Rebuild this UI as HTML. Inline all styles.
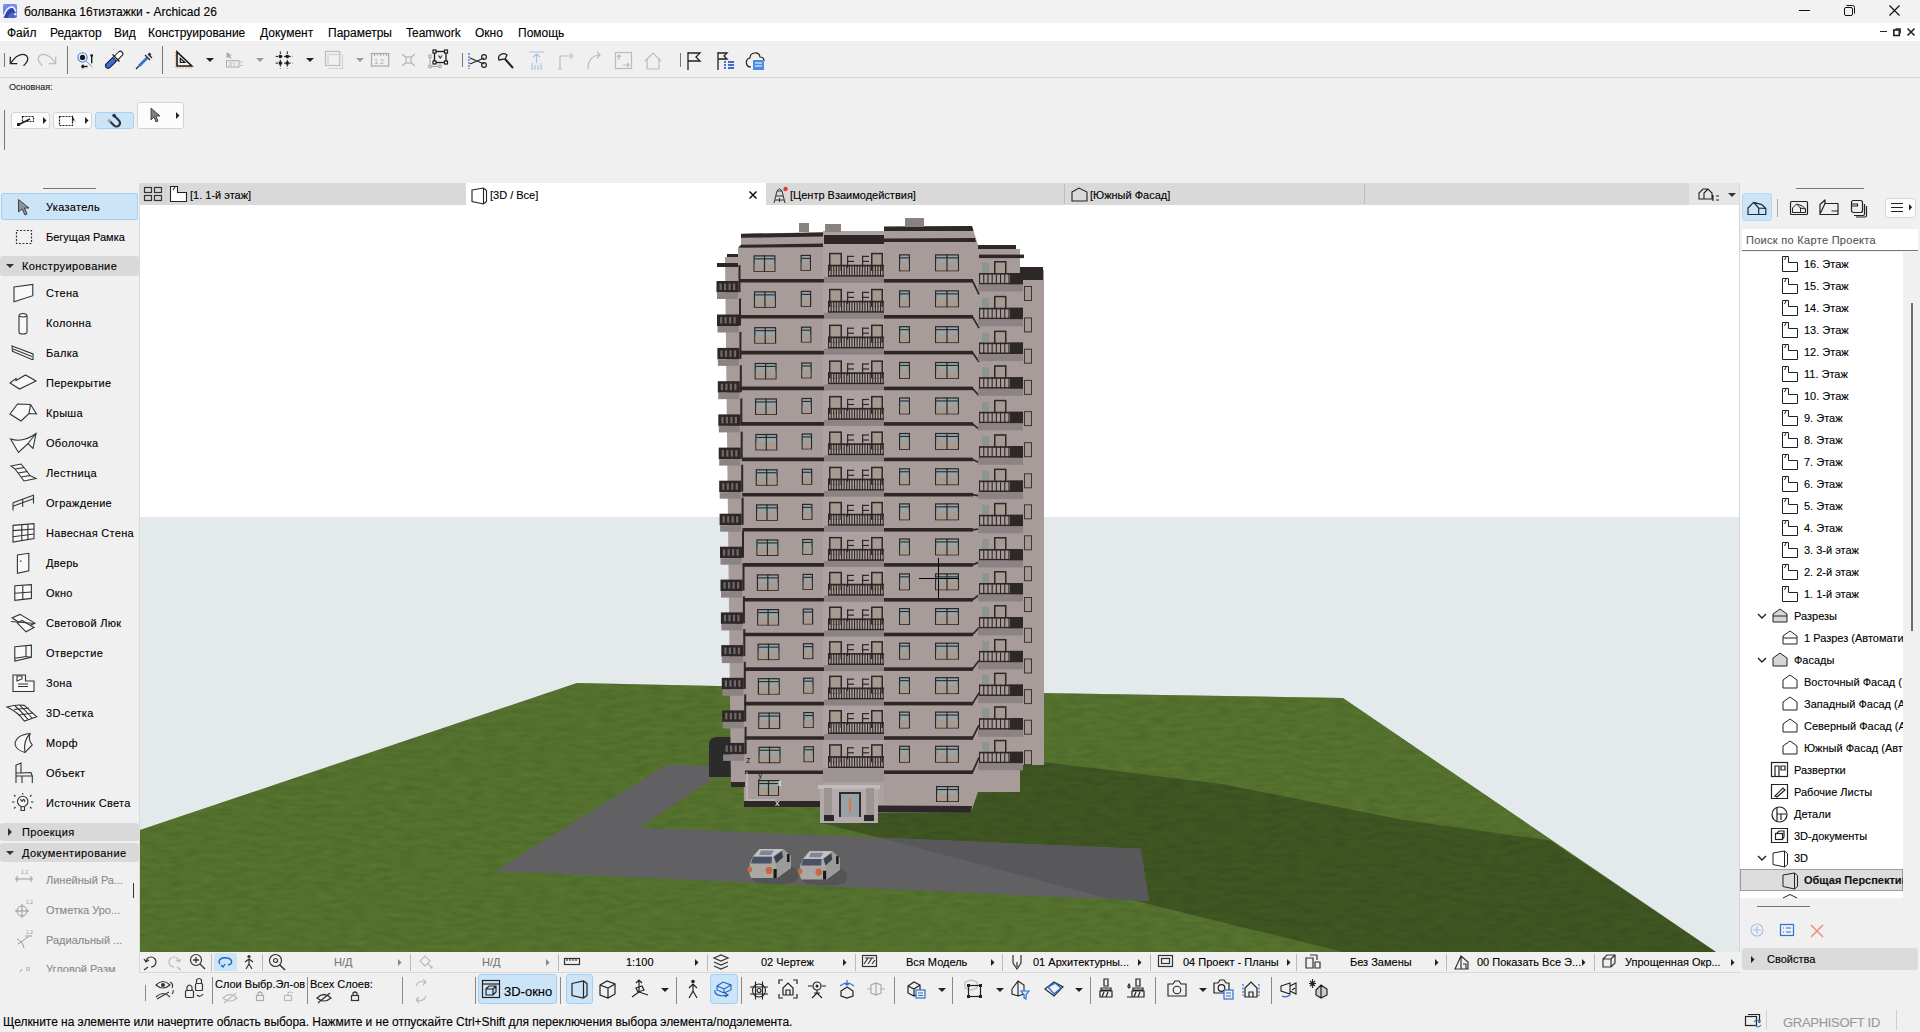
<!DOCTYPE html><html><head><meta charset="utf-8"><style>
*{box-sizing:border-box;margin:0;padding:0}
html,body{width:1920px;height:1032px;overflow:hidden;background:#f0f0f0;font-family:"Liberation Sans",sans-serif;font-size:12px;color:#1a1a1a}
.a{position:absolute}
.t{position:absolute;white-space:nowrap;-webkit-text-stroke:0.12px currentColor}
svg{position:absolute;overflow:visible}
</style></head><body><div class="a" style="left:0px;top:0px;width:1920px;height:23px;background:#f2f2f2"></div><svg style="left:2px;top:3px" width="17" height="17" viewBox="0 0 17 17" fill="none" stroke="#2b2b2b" stroke-width="1.2"><defs><linearGradient id="lg1" x1="0" y1="0" x2="0" y2="1"><stop offset="0" stop-color="#7a8cf2"/><stop offset="1" stop-color="#5f7ae6"/></linearGradient></defs><rect x="1" y="1" width="14" height="14" rx="1.8" fill="url(#lg1)" stroke="none"/><path d="M2,15 Q5,5.5 9.5,5 Q12,5 13,8.5 L13,15 Z" fill="#34449c" stroke="none"/><path d="M5.5,15 Q8,9 11,9.5 L13,10 V15 Z" fill="#4a66d0" stroke="none"/><path d="M1.2,13.8 Q4.5,4.3 9.5,4 Q12.8,4 13.6,8.5" stroke="#f4f8ff" stroke-width="1.5" fill="none"/><rect x="12.2" y="10.3" width="2.2" height="1.8" fill="#fff" stroke="none"/></svg><div class="t" style="left:24px;top:5.3px;font-size:12px;color:#000;line-height:14.4px;">болванка 16тиэтажки - Archicad 26</div><div class="a" style="left:1799px;top:10px;width:11px;height:1px;background:#111"></div><svg style="left:1843px;top:4px" width="12" height="12" viewBox="0 0 12 12" fill="none" stroke="#2b2b2b" stroke-width="1.2"><rect x="1.5" y="3.5" width="8" height="8" rx="1.5" stroke="#111" stroke-width="1"/><path d="M3.5,1.5 h6 a2,2 0 0 1 2,2 v6" stroke="#111" stroke-width="1"/></svg><svg style="left:1889px;top:5px" width="11" height="11" viewBox="0 0 11 11" fill="none" stroke="#2b2b2b" stroke-width="1.2"><path d="M0.5,0.5 L10.5,10.5 M10.5,0.5 L0.5,10.5" stroke="#111" stroke-width="1.2"/></svg><div class="a" style="left:0px;top:23px;width:1920px;height:18px;background:#ffffff"></div><div class="t" style="left:7px;top:26.3px;font-size:12px;color:#000;line-height:14.4px;">Файл</div><div class="t" style="left:50px;top:26.3px;font-size:12px;color:#000;line-height:14.4px;">Редактор</div><div class="t" style="left:114px;top:26.3px;font-size:12px;color:#000;line-height:14.4px;">Вид</div><div class="t" style="left:148px;top:26.3px;font-size:12px;color:#000;line-height:14.4px;">Конструирование</div><div class="t" style="left:260px;top:26.3px;font-size:12px;color:#000;line-height:14.4px;">Документ</div><div class="t" style="left:328px;top:26.3px;font-size:12px;color:#000;line-height:14.4px;">Параметры</div><div class="t" style="left:406px;top:26.3px;font-size:12px;color:#000;line-height:14.4px;">Teamwork</div><div class="t" style="left:475px;top:26.3px;font-size:12px;color:#000;line-height:14.4px;">Окно</div><div class="t" style="left:518px;top:26.3px;font-size:12px;color:#000;line-height:14.4px;">Помощь</div><div class="a" style="left:1880px;top:31px;width:7px;height:1.4px;background:#222"></div><svg style="left:1893px;top:28px" width="8" height="8" viewBox="0 0 8 8" fill="none" stroke="#2b2b2b" stroke-width="1.2"><rect x="0.8" y="2" width="5.5" height="5.5" stroke="#222" stroke-width="1.6"/><path d="M2.5,0.8 h4.7 v4.7" stroke="#222" stroke-width="1.2"/></svg><svg style="left:1907px;top:28px" width="8" height="8" viewBox="0 0 8 8" fill="none" stroke="#2b2b2b" stroke-width="1.2"><path d="M0.5,0.5 L7.5,7.5 M7.5,0.5 L0.5,7.5" stroke="#222" stroke-width="1.6"/></svg><div class="a" style="left:0px;top:41px;width:1920px;height:36px;background:#f0f0f0"></div><div class="a" style="left:0px;top:77px;width:1920px;height:1px;background:#d7d7d7"></div><div class="a" style="left:4px;top:53px;width:1px;height:14px;background:#777"></div><div class="a" style="left:67px;top:46px;width:1px;height:28px;background:#777"></div><div class="a" style="left:162px;top:46px;width:1px;height:28px;background:#777"></div><div class="a" style="left:462px;top:53px;width:1px;height:14px;background:#777"></div><div class="a" style="left:680px;top:53px;width:1px;height:14px;background:#777"></div><svg style="left:8px;top:50px" width="24" height="20" viewBox="0 0 24 20" fill="none" stroke="#2b2b2b" stroke-width="1.2"><path d="M2.5,13.5 C6,8 10,4.5 14.5,4.3 C18.5,4.2 20.5,7.5 19.5,10.5 C18.8,12.8 17,14.5 15.5,15.8" stroke="#222" stroke-width="1.3"/><path d="M2.3,6.8 V13.7 H9.3" stroke="#222" stroke-width="1.3"/></svg><svg style="left:37px;top:50px" width="24" height="20" viewBox="0 0 24 20" fill="none" stroke="#2b2b2b" stroke-width="1.2"><path d="M18.5,13.5 C15,8 11,4.5 6.5,4.3 C2.5,4.2 0.5,7.5 1.5,10.5 C2.2,12.8 4,14.5 5.5,15.8" stroke="#bdbdbd" stroke-width="1.3"/><path d="M18.7,6.8 V13.7 H11.7" stroke="#bdbdbd" stroke-width="1.3"/></svg><svg style="left:75px;top:50px" width="20" height="20" viewBox="0 0 20 20" fill="none" stroke="#2b2b2b" stroke-width="1.2"><circle cx="7.5" cy="7.4" r="4.6" stroke="#4a7ee0" stroke-width="1.1" fill="#e8f0fc"/><circle cx="7.5" cy="7.4" r="2.6" fill="#1a1a1a" stroke="none"/><path d="M10.8,11 L17.5,17" stroke="#6f9ae6" stroke-width="1"/><path d="M16.7,5.5 V13.3" stroke="#1a1a1a" stroke-width="1.4"/><circle cx="16.7" cy="5.6" r="1.4" fill="#1a1a1a" stroke="none"/><path d="M6.5,16.5 H12.5 M6.5,16.5 L8.5,14.8 M6.5,16.5 L8.5,18.2" stroke="#1a1a1a" stroke-width="1.4"/></svg><svg style="left:103px;top:50px" width="22" height="20" viewBox="0 0 22 20" fill="none" stroke="#2b2b2b" stroke-width="1.2"><g transform="translate(11.2,9.7) rotate(-44)"><rect x="-11" y="-2.5" width="22" height="5" rx="2.5" fill="#fff" stroke="#1a1a1a" stroke-width="1"/><rect x="-11" y="-2.5" width="12" height="5" rx="2.5" fill="#3d6bd8" stroke="#1a2a50" stroke-width="1"/><path d="M2.5,-5 V5" stroke="#1a1a1a" stroke-width="1.3"/></g></svg><svg style="left:134px;top:51px" width="20" height="20" viewBox="0 0 20 20" fill="none" stroke="#2b2b2b" stroke-width="1.2"><path d="M2,18 L5,15" stroke="#222" stroke-width="1.2"/><path d="M5,15 L13,7" stroke="#3d6bd8" stroke-width="2.8"/><path d="M11,4 L16,9 M15,2 L17,4 M14,3 L18,7" stroke="#222" stroke-width="1.2"/></svg><svg style="left:175px;top:51px" width="20" height="20" viewBox="0 0 20 20" fill="none" stroke="#2b2b2b" stroke-width="1.2"><path d="M2,0.8 L2,15 L16.8,15 Z" stroke="#1a1a1a" stroke-width="1.6" stroke-linejoin="miter"/><path d="M5.3,7.4 V11.3 H9.8 Z" stroke="#1a1a1a" stroke-width="1.2"/><path d="M0.4,1 V16.8 H18" stroke="#f0a060" stroke-width="0.9" stroke-dasharray="1.6 1.2"/></svg><svg style="left:206px;top:58px" width="8" height="4"><path d="M0,0 L8,0 L4,4 Z" fill="#222"/></svg><svg style="left:256px;top:58px" width="8" height="4"><path d="M0,0 L8,0 L4,4 Z" fill="#999"/></svg><svg style="left:306px;top:58px" width="8" height="4"><path d="M0,0 L8,0 L4,4 Z" fill="#222"/></svg><svg style="left:356px;top:58px" width="8" height="4"><path d="M0,0 L8,0 L4,4 Z" fill="#999"/></svg><svg style="left:225px;top:51px" width="20" height="18" viewBox="0 0 20 18" fill="none" stroke="#2b2b2b" stroke-width="1.2"><path d="M1.5,1 L1.5,7.5 L3.3,5.8 L5.3,7.8 L6.5,6.8 L4.5,4.8 L7,4.3 Z" fill="#aaa" stroke="none"/><rect x="1.5" y="9.7" width="12.5" height="6.3" stroke="#aaa" stroke-width="1"/><text x="3.6" y="15.2" font-size="5.5" font-family="Liberation Sans" fill="#aaa" stroke="none">XY</text><path d="M15.5,11 h2 M15.5,14.5 h2" stroke="#aaa"/></svg><svg style="left:275px;top:51px" width="18" height="18" viewBox="0 0 18 18" fill="none" stroke="#2b2b2b" stroke-width="1.2"><path d="M5.3,0.4 V17.6 M12.3,0.4 V17.6 M0.6,5.4 H17.8 M0.6,12.1 H17.8" stroke="#1a1a1a" stroke-width="1" stroke-dasharray="2.6 1.6"/><rect x="3.8" y="3.9" width="3" height="3" fill="#1a1a1a" stroke="none"/><rect x="10.8" y="3.9" width="3" height="3" fill="#1a1a1a" stroke="none"/><rect x="3.8" y="10.6" width="3" height="3" fill="#1a1a1a" stroke="none"/><rect x="10.8" y="10.6" width="3" height="3" fill="#1a1a1a" stroke="none"/></svg><svg style="left:325px;top:51px" width="20" height="20" viewBox="0 0 20 20" fill="none" stroke="#2b2b2b" stroke-width="1.2"><rect x="0.5" y="0.5" width="14.2" height="14" stroke="#bdbdbd"/><path d="M3,15 V3.5 H14.5 M17.5,3.5 V17.5 H3" stroke="#c8d4e6"/></svg><svg style="left:371px;top:53px" width="20" height="16" viewBox="0 0 20 16" fill="none" stroke="#2b2b2b" stroke-width="1.2"><rect x="0.5" y="0.5" width="17.2" height="12.5" stroke="#aaa"/><path d="M3.5,0.5 v2.5 M6.5,0.5 v2 M9.5,0.5 v2.5 M12.5,0.5 v2 M15.5,0.5 v2.5" stroke="#aaa"/><text x="3.2" y="11" font-size="7" font-family="Liberation Sans" fill="#aaa" stroke="none">1 2</text></svg><svg style="left:401px;top:53px" width="15" height="14" viewBox="0 0 15 14" fill="none" stroke="#2b2b2b" stroke-width="1.2"><path d="M1,1 L5,4.5 M14,1 L10,4.5 M1,13 L5,9.5 M14,13 L10,9.5" stroke="#b5b5b5" stroke-width="1.1"/><rect x="5" y="4" width="5" height="6" stroke="#b5b5b5"/></svg><svg style="left:428px;top:50px" width="20" height="20" viewBox="0 0 20 20" fill="none" stroke="#2b2b2b" stroke-width="1.2"><path d="M2,6 V16.5 H12 V13" stroke="#999" stroke-width="0.9"/><rect x="0.8" y="5" width="2.4" height="2.4" fill="#f0f0f0" stroke="#999" stroke-width="0.8"/><rect x="0.8" y="15.3" width="2.4" height="2.4" fill="#f0f0f0" stroke="#999" stroke-width="0.8"/><rect x="10.8" y="15.3" width="2.4" height="2.4" fill="#f0f0f0" stroke="#999" stroke-width="0.8"/><rect x="6.5" y="1.5" width="11.5" height="11" stroke="#1a1a1a" stroke-width="1.3"/><rect x="5" y="0" width="3" height="3" fill="#fff" stroke="#1a1a1a"/><rect x="16.5" y="0" width="3" height="3" fill="#fff" stroke="#1a1a1a"/><rect x="5" y="11" width="3" height="3" fill="#fff" stroke="#1a1a1a"/><rect x="16.5" y="11" width="3" height="3" fill="#fff" stroke="#1a1a1a"/><path d="M10.5,5.5 L12.3,8 L14,5.5" stroke="#333"/></svg><svg style="left:468px;top:51px" width="20" height="20" viewBox="0 0 20 20" fill="none" stroke="#2b2b2b" stroke-width="1.2"><path d="M1,2 V18" stroke="#3d6bd8" stroke-dasharray="2 1"/><path d="M2,7 L16,13 M2,13 L16,7" stroke="#222"/><circle cx="16" cy="6" r="2.4" stroke="#222"/><circle cx="16" cy="14" r="2.4" stroke="#222"/></svg><svg style="left:496px;top:51px" width="20" height="20" viewBox="0 0 20 20" fill="none" stroke="#2b2b2b" stroke-width="1.2"><path d="M3,9 C1,4 7,1 11,4 L9,8 Z" stroke="#222" stroke-width="1.3"/><path d="M9,8 L17,17" stroke="#222" stroke-width="2"/></svg><svg style="left:527px;top:51px" width="20" height="20" viewBox="0 0 20 20" fill="none" stroke="#2b2b2b" stroke-width="1.2"><path d="M2,1 H17 M9.5,3 V12 M6,6 L9.5,3 L13,6 M5,12 V19 M8,14 V19 M11,14 V19 M14,12 V19" stroke="#a9c3e8"/></svg><svg style="left:556px;top:51px" width="20" height="20" viewBox="0 0 20 20" fill="none" stroke="#2b2b2b" stroke-width="1.2"><path d="M4,18 V5 H15 M15,2 V8 M13,5 H18 M2,18 H6" stroke="#bbb"/></svg><svg style="left:585px;top:51px" width="20" height="20" viewBox="0 0 20 20" fill="none" stroke="#2b2b2b" stroke-width="1.2"><path d="M3,18 C3,9 8,4 15,4 M12,1 L15,4 L12,7" stroke="#bbb"/></svg><svg style="left:614px;top:51px" width="20" height="20" viewBox="0 0 20 20" fill="none" stroke="#2b2b2b" stroke-width="1.2"><rect x="1.5" y="1.5" width="16" height="16" stroke="#bbb"/><path d="M5,9 V4 M3,6 L5,4 L7,6 M9,14 H15 M13,12 L15,14 L13,16" stroke="#bbb"/></svg><svg style="left:643px;top:51px" width="20" height="20" viewBox="0 0 20 20" fill="none" stroke="#2b2b2b" stroke-width="1.2"><path d="M2,10 L10,2 L18,10 M4,8 V18 H16 V8" stroke="#bbb"/></svg><svg style="left:686px;top:51px" width="18" height="20" viewBox="0 0 18 20" fill="none" stroke="#2b2b2b" stroke-width="1.2"><path d="M2,1 V19 M2,2 H14 L10,6 L14,10 H2" stroke="#222" stroke-width="1.3"/></svg><svg style="left:716px;top:51px" width="20" height="20" viewBox="0 0 20 20" fill="none" stroke="#2b2b2b" stroke-width="1.2"><path d="M2,1 V19 M2,2 H11 L8,5 L11,8 H2" stroke="#222" stroke-width="1.3"/><path d="M8,11 h2 M8,14 h2 M8,17 h2 M12,11 h6 M12,14 h6 M12,17 h6" stroke="#3d6bd8" stroke-width="2"/></svg><svg style="left:744px;top:50px" width="22" height="22" viewBox="0 0 22 22" fill="none" stroke="#2b2b2b" stroke-width="1.2"><path d="M7,17 C1,17 1,9 6,8 C6,2 15,1 16,7 C19,7 20,9 20,11" stroke="#222" stroke-width="1.2"/><rect x="9" y="10" width="11" height="10" fill="#4a8de6" stroke="none"/><path d="M11,13 h7 M11,16 h7" stroke="#fff" stroke-width="1"/></svg><div class="t" style="left:9px;top:81.6px;font-size:9px;color:#222;line-height:10.8px;">Основная:</div><div class="a" style="left:4px;top:110px;width:1px;height:40px;background:#777"></div><div class="a" style="left:10.5px;top:112px;width:39px;height:17px;background:#fcfcfc;border:1px solid #d4d4d4;border-radius:3px"></div><div class="a" style="left:52.5px;top:112px;width:39px;height:17px;background:#fcfcfc;border:1px solid #d4d4d4;border-radius:3px"></div><div class="a" style="left:94.5px;top:112px;width:39px;height:17px;background:#cce4f7;border:1px solid #a8d0f0;border-radius:3px"></div><div class="a" style="left:136.5px;top:102px;width:47px;height:27px;background:#fcfcfc;border:1px solid #d4d4d4;border-radius:3px"></div><svg style="left:16px;top:114px" width="22" height="14" viewBox="0 0 22 14" fill="none" stroke="#2b2b2b" stroke-width="1.2"><rect x="6.5" y="2.5" width="11" height="5" stroke="#222" stroke-dasharray="2 1"/><path d="M2,11 L14,5" stroke="#222" stroke-width="1.6"/><rect x="1" y="9" width="3" height="3" fill="#222" stroke="none"/></svg><svg style="left:43px;top:116.5px" width="3.5" height="7"><path d="M0,0 L3.5,3.5 L0,7 Z" fill="#222"/></svg><svg style="left:58px;top:114px" width="22" height="14" viewBox="0 0 22 14" fill="none" stroke="#2b2b2b" stroke-width="1.2"><rect x="1.5" y="2.5" width="13" height="9" stroke="#222" stroke-dasharray="2 1"/><path d="M14,1 L14,8 L16,6 L18,9" fill="#222" stroke="none"/></svg><svg style="left:85px;top:116.5px" width="3.5" height="7"><path d="M0,0 L3.5,3.5 L0,7 Z" fill="#222"/></svg><svg style="left:104px;top:111px" width="22" height="22" viewBox="0 0 22 22" fill="none" stroke="#2b2b2b" stroke-width="1.2"><g transform="translate(12.5,12) rotate(-45)"><path d="M-3.5,-7 V0 A3.5,3.5 0 0 0 3.5,0 V-7" stroke="#2a3340" stroke-width="2.2" fill="none"/><path d="M-3.5,-8 V-5" stroke="#a0a0a0" stroke-width="2.8"/><circle cx="3.5" cy="-7" r="1.8" fill="#2a3340" stroke="none"/></g></svg><svg style="left:150px;top:107px" width="12" height="16" viewBox="0 0 12 16" fill="none" stroke="#2b2b2b" stroke-width="1.2"><path d="M1,1 L1,13 L4,10 L6,15 L8,14 L6,9 L10,9 Z" fill="#7b7f86" stroke="#333" stroke-width="0.8"/></svg><svg style="left:176px;top:111.5px" width="3.5" height="7"><path d="M0,0 L3.5,3.5 L0,7 Z" fill="#222"/></svg><div class="a" style="left:0px;top:183px;width:139px;height:790px;background:#f0f0f0"></div><div class="a" style="left:139px;top:183px;width:1px;height:790px;background:#d9d9d9"></div><div class="a" style="left:43px;top:188px;width:53px;height:1px;background:#777"></div><div class="a" style="left:1px;top:193px;width:137px;height:27px;background:#cce4f7;border:1px solid #a5cff0;border-radius:2px"></div><svg style="left:17px;top:198px" width="14" height="18" viewBox="0 0 14 18" fill="none" stroke="#2b2b2b" stroke-width="1.2"><path d="M1.5,1.5 L1.5,14 L5,11 L8,17 L10,16 L7.5,10 L12,10 Z" fill="#8e9299" stroke="#333" stroke-width="0.9"/></svg><div class="t" style="left:46px;top:201.4px;font-size:11px;color:#000;line-height:13.2px;letter-spacing:0.3px">Указатель</div><svg style="left:15px;top:229px" width="18" height="16" viewBox="0 0 18 16" fill="none" stroke="#2b2b2b" stroke-width="1.2"><rect x="1.5" y="1.5" width="15" height="13" stroke="#333" stroke-dasharray="2 1.5"/></svg><div class="t" style="left:46px;top:231.4px;font-size:11px;color:#000;line-height:13.2px;">Бегущая Рамка</div><div class="a" style="left:0px;top:256px;width:139px;height:20px;background:#d9d9d9;border-radius:3px"></div><svg style="left:6px;top:264px" width="8" height="4"><path d="M0,0 L8,0 L4,4 Z" fill="#333"/></svg><div class="t" style="left:22px;top:260.4px;font-size:11px;color:#000;line-height:13.2px;letter-spacing:0.4px">Конструирование</div><svg style="left:9px;top:283px" width="28" height="21" viewBox="0 0 28 21" fill="none" stroke="#2b2b2b" stroke-width="1.2"><g stroke="#333" stroke-width="1.1" fill="none"><path d="M5,4 L23.8,1.4 L23.8,12.7 L5,18.8 Z" fill="#f8f8f8"/></g></svg><div class="t" style="left:46px;top:287.4px;font-size:11px;color:#000;line-height:13.2px;letter-spacing:0.3px">Стена</div><svg style="left:9px;top:313px" width="28" height="21" viewBox="0 0 28 21" fill="none" stroke="#2b2b2b" stroke-width="1.2"><g stroke="#333" stroke-width="1.1" fill="none"><path d="M10,3 Q10,0.5 14,0.5 Q18,0.5 18,3 V19 Q18,21 14,21 Q10,21 10,19 Z" fill="#f8f8f8"/><path d="M10,3 Q14,5 18,3"/></g></svg><div class="t" style="left:46px;top:317.4px;font-size:11px;color:#000;line-height:13.2px;letter-spacing:0.3px">Колонна</div><svg style="left:9px;top:343px" width="28" height="21" viewBox="0 0 28 21" fill="none" stroke="#2b2b2b" stroke-width="1.2"><g stroke="#333" stroke-width="1.1" fill="none"><path d="M3,3 L24,11 L24,16.5 L23,16.5 L4,8.5 L3.5,8.5 Z" fill="#f8f8f8"/><path d="M4,6 L23,13.5"/></g></svg><div class="t" style="left:46px;top:347.4px;font-size:11px;color:#000;line-height:13.2px;letter-spacing:0.3px">Балка</div><svg style="left:9px;top:373px" width="28" height="21" viewBox="0 0 28 21" fill="none" stroke="#2b2b2b" stroke-width="1.2"><g stroke="#333" stroke-width="1.1" fill="none"><path d="M1,10 L7,5.5 L7,7.5 L16.5,2 L27,8 L10.5,16 Z" fill="#f8f8f8"/></g></svg><div class="t" style="left:46px;top:377.4px;font-size:11px;color:#000;line-height:13.2px;letter-spacing:0.3px">Перекрытие</div><svg style="left:9px;top:403px" width="28" height="21" viewBox="0 0 28 21" fill="none" stroke="#2b2b2b" stroke-width="1.2"><g stroke="#333" stroke-width="1.1" fill="none"><path d="M1,11 L8.5,1 L21.5,1.5 L27.5,11 L20,10.5 L12,18 Z" fill="#f8f8f8"/><path d="M21.5,1.5 L20,10.5"/></g></svg><div class="t" style="left:46px;top:407.4px;font-size:11px;color:#000;line-height:13.2px;letter-spacing:0.3px">Крыша</div><svg style="left:9px;top:433px" width="28" height="21" viewBox="0 0 28 21" fill="none" stroke="#2b2b2b" stroke-width="1.2"><g stroke="#333" stroke-width="1.1" fill="none"><path d="M1.5,6 Q14,10 27,0.5 L24,15.5 L19,10.5 L9.5,19.5 Z" fill="#f8f8f8"/><path d="M27,0.5 L19,10.5"/></g></svg><div class="t" style="left:46px;top:437.4px;font-size:11px;color:#000;line-height:13.2px;letter-spacing:0.3px">Оболочка</div><svg style="left:9px;top:463px" width="28" height="21" viewBox="0 0 28 21" fill="none" stroke="#2b2b2b" stroke-width="1.2"><g stroke="#333" stroke-width="1.1" fill="none"><path d="M2,3 L12,1 L15,4.5 L6,6 Z M6,6 L15,4.5 L18,8.5 L9,10 Z M9,10 L18,8.5 L21,12.5 L12,14 Z M12,14 L21,12.5 L27,15.5 L15,18 Z" fill="#f8f8f8"/></g></svg><div class="t" style="left:46px;top:467.4px;font-size:11px;color:#000;line-height:13.2px;letter-spacing:0.3px">Лестница</div><svg style="left:9px;top:493px" width="28" height="21" viewBox="0 0 28 21" fill="none" stroke="#2b2b2b" stroke-width="1.2"><g stroke="#333" stroke-width="1.1" fill="none"><path d="M4,9.7 L25,2 M4,13.2 L25,5.5 M4,9.7 V17.6 M13.7,6.2 V14 M24.5,2.2 V10.6"/></g></svg><div class="t" style="left:46px;top:497.4px;font-size:11px;color:#000;line-height:13.2px;letter-spacing:0.3px">Ограждение</div><svg style="left:9px;top:523px" width="28" height="21" viewBox="0 0 28 21" fill="none" stroke="#2b2b2b" stroke-width="1.2"><g stroke="#333" stroke-width="1.1" fill="none"><path d="M4,2.4 L25,0.7 L25,15.5 L4,19 Z" fill="#f8f8f8"/><path d="M4,7.6 L25,6 M4,13.7 L25,11 M12.8,1.8 V17.6 M18.9,1.2 V16.5"/></g></svg><div class="t" style="left:46px;top:527.4px;font-size:11px;color:#000;line-height:13.2px;letter-spacing:0.3px">Навесная Стена</div><svg style="left:9px;top:553px" width="28" height="21" viewBox="0 0 28 21" fill="none" stroke="#2b2b2b" stroke-width="1.2"><g stroke="#333" stroke-width="1.1" fill="none"><path d="M8.4,2 L19.8,0.3 L19.8,17.8 L8.4,20.4 Z" fill="#f8f8f8"/><path d="M11,8.5 L12.5,7.8"/></g></svg><div class="t" style="left:46px;top:557.4px;font-size:11px;color:#000;line-height:13.2px;letter-spacing:0.3px">Дверь</div><svg style="left:9px;top:583px" width="28" height="21" viewBox="0 0 28 21" fill="none" stroke="#2b2b2b" stroke-width="1.2"><g stroke="#333" stroke-width="1.1" fill="none"><path d="M5.8,2.7 L22.4,1.7 L22.4,15.4 L5.8,17.4 Z" fill="#f8f8f8"/><path d="M13.8,2.2 V16.4 M5.8,10.2 L22.4,9"/></g></svg><div class="t" style="left:46px;top:587.4px;font-size:11px;color:#000;line-height:13.2px;letter-spacing:0.3px">Окно</div><svg style="left:9px;top:613px" width="28" height="21" viewBox="0 0 28 21" fill="none" stroke="#2b2b2b" stroke-width="1.2"><g stroke="#333" stroke-width="1.1" fill="none"><path d="M3.2,4.8 L11,1.4 L25.9,10.1 L17.2,14.5 Z" fill="#f8f8f8"/><path d="M8.4,10.1 L13,7.5 L25,14.5 L17,18.8 Z" fill="#f8f8f8"/><path d="M2,8.5 L25.9,10.5"/></g></svg><div class="t" style="left:46px;top:617.4px;font-size:11px;color:#000;line-height:13.2px;letter-spacing:0.3px">Световой Люк</div><svg style="left:9px;top:643px" width="28" height="21" viewBox="0 0 28 21" fill="none" stroke="#2b2b2b" stroke-width="1.2"><g stroke="#333" stroke-width="1.1" fill="none"><path d="M5.8,3.7 L22.4,2.2 L22.4,14.4 L5.8,18 Z" fill="#f8f8f8"/><path d="M17,3 V13.5 L5.8,15.2 M17,13.5 L22.4,14.4"/></g></svg><div class="t" style="left:46px;top:647.4px;font-size:11px;color:#000;line-height:13.2px;letter-spacing:0.3px">Отверстие</div><svg style="left:9px;top:673px" width="28" height="21" viewBox="0 0 28 21" fill="none" stroke="#2b2b2b" stroke-width="1.2"><g stroke="#333" stroke-width="1.1" fill="none"><path d="M4,2 H16.5 V8 H25 V18.5 H4 Z" fill="#f8f8f8"/><path d="M8,8 L8,3 L13,3 L13,6 Z M9,11 H19 M9,13.5 H19"/></g></svg><div class="t" style="left:46px;top:677.4px;font-size:11px;color:#000;line-height:13.2px;letter-spacing:0.3px">Зона</div><svg style="left:9px;top:703px" width="28" height="21" viewBox="0 0 28 21" fill="none" stroke="#2b2b2b" stroke-width="1.2"><g stroke="#333" stroke-width="1.1" fill="none"><path d="M-2,4 Q8,1 15.4,2.4 Q20,7 27.6,13.7 L15.4,18.1 Q9,9 -2,4 Z" fill="#f8f8f8"/><path d="M6,3 Q12,8 19,16.5 M10.5,2.2 Q17,8 23,15 M5,6.5 L20,5 M10,12 L24,10"/></g></svg><div class="t" style="left:46px;top:707.4px;font-size:11px;color:#000;line-height:13.2px;letter-spacing:0.3px">3D-сетка</div><svg style="left:9px;top:733px" width="28" height="21" viewBox="0 0 28 21" fill="none" stroke="#2b2b2b" stroke-width="1.2"><g stroke="#333" stroke-width="1.1" fill="none"><path d="M6,11 Q7,2 21,0.5 Q19,7 23.3,12 L16,19.5 Q7,17 6,11 Z" fill="#f8f8f8"/><path d="M21,0.5 Q14,8 16,19.5"/></g></svg><div class="t" style="left:46px;top:737.4px;font-size:11px;color:#000;line-height:13.2px;letter-spacing:0.3px">Морф</div><svg style="left:9px;top:763px" width="28" height="21" viewBox="0 0 28 21" fill="none" stroke="#2b2b2b" stroke-width="1.2"><g stroke="#333" stroke-width="1.1" fill="none"><path d="M7,20 V2 L12,0 V10 M7,10 L12,10 L22,9.5 L23.3,13 M7,13 L23.3,13 V20 M13,13 V20"/></g></svg><div class="t" style="left:46px;top:767.4px;font-size:11px;color:#000;line-height:13.2px;letter-spacing:0.3px">Объект</div><svg style="left:9px;top:793px" width="28" height="21" viewBox="0 0 28 21" fill="none" stroke="#2b2b2b" stroke-width="1.2"><g stroke="#333" stroke-width="1.1" fill="none"><circle cx="13.7" cy="8.5" r="5.2" fill="#f8f8f8"/><path d="M12,14 V17.5 H15.5 V14 M11.5,6 Q13,10 14,7 Q15,5 16,9 M13.7,0 V1.5 M5,2 L6.5,3.5 M22.5,2 L21,3.5 M3,9 H5.5 M22,9 H24.5 M5,15.5 L6.5,14 M22.5,15.5 L21,14"/></g></svg><div class="t" style="left:46px;top:797.4px;font-size:11px;color:#000;line-height:13.2px;letter-spacing:0.3px">Источник Света</div><div class="a" style="left:0px;top:823px;width:139px;height:18px;background:#d9d9d9;border-radius:3px"></div><svg style="left:8px;top:828px" width="4" height="8"><path d="M0,0 L4,4 L0,8 Z" fill="#333"/></svg><div class="t" style="left:22px;top:826.4px;font-size:11px;color:#000;line-height:13.2px;letter-spacing:0.4px">Проекция</div><div class="a" style="left:0px;top:843px;width:139px;height:19px;background:#d9d9d9;border-radius:3px"></div><svg style="left:6px;top:851px" width="8" height="4"><path d="M0,0 L8,0 L4,4 Z" fill="#333"/></svg><div class="t" style="left:22px;top:847.4px;font-size:11px;color:#000;line-height:13.2px;letter-spacing:0.45px">Документирование</div><svg style="left:14px;top:870px" width="20" height="20" viewBox="0 0 20 20" fill="none" stroke="#2b2b2b" stroke-width="1.2"><g stroke="#999" stroke-width="1" fill="none"><path d="M1,9 H19 M3,6 V12 M17,6 V12"/><text x="7" y="4" font-size="5" fill="#999" stroke="none">1.2</text></g></svg><div class="t" style="left:46px;top:874.4px;font-size:11px;color:#8a8a8a;line-height:13.2px;">Линейный Ра...</div><svg style="left:14px;top:900px" width="20" height="20" viewBox="0 0 20 20" fill="none" stroke="#2b2b2b" stroke-width="1.2"><g stroke="#999" stroke-width="1" fill="none"><circle cx="8" cy="11" r="5"/><path d="M8,4 V18 M1,11 H15"/><text x="12" y="4" font-size="5" fill="#999" stroke="none">1.2</text></g></svg><div class="t" style="left:46px;top:904.4px;font-size:11px;color:#8a8a8a;line-height:13.2px;">Отметка Уро...</div><svg style="left:14px;top:930px" width="20" height="20" viewBox="0 0 20 20" fill="none" stroke="#2b2b2b" stroke-width="1.2"><g stroke="#999" stroke-width="1" fill="none"><path d="M3,9 Q9,12 10,18 M4,14 L14,7 M11,6 H18"/><text x="12" y="4" font-size="5" fill="#999" stroke="none">1.2</text></g></svg><div class="t" style="left:46px;top:934.4px;font-size:11px;color:#8a8a8a;line-height:13.2px;">Радиальный ...</div><svg style="left:14px;top:959px" width="20" height="20" viewBox="0 0 20 20" fill="none" stroke="#2b2b2b" stroke-width="1.2"><g stroke="#999" stroke-width="1" fill="none"><path d="M2,18 L8,10 M5,18 H12"/><text x="12" y="12" font-size="7" fill="#999" stroke="none">α</text></g></svg><div class="t" style="left:46px;top:963.4px;font-size:11px;color:#8a8a8a;line-height:13.2px;">Угловой Разм</div><div class="a" style="left:133px;top:883px;width:1px;height:15px;background:#333"></div><div class="a" style="left:0px;top:972px;width:139px;height:1px;background:#f0f0f0"></div><div class="a" style="left:140px;top:183px;width:1600px;height:22px;background:#d9d9d9"></div><svg style="left:144px;top:187px" width="19" height="15" viewBox="0 0 19 15" fill="none" stroke="#2b2b2b" stroke-width="1.2"><rect x="0.5" y="0.5" width="7" height="5" stroke="#333"/><rect x="10.5" y="0.5" width="7" height="5" stroke="#333"/><rect x="0.5" y="8.5" width="7" height="5" stroke="#333"/><rect x="10.5" y="8.5" width="7" height="5" stroke="#333"/></svg><div class="a" style="left:165px;top:184px;width:1px;height:20px;background:#cfcfcf"></div><svg style="left:170px;top:186px" width="18" height="16" viewBox="0 0 18 16" fill="none" stroke="#2b2b2b" stroke-width="1.2"><path d="M0.5,0.5 H7.5 V6.5 H16.5 V15.5 H0.5 Z M3,4 L5,1" stroke="#222" stroke-width="1.1" fill="#fff"/></svg><div class="t" style="left:190px;top:189.4px;font-size:11px;color:#000;line-height:13.2px;">[1. 1-й этаж]</div><div class="a" style="left:466px;top:183px;width:300px;height:22px;background:#ffffff"></div><svg style="left:471px;top:187px" width="16" height="16" viewBox="0 0 16 16" fill="none" stroke="#2b2b2b" stroke-width="1.2"><path d="M1,3 L12.5,1 L15.5,3.5 V14.5 L12.5,17 L1,14.5 Z M12.5,1 V17" stroke="#222" stroke-width="1.1"/></svg><div class="t" style="left:490px;top:189.4px;font-size:11px;color:#000;line-height:13.2px;">[3D / Все]</div><svg style="left:749px;top:191px" width="8" height="8" viewBox="0 0 8 8" fill="none" stroke="#2b2b2b" stroke-width="1.2"><path d="M0.5,0.5 L7.5,7.5 M7.5,0.5 L0.5,7.5" stroke="#111" stroke-width="1.5"/></svg><svg style="left:771px;top:186px" width="18" height="18" viewBox="0 0 18 18" fill="none" stroke="#2b2b2b" stroke-width="1.2"><path d="M3,17 L6,5 H11 L14,17 M5,10 H12 M4,14 H13 M6,5 Q8.5,1 11,5 M8.5,12 V16" stroke="#333" stroke-width="1"/><circle cx="14.5" cy="3" r="2.2" fill="#e53935" stroke="none"/></svg><div class="t" style="left:790px;top:189.4px;font-size:11px;color:#000;line-height:13.2px;">[Центр Взаимодействия]</div><div class="a" style="left:1064px;top:184px;width:1px;height:20px;background:#bdbdbd"></div><svg style="left:1071px;top:187px" width="17" height="15" viewBox="0 0 17 15" fill="none" stroke="#2b2b2b" stroke-width="1.2"><path d="M1,5 L8,1 L16,5 V14 H1 Z" stroke="#222" stroke-width="1.1"/></svg><div class="t" style="left:1090px;top:189.4px;font-size:11px;color:#000;line-height:13.2px;">[Южный Фасад]</div><div class="a" style="left:1364px;top:184px;width:1px;height:20px;background:#bdbdbd"></div><div class="a" style="left:1689px;top:183px;width:50px;height:22px;background:#e6e6e6"></div><svg style="left:1698px;top:187px" width="24" height="16" viewBox="0 0 24 16" fill="none" stroke="#2b2b2b" stroke-width="1.2"><path d="M1,12 V6 L5,2 H10 L14,6 V12 Z M10,2 L6,6 V12 M15,8 V14 M18,9 h3 M18,13 h3" stroke="#222" stroke-width="1.1"/></svg><svg style="left:1728px;top:193px" width="8" height="4"><path d="M0,0 L8,0 L4,4 Z" fill="#333"/></svg><svg style="left:140px;top:205px" width="1600" height="747" viewBox="140 205 1600 747" font-family="Liberation Sans"><rect x="140.0" y="205.0" width="1600.0" height="313.0" fill="#ffffff" /><rect x="140.0" y="517.0" width="1600.0" height="435.0" fill="#e4e9ec" /><defs><filter id="gn" x="140" y="680" width="1600" height="272" filterUnits="userSpaceOnUse" color-interpolation-filters="sRGB"><feTurbulence type="fractalNoise" baseFrequency="0.06 0.22" numOctaves="2" seed="5"/><feColorMatrix values="0.16 0 0 0 0.25  0.2 0 0 0 0.34  0.08 0 0 0 0.12  0 0 0 0 0.4"/></filter><clipPath id="fc"><polygon points="140,830 577,683 1040,693 1343,698 1716,952 140,952"/></clipPath></defs><polygon points="140.0,830.0 577.0,683.0 1040.0,693.0 1343.0,698.0 1716.0,952.0 140.0,952.0" fill="#527030" /><rect x="140" y="680" width="1600" height="272" filter="url(#gn)" clip-path="url(#fc)"/><polygon points="1043.0,762.0 1222.0,784.0 1404.0,820.0 1550.0,840.5 1716.0,952.0 1343.0,952.0 821.0,823.0 821.0,790.0" fill="#000" fill-opacity="0.25"/><polygon points="495.0,871.0 667.0,764.5 712.0,766.0 712.0,779.0 639.4,827.5 1140.6,848.8 1149.0,901.0" fill="#616063" /><polygon points="879.0,837.5 1140.6,848.8 1149.0,901.0 1112.0,899.5" fill="#58585b" /><path d="M709,745 Q709,737 717,737 L731,737 L731,777 L709,777 Z" fill="#2b2b2c"/><polygon points="725.0,257.0 741.0,257.0 746.0,787.0 731.0,787.0" fill="#a89c9b" /><rect x="727.0" y="254.0" width="11.0" height="3.0" fill="#2e2727" /><rect x="717.0" y="263.0" width="21.0" height="4.0" fill="#2e2727" /><polygon points="741.0,234.0 824.0,232.0 824.0,807.0 744.0,807.0 738.0,248.0 741.0,248.0" fill="#a89c9b" /><polygon points="741.0,233.7 824.0,232.5 824.0,236.5 741.0,237.8" fill="#2e2727" /><polygon points="741.0,244.8 824.0,243.5 824.0,247.0 738.0,247.7" fill="#2e2727" /><rect x="799.0" y="223.0" width="10.0" height="9.0" fill="#8a8181" /><rect x="823.0" y="231.0" width="61.0" height="582.0" fill="#ada2a1" /><rect x="825.0" y="224.0" width="16.0" height="8.0" fill="#8a8181" /><rect x="824.0" y="235.0" width="60.0" height="9.0" fill="#2e2727" /><polygon points="884.0,227.0 972.0,226.0 978.0,245.0 978.0,792.0 971.0,812.0 884.0,813.0" fill="#a89c9b" /><polygon points="884.0,226.5 972.0,226.0 973.5,231.0 884.0,231.0" fill="#2e2727" /><polygon points="884.0,238.5 975.0,238.0 976.0,242.0 884.0,242.0" fill="#2e2727" /><rect x="905.0" y="218.0" width="19.0" height="9.0" fill="#8a8181" /><rect x="978.0" y="249.0" width="42.0" height="543.0" fill="#a89c9b" /><rect x="978.0" y="245.0" width="38.0" height="4.0" fill="#2e2727" /><rect x="979.0" y="254.6" width="45.0" height="3.5" fill="#2e2727" /><rect x="1019.5" y="270.0" width="24.5" height="495.0" fill="#a89c9b" /><rect x="1020.0" y="267.0" width="23.0" height="13.0" fill="#2e2727" /><polygon points="740.0,279.0 824.0,279.0 824.0,282.6 740.0,282.6" fill="#2e2727" /><rect x="884.0" y="279.0" width="89.0" height="3.6" fill="#2e2727" /><path d="M972.5,280.8 L979,294.3" stroke="#2e2727" stroke-width="1.7"/><rect x="753.5" y="255.3" width="22.0" height="16.5" fill="#27282a" /><rect x="754.7" y="256.5" width="19.6" height="14.1" fill="#9aa3a5" /><rect x="754.7" y="263.6" width="19.6" height="7.4" fill="#a89a8e" /><rect x="754.7" y="258.3" width="19.6" height="1.1" fill="#27282a" /><rect x="763.9" y="255.3" width="1.2" height="16.5" fill="#27282a" /><rect x="800.5" y="254.8" width="10.5" height="16.0" fill="#27282a" /><rect x="801.7" y="256.0" width="8.1" height="13.6" fill="#9aa3a5" /><rect x="801.7" y="262.8" width="8.1" height="7.2" fill="#a89a8e" /><rect x="801.7" y="257.8" width="8.1" height="1.1" fill="#27282a" /><rect x="899.0" y="254.3" width="11.0" height="17.0" fill="#27282a" /><rect x="900.2" y="255.5" width="8.6" height="14.6" fill="#9aa3a5" /><rect x="900.2" y="262.8" width="8.6" height="7.7" fill="#a89a8e" /><rect x="900.2" y="257.3" width="8.6" height="1.1" fill="#27282a" /><rect x="935.0" y="254.3" width="24.0" height="17.0" fill="#27282a" /><rect x="936.2" y="255.5" width="21.6" height="14.6" fill="#9aa3a5" /><rect x="936.2" y="262.8" width="21.6" height="7.7" fill="#a89a8e" /><rect x="936.2" y="257.3" width="21.6" height="1.1" fill="#27282a" /><rect x="946.4" y="254.3" width="1.2" height="17.0" fill="#27282a" /><rect x="829.0" y="252.8" width="13.0" height="18.0" fill="#2e2727" /><rect x="830.5" y="254.3" width="10.0" height="16.5" fill="#a69b92" /><rect x="871.0" y="252.8" width="12.0" height="18.0" fill="#2e2727" /><rect x="872.5" y="254.3" width="9.0" height="16.5" fill="#a69b92" /><rect x="847.0" y="255.8" width="1.2" height="12.0" fill="#2e2727" /><rect x="847.0" y="255.8" width="7.0" height="1.2" fill="#2e2727" /><rect x="847.0" y="260.8" width="7.0" height="1.2" fill="#2e2727" /><rect x="862.0" y="255.8" width="1.2" height="12.0" fill="#2e2727" /><rect x="862.0" y="255.8" width="7.0" height="1.2" fill="#2e2727" /><rect x="862.0" y="260.8" width="7.0" height="1.2" fill="#2e2727" /><rect x="828.0" y="264.8" width="56.0" height="1.6" fill="#2e2727" /><rect x="828.0" y="275.2" width="56.0" height="1.6" fill="#2e2727" /><rect x="828.0" y="264.8" width="1.1" height="12.0" fill="#2e2727" /><rect x="830.6" y="264.8" width="1.1" height="12.0" fill="#2e2727" /><rect x="833.2" y="264.8" width="1.1" height="12.0" fill="#2e2727" /><rect x="835.8" y="264.8" width="1.1" height="12.0" fill="#2e2727" /><rect x="838.4" y="264.8" width="1.1" height="12.0" fill="#2e2727" /><rect x="841.0" y="264.8" width="1.1" height="12.0" fill="#2e2727" /><rect x="843.6" y="264.8" width="1.1" height="12.0" fill="#2e2727" /><rect x="846.2" y="264.8" width="1.1" height="12.0" fill="#2e2727" /><rect x="848.8" y="264.8" width="1.1" height="12.0" fill="#2e2727" /><rect x="851.4" y="264.8" width="1.1" height="12.0" fill="#2e2727" /><rect x="854.0" y="264.8" width="1.1" height="12.0" fill="#2e2727" /><rect x="856.6" y="264.8" width="1.1" height="12.0" fill="#2e2727" /><rect x="859.2" y="264.8" width="1.1" height="12.0" fill="#2e2727" /><rect x="861.8" y="264.8" width="1.1" height="12.0" fill="#2e2727" /><rect x="864.4" y="264.8" width="1.1" height="12.0" fill="#2e2727" /><rect x="867.0" y="264.8" width="1.1" height="12.0" fill="#2e2727" /><rect x="869.6" y="264.8" width="1.1" height="12.0" fill="#2e2727" /><rect x="872.2" y="264.8" width="1.1" height="12.0" fill="#2e2727" /><rect x="874.8" y="264.8" width="1.1" height="12.0" fill="#2e2727" /><rect x="877.4" y="264.8" width="1.1" height="12.0" fill="#2e2727" /><rect x="880.0" y="264.8" width="1.1" height="12.0" fill="#2e2727" /><rect x="882.6" y="264.8" width="1.1" height="12.0" fill="#2e2727" /><rect x="824.0" y="276.8" width="60.0" height="6.0" fill="#8c8484" /><polygon points="740.4,315.0 824.0,315.0 824.0,318.6 740.4,318.6" fill="#2e2727" /><rect x="884.0" y="315.0" width="89.0" height="3.6" fill="#2e2727" /><path d="M972.5,316.8 L979,328.2" stroke="#2e2727" stroke-width="1.7"/><rect x="753.9" y="291.3" width="22.0" height="16.5" fill="#27282a" /><rect x="755.1" y="292.5" width="19.6" height="14.1" fill="#9aa3a5" /><rect x="755.1" y="299.5" width="19.6" height="7.4" fill="#a89a8e" /><rect x="755.1" y="294.3" width="19.6" height="1.1" fill="#27282a" /><rect x="764.3" y="291.3" width="1.2" height="16.5" fill="#27282a" /><rect x="800.7" y="290.8" width="10.5" height="16.0" fill="#27282a" /><rect x="801.9" y="292.0" width="8.1" height="13.6" fill="#9aa3a5" /><rect x="801.9" y="298.8" width="8.1" height="7.2" fill="#a89a8e" /><rect x="801.9" y="293.8" width="8.1" height="1.1" fill="#27282a" /><rect x="899.0" y="290.3" width="11.0" height="17.0" fill="#27282a" /><rect x="900.2" y="291.5" width="8.6" height="14.6" fill="#9aa3a5" /><rect x="900.2" y="298.8" width="8.6" height="7.7" fill="#a89a8e" /><rect x="900.2" y="293.3" width="8.6" height="1.1" fill="#27282a" /><rect x="935.0" y="290.3" width="24.0" height="17.0" fill="#27282a" /><rect x="936.2" y="291.5" width="21.6" height="14.6" fill="#9aa3a5" /><rect x="936.2" y="298.8" width="21.6" height="7.7" fill="#a89a8e" /><rect x="936.2" y="293.3" width="21.6" height="1.1" fill="#27282a" /><rect x="946.4" y="290.3" width="1.2" height="17.0" fill="#27282a" /><rect x="829.0" y="288.8" width="13.0" height="18.0" fill="#2e2727" /><rect x="830.5" y="290.3" width="10.0" height="16.5" fill="#a69b92" /><rect x="871.0" y="288.8" width="12.0" height="18.0" fill="#2e2727" /><rect x="872.5" y="290.3" width="9.0" height="16.5" fill="#a69b92" /><rect x="847.0" y="291.8" width="1.2" height="12.0" fill="#2e2727" /><rect x="847.0" y="291.8" width="7.0" height="1.2" fill="#2e2727" /><rect x="847.0" y="296.8" width="7.0" height="1.2" fill="#2e2727" /><rect x="862.0" y="291.8" width="1.2" height="12.0" fill="#2e2727" /><rect x="862.0" y="291.8" width="7.0" height="1.2" fill="#2e2727" /><rect x="862.0" y="296.8" width="7.0" height="1.2" fill="#2e2727" /><rect x="828.0" y="300.8" width="56.0" height="1.6" fill="#2e2727" /><rect x="828.0" y="311.2" width="56.0" height="1.6" fill="#2e2727" /><rect x="828.0" y="300.8" width="1.1" height="12.0" fill="#2e2727" /><rect x="830.6" y="300.8" width="1.1" height="12.0" fill="#2e2727" /><rect x="833.2" y="300.8" width="1.1" height="12.0" fill="#2e2727" /><rect x="835.8" y="300.8" width="1.1" height="12.0" fill="#2e2727" /><rect x="838.4" y="300.8" width="1.1" height="12.0" fill="#2e2727" /><rect x="841.0" y="300.8" width="1.1" height="12.0" fill="#2e2727" /><rect x="843.6" y="300.8" width="1.1" height="12.0" fill="#2e2727" /><rect x="846.2" y="300.8" width="1.1" height="12.0" fill="#2e2727" /><rect x="848.8" y="300.8" width="1.1" height="12.0" fill="#2e2727" /><rect x="851.4" y="300.8" width="1.1" height="12.0" fill="#2e2727" /><rect x="854.0" y="300.8" width="1.1" height="12.0" fill="#2e2727" /><rect x="856.6" y="300.8" width="1.1" height="12.0" fill="#2e2727" /><rect x="859.2" y="300.8" width="1.1" height="12.0" fill="#2e2727" /><rect x="861.8" y="300.8" width="1.1" height="12.0" fill="#2e2727" /><rect x="864.4" y="300.8" width="1.1" height="12.0" fill="#2e2727" /><rect x="867.0" y="300.8" width="1.1" height="12.0" fill="#2e2727" /><rect x="869.6" y="300.8" width="1.1" height="12.0" fill="#2e2727" /><rect x="872.2" y="300.8" width="1.1" height="12.0" fill="#2e2727" /><rect x="874.8" y="300.8" width="1.1" height="12.0" fill="#2e2727" /><rect x="877.4" y="300.8" width="1.1" height="12.0" fill="#2e2727" /><rect x="880.0" y="300.8" width="1.1" height="12.0" fill="#2e2727" /><rect x="882.6" y="300.8" width="1.1" height="12.0" fill="#2e2727" /><rect x="824.0" y="312.8" width="60.0" height="6.0" fill="#8c8484" /><polygon points="740.7,350.8 824.0,350.8 824.0,354.4 740.7,354.4" fill="#2e2727" /><rect x="884.0" y="350.8" width="89.0" height="3.6" fill="#2e2727" /><path d="M972.5,352.6 L979,362.0" stroke="#2e2727" stroke-width="1.7"/><rect x="754.2" y="327.1" width="22.0" height="16.5" fill="#27282a" /><rect x="755.4" y="328.3" width="19.6" height="14.1" fill="#9aa3a5" /><rect x="755.4" y="335.4" width="19.6" height="7.4" fill="#a89a8e" /><rect x="755.4" y="330.1" width="19.6" height="1.1" fill="#27282a" /><rect x="764.6" y="327.1" width="1.2" height="16.5" fill="#27282a" /><rect x="800.9" y="326.6" width="10.5" height="16.0" fill="#27282a" /><rect x="802.1" y="327.8" width="8.1" height="13.6" fill="#9aa3a5" /><rect x="802.1" y="334.6" width="8.1" height="7.2" fill="#a89a8e" /><rect x="802.1" y="329.6" width="8.1" height="1.1" fill="#27282a" /><rect x="899.0" y="326.1" width="11.0" height="17.0" fill="#27282a" /><rect x="900.2" y="327.3" width="8.6" height="14.6" fill="#9aa3a5" /><rect x="900.2" y="334.6" width="8.6" height="7.7" fill="#a89a8e" /><rect x="900.2" y="329.1" width="8.6" height="1.1" fill="#27282a" /><rect x="935.0" y="326.1" width="24.0" height="17.0" fill="#27282a" /><rect x="936.2" y="327.3" width="21.6" height="14.6" fill="#9aa3a5" /><rect x="936.2" y="334.6" width="21.6" height="7.7" fill="#a89a8e" /><rect x="936.2" y="329.1" width="21.6" height="1.1" fill="#27282a" /><rect x="946.4" y="326.1" width="1.2" height="17.0" fill="#27282a" /><rect x="829.0" y="324.6" width="13.0" height="18.0" fill="#2e2727" /><rect x="830.5" y="326.1" width="10.0" height="16.5" fill="#a69b92" /><rect x="871.0" y="324.6" width="12.0" height="18.0" fill="#2e2727" /><rect x="872.5" y="326.1" width="9.0" height="16.5" fill="#a69b92" /><rect x="847.0" y="327.6" width="1.2" height="12.0" fill="#2e2727" /><rect x="847.0" y="327.6" width="7.0" height="1.2" fill="#2e2727" /><rect x="847.0" y="332.6" width="7.0" height="1.2" fill="#2e2727" /><rect x="862.0" y="327.6" width="1.2" height="12.0" fill="#2e2727" /><rect x="862.0" y="327.6" width="7.0" height="1.2" fill="#2e2727" /><rect x="862.0" y="332.6" width="7.0" height="1.2" fill="#2e2727" /><rect x="828.0" y="336.6" width="56.0" height="1.6" fill="#2e2727" /><rect x="828.0" y="347.0" width="56.0" height="1.6" fill="#2e2727" /><rect x="828.0" y="336.6" width="1.1" height="12.0" fill="#2e2727" /><rect x="830.6" y="336.6" width="1.1" height="12.0" fill="#2e2727" /><rect x="833.2" y="336.6" width="1.1" height="12.0" fill="#2e2727" /><rect x="835.8" y="336.6" width="1.1" height="12.0" fill="#2e2727" /><rect x="838.4" y="336.6" width="1.1" height="12.0" fill="#2e2727" /><rect x="841.0" y="336.6" width="1.1" height="12.0" fill="#2e2727" /><rect x="843.6" y="336.6" width="1.1" height="12.0" fill="#2e2727" /><rect x="846.2" y="336.6" width="1.1" height="12.0" fill="#2e2727" /><rect x="848.8" y="336.6" width="1.1" height="12.0" fill="#2e2727" /><rect x="851.4" y="336.6" width="1.1" height="12.0" fill="#2e2727" /><rect x="854.0" y="336.6" width="1.1" height="12.0" fill="#2e2727" /><rect x="856.6" y="336.6" width="1.1" height="12.0" fill="#2e2727" /><rect x="859.2" y="336.6" width="1.1" height="12.0" fill="#2e2727" /><rect x="861.8" y="336.6" width="1.1" height="12.0" fill="#2e2727" /><rect x="864.4" y="336.6" width="1.1" height="12.0" fill="#2e2727" /><rect x="867.0" y="336.6" width="1.1" height="12.0" fill="#2e2727" /><rect x="869.6" y="336.6" width="1.1" height="12.0" fill="#2e2727" /><rect x="872.2" y="336.6" width="1.1" height="12.0" fill="#2e2727" /><rect x="874.8" y="336.6" width="1.1" height="12.0" fill="#2e2727" /><rect x="877.4" y="336.6" width="1.1" height="12.0" fill="#2e2727" /><rect x="880.0" y="336.6" width="1.1" height="12.0" fill="#2e2727" /><rect x="882.6" y="336.6" width="1.1" height="12.0" fill="#2e2727" /><rect x="824.0" y="348.6" width="60.0" height="6.0" fill="#8c8484" /><polygon points="741.1,386.6 824.0,386.6 824.0,390.2 741.1,390.2" fill="#2e2727" /><rect x="884.0" y="386.6" width="89.0" height="3.6" fill="#2e2727" /><path d="M972.5,388.4 L979,395.7" stroke="#2e2727" stroke-width="1.7"/><rect x="754.6" y="362.9" width="22.0" height="16.5" fill="#27282a" /><rect x="755.8" y="364.1" width="19.6" height="14.1" fill="#9aa3a5" /><rect x="755.8" y="371.1" width="19.6" height="7.4" fill="#a89a8e" /><rect x="755.8" y="365.9" width="19.6" height="1.1" fill="#27282a" /><rect x="765.0" y="362.9" width="1.2" height="16.5" fill="#27282a" /><rect x="801.2" y="362.4" width="10.5" height="16.0" fill="#27282a" /><rect x="802.4" y="363.6" width="8.1" height="13.6" fill="#9aa3a5" /><rect x="802.4" y="370.4" width="8.1" height="7.2" fill="#a89a8e" /><rect x="802.4" y="365.4" width="8.1" height="1.1" fill="#27282a" /><rect x="899.0" y="361.9" width="11.0" height="17.0" fill="#27282a" /><rect x="900.2" y="363.1" width="8.6" height="14.6" fill="#9aa3a5" /><rect x="900.2" y="370.4" width="8.6" height="7.7" fill="#a89a8e" /><rect x="900.2" y="364.9" width="8.6" height="1.1" fill="#27282a" /><rect x="935.0" y="361.9" width="24.0" height="17.0" fill="#27282a" /><rect x="936.2" y="363.1" width="21.6" height="14.6" fill="#9aa3a5" /><rect x="936.2" y="370.4" width="21.6" height="7.7" fill="#a89a8e" /><rect x="936.2" y="364.9" width="21.6" height="1.1" fill="#27282a" /><rect x="946.4" y="361.9" width="1.2" height="17.0" fill="#27282a" /><rect x="829.0" y="360.4" width="13.0" height="18.0" fill="#2e2727" /><rect x="830.5" y="361.9" width="10.0" height="16.5" fill="#a69b92" /><rect x="871.0" y="360.4" width="12.0" height="18.0" fill="#2e2727" /><rect x="872.5" y="361.9" width="9.0" height="16.5" fill="#a69b92" /><rect x="847.0" y="363.4" width="1.2" height="12.0" fill="#2e2727" /><rect x="847.0" y="363.4" width="7.0" height="1.2" fill="#2e2727" /><rect x="847.0" y="368.4" width="7.0" height="1.2" fill="#2e2727" /><rect x="862.0" y="363.4" width="1.2" height="12.0" fill="#2e2727" /><rect x="862.0" y="363.4" width="7.0" height="1.2" fill="#2e2727" /><rect x="862.0" y="368.4" width="7.0" height="1.2" fill="#2e2727" /><rect x="828.0" y="372.4" width="56.0" height="1.6" fill="#2e2727" /><rect x="828.0" y="382.8" width="56.0" height="1.6" fill="#2e2727" /><rect x="828.0" y="372.4" width="1.1" height="12.0" fill="#2e2727" /><rect x="830.6" y="372.4" width="1.1" height="12.0" fill="#2e2727" /><rect x="833.2" y="372.4" width="1.1" height="12.0" fill="#2e2727" /><rect x="835.8" y="372.4" width="1.1" height="12.0" fill="#2e2727" /><rect x="838.4" y="372.4" width="1.1" height="12.0" fill="#2e2727" /><rect x="841.0" y="372.4" width="1.1" height="12.0" fill="#2e2727" /><rect x="843.6" y="372.4" width="1.1" height="12.0" fill="#2e2727" /><rect x="846.2" y="372.4" width="1.1" height="12.0" fill="#2e2727" /><rect x="848.8" y="372.4" width="1.1" height="12.0" fill="#2e2727" /><rect x="851.4" y="372.4" width="1.1" height="12.0" fill="#2e2727" /><rect x="854.0" y="372.4" width="1.1" height="12.0" fill="#2e2727" /><rect x="856.6" y="372.4" width="1.1" height="12.0" fill="#2e2727" /><rect x="859.2" y="372.4" width="1.1" height="12.0" fill="#2e2727" /><rect x="861.8" y="372.4" width="1.1" height="12.0" fill="#2e2727" /><rect x="864.4" y="372.4" width="1.1" height="12.0" fill="#2e2727" /><rect x="867.0" y="372.4" width="1.1" height="12.0" fill="#2e2727" /><rect x="869.6" y="372.4" width="1.1" height="12.0" fill="#2e2727" /><rect x="872.2" y="372.4" width="1.1" height="12.0" fill="#2e2727" /><rect x="874.8" y="372.4" width="1.1" height="12.0" fill="#2e2727" /><rect x="877.4" y="372.4" width="1.1" height="12.0" fill="#2e2727" /><rect x="880.0" y="372.4" width="1.1" height="12.0" fill="#2e2727" /><rect x="882.6" y="372.4" width="1.1" height="12.0" fill="#2e2727" /><rect x="824.0" y="384.4" width="60.0" height="6.0" fill="#8c8484" /><polygon points="741.5,422.1 824.0,422.1 824.0,425.7 741.5,425.7" fill="#2e2727" /><rect x="884.0" y="422.1" width="89.0" height="3.6" fill="#2e2727" /><path d="M972.5,423.9 L979,429.2" stroke="#2e2727" stroke-width="1.7"/><rect x="755.0" y="398.4" width="22.0" height="16.5" fill="#27282a" /><rect x="756.2" y="399.6" width="19.6" height="14.1" fill="#9aa3a5" /><rect x="756.2" y="406.7" width="19.6" height="7.4" fill="#a89a8e" /><rect x="756.2" y="401.4" width="19.6" height="1.1" fill="#27282a" /><rect x="765.4" y="398.4" width="1.2" height="16.5" fill="#27282a" /><rect x="801.4" y="397.9" width="10.5" height="16.0" fill="#27282a" /><rect x="802.6" y="399.1" width="8.1" height="13.6" fill="#9aa3a5" /><rect x="802.6" y="405.9" width="8.1" height="7.2" fill="#a89a8e" /><rect x="802.6" y="400.9" width="8.1" height="1.1" fill="#27282a" /><rect x="899.0" y="397.4" width="11.0" height="17.0" fill="#27282a" /><rect x="900.2" y="398.6" width="8.6" height="14.6" fill="#9aa3a5" /><rect x="900.2" y="405.9" width="8.6" height="7.7" fill="#a89a8e" /><rect x="900.2" y="400.4" width="8.6" height="1.1" fill="#27282a" /><rect x="935.0" y="397.4" width="24.0" height="17.0" fill="#27282a" /><rect x="936.2" y="398.6" width="21.6" height="14.6" fill="#9aa3a5" /><rect x="936.2" y="405.9" width="21.6" height="7.7" fill="#a89a8e" /><rect x="936.2" y="400.4" width="21.6" height="1.1" fill="#27282a" /><rect x="946.4" y="397.4" width="1.2" height="17.0" fill="#27282a" /><rect x="829.0" y="395.9" width="13.0" height="18.0" fill="#2e2727" /><rect x="830.5" y="397.4" width="10.0" height="16.5" fill="#a69b92" /><rect x="871.0" y="395.9" width="12.0" height="18.0" fill="#2e2727" /><rect x="872.5" y="397.4" width="9.0" height="16.5" fill="#a69b92" /><rect x="847.0" y="398.9" width="1.2" height="12.0" fill="#2e2727" /><rect x="847.0" y="398.9" width="7.0" height="1.2" fill="#2e2727" /><rect x="847.0" y="403.9" width="7.0" height="1.2" fill="#2e2727" /><rect x="862.0" y="398.9" width="1.2" height="12.0" fill="#2e2727" /><rect x="862.0" y="398.9" width="7.0" height="1.2" fill="#2e2727" /><rect x="862.0" y="403.9" width="7.0" height="1.2" fill="#2e2727" /><rect x="828.0" y="407.9" width="56.0" height="1.6" fill="#2e2727" /><rect x="828.0" y="418.3" width="56.0" height="1.6" fill="#2e2727" /><rect x="828.0" y="407.9" width="1.1" height="12.0" fill="#2e2727" /><rect x="830.6" y="407.9" width="1.1" height="12.0" fill="#2e2727" /><rect x="833.2" y="407.9" width="1.1" height="12.0" fill="#2e2727" /><rect x="835.8" y="407.9" width="1.1" height="12.0" fill="#2e2727" /><rect x="838.4" y="407.9" width="1.1" height="12.0" fill="#2e2727" /><rect x="841.0" y="407.9" width="1.1" height="12.0" fill="#2e2727" /><rect x="843.6" y="407.9" width="1.1" height="12.0" fill="#2e2727" /><rect x="846.2" y="407.9" width="1.1" height="12.0" fill="#2e2727" /><rect x="848.8" y="407.9" width="1.1" height="12.0" fill="#2e2727" /><rect x="851.4" y="407.9" width="1.1" height="12.0" fill="#2e2727" /><rect x="854.0" y="407.9" width="1.1" height="12.0" fill="#2e2727" /><rect x="856.6" y="407.9" width="1.1" height="12.0" fill="#2e2727" /><rect x="859.2" y="407.9" width="1.1" height="12.0" fill="#2e2727" /><rect x="861.8" y="407.9" width="1.1" height="12.0" fill="#2e2727" /><rect x="864.4" y="407.9" width="1.1" height="12.0" fill="#2e2727" /><rect x="867.0" y="407.9" width="1.1" height="12.0" fill="#2e2727" /><rect x="869.6" y="407.9" width="1.1" height="12.0" fill="#2e2727" /><rect x="872.2" y="407.9" width="1.1" height="12.0" fill="#2e2727" /><rect x="874.8" y="407.9" width="1.1" height="12.0" fill="#2e2727" /><rect x="877.4" y="407.9" width="1.1" height="12.0" fill="#2e2727" /><rect x="880.0" y="407.9" width="1.1" height="12.0" fill="#2e2727" /><rect x="882.6" y="407.9" width="1.1" height="12.0" fill="#2e2727" /><rect x="824.0" y="419.9" width="60.0" height="6.0" fill="#8c8484" /><polygon points="741.8,457.6 824.0,457.6 824.0,461.2 741.8,461.2" fill="#2e2727" /><rect x="884.0" y="457.6" width="89.0" height="3.6" fill="#2e2727" /><path d="M972.5,459.4 L979,462.6" stroke="#2e2727" stroke-width="1.7"/><rect x="755.3" y="433.9" width="22.0" height="16.5" fill="#27282a" /><rect x="756.5" y="435.1" width="19.6" height="14.1" fill="#9aa3a5" /><rect x="756.5" y="442.1" width="19.6" height="7.4" fill="#a89a8e" /><rect x="756.5" y="436.9" width="19.6" height="1.1" fill="#27282a" /><rect x="765.7" y="433.9" width="1.2" height="16.5" fill="#27282a" /><rect x="801.6" y="433.4" width="10.5" height="16.0" fill="#27282a" /><rect x="802.8" y="434.6" width="8.1" height="13.6" fill="#9aa3a5" /><rect x="802.8" y="441.4" width="8.1" height="7.2" fill="#a89a8e" /><rect x="802.8" y="436.4" width="8.1" height="1.1" fill="#27282a" /><rect x="899.0" y="432.9" width="11.0" height="17.0" fill="#27282a" /><rect x="900.2" y="434.1" width="8.6" height="14.6" fill="#9aa3a5" /><rect x="900.2" y="441.4" width="8.6" height="7.7" fill="#a89a8e" /><rect x="900.2" y="435.9" width="8.6" height="1.1" fill="#27282a" /><rect x="935.0" y="432.9" width="24.0" height="17.0" fill="#27282a" /><rect x="936.2" y="434.1" width="21.6" height="14.6" fill="#9aa3a5" /><rect x="936.2" y="441.4" width="21.6" height="7.7" fill="#a89a8e" /><rect x="936.2" y="435.9" width="21.6" height="1.1" fill="#27282a" /><rect x="946.4" y="432.9" width="1.2" height="17.0" fill="#27282a" /><rect x="829.0" y="431.4" width="13.0" height="18.0" fill="#2e2727" /><rect x="830.5" y="432.9" width="10.0" height="16.5" fill="#a69b92" /><rect x="871.0" y="431.4" width="12.0" height="18.0" fill="#2e2727" /><rect x="872.5" y="432.9" width="9.0" height="16.5" fill="#a69b92" /><rect x="847.0" y="434.4" width="1.2" height="12.0" fill="#2e2727" /><rect x="847.0" y="434.4" width="7.0" height="1.2" fill="#2e2727" /><rect x="847.0" y="439.4" width="7.0" height="1.2" fill="#2e2727" /><rect x="862.0" y="434.4" width="1.2" height="12.0" fill="#2e2727" /><rect x="862.0" y="434.4" width="7.0" height="1.2" fill="#2e2727" /><rect x="862.0" y="439.4" width="7.0" height="1.2" fill="#2e2727" /><rect x="828.0" y="443.4" width="56.0" height="1.6" fill="#2e2727" /><rect x="828.0" y="453.8" width="56.0" height="1.6" fill="#2e2727" /><rect x="828.0" y="443.4" width="1.1" height="12.0" fill="#2e2727" /><rect x="830.6" y="443.4" width="1.1" height="12.0" fill="#2e2727" /><rect x="833.2" y="443.4" width="1.1" height="12.0" fill="#2e2727" /><rect x="835.8" y="443.4" width="1.1" height="12.0" fill="#2e2727" /><rect x="838.4" y="443.4" width="1.1" height="12.0" fill="#2e2727" /><rect x="841.0" y="443.4" width="1.1" height="12.0" fill="#2e2727" /><rect x="843.6" y="443.4" width="1.1" height="12.0" fill="#2e2727" /><rect x="846.2" y="443.4" width="1.1" height="12.0" fill="#2e2727" /><rect x="848.8" y="443.4" width="1.1" height="12.0" fill="#2e2727" /><rect x="851.4" y="443.4" width="1.1" height="12.0" fill="#2e2727" /><rect x="854.0" y="443.4" width="1.1" height="12.0" fill="#2e2727" /><rect x="856.6" y="443.4" width="1.1" height="12.0" fill="#2e2727" /><rect x="859.2" y="443.4" width="1.1" height="12.0" fill="#2e2727" /><rect x="861.8" y="443.4" width="1.1" height="12.0" fill="#2e2727" /><rect x="864.4" y="443.4" width="1.1" height="12.0" fill="#2e2727" /><rect x="867.0" y="443.4" width="1.1" height="12.0" fill="#2e2727" /><rect x="869.6" y="443.4" width="1.1" height="12.0" fill="#2e2727" /><rect x="872.2" y="443.4" width="1.1" height="12.0" fill="#2e2727" /><rect x="874.8" y="443.4" width="1.1" height="12.0" fill="#2e2727" /><rect x="877.4" y="443.4" width="1.1" height="12.0" fill="#2e2727" /><rect x="880.0" y="443.4" width="1.1" height="12.0" fill="#2e2727" /><rect x="882.6" y="443.4" width="1.1" height="12.0" fill="#2e2727" /><rect x="824.0" y="455.4" width="60.0" height="6.0" fill="#8c8484" /><polygon points="742.2,492.9 824.0,492.9 824.0,496.5 742.2,496.5" fill="#2e2727" /><rect x="884.0" y="492.9" width="89.0" height="3.6" fill="#2e2727" /><path d="M972.5,494.7 L979,495.9" stroke="#2e2727" stroke-width="1.7"/><rect x="755.7" y="469.2" width="22.0" height="16.5" fill="#27282a" /><rect x="756.9" y="470.4" width="19.6" height="14.1" fill="#9aa3a5" /><rect x="756.9" y="477.4" width="19.6" height="7.4" fill="#a89a8e" /><rect x="756.9" y="472.2" width="19.6" height="1.1" fill="#27282a" /><rect x="766.1" y="469.2" width="1.2" height="16.5" fill="#27282a" /><rect x="801.8" y="468.7" width="10.5" height="16.0" fill="#27282a" /><rect x="803.0" y="469.9" width="8.1" height="13.6" fill="#9aa3a5" /><rect x="803.0" y="476.7" width="8.1" height="7.2" fill="#a89a8e" /><rect x="803.0" y="471.7" width="8.1" height="1.1" fill="#27282a" /><rect x="899.0" y="468.2" width="11.0" height="17.0" fill="#27282a" /><rect x="900.2" y="469.4" width="8.6" height="14.6" fill="#9aa3a5" /><rect x="900.2" y="476.7" width="8.6" height="7.7" fill="#a89a8e" /><rect x="900.2" y="471.2" width="8.6" height="1.1" fill="#27282a" /><rect x="935.0" y="468.2" width="24.0" height="17.0" fill="#27282a" /><rect x="936.2" y="469.4" width="21.6" height="14.6" fill="#9aa3a5" /><rect x="936.2" y="476.7" width="21.6" height="7.7" fill="#a89a8e" /><rect x="936.2" y="471.2" width="21.6" height="1.1" fill="#27282a" /><rect x="946.4" y="468.2" width="1.2" height="17.0" fill="#27282a" /><rect x="829.0" y="466.7" width="13.0" height="18.0" fill="#2e2727" /><rect x="830.5" y="468.2" width="10.0" height="16.5" fill="#a69b92" /><rect x="871.0" y="466.7" width="12.0" height="18.0" fill="#2e2727" /><rect x="872.5" y="468.2" width="9.0" height="16.5" fill="#a69b92" /><rect x="847.0" y="469.7" width="1.2" height="12.0" fill="#2e2727" /><rect x="847.0" y="469.7" width="7.0" height="1.2" fill="#2e2727" /><rect x="847.0" y="474.7" width="7.0" height="1.2" fill="#2e2727" /><rect x="862.0" y="469.7" width="1.2" height="12.0" fill="#2e2727" /><rect x="862.0" y="469.7" width="7.0" height="1.2" fill="#2e2727" /><rect x="862.0" y="474.7" width="7.0" height="1.2" fill="#2e2727" /><rect x="828.0" y="478.7" width="56.0" height="1.6" fill="#2e2727" /><rect x="828.0" y="489.1" width="56.0" height="1.6" fill="#2e2727" /><rect x="828.0" y="478.7" width="1.1" height="12.0" fill="#2e2727" /><rect x="830.6" y="478.7" width="1.1" height="12.0" fill="#2e2727" /><rect x="833.2" y="478.7" width="1.1" height="12.0" fill="#2e2727" /><rect x="835.8" y="478.7" width="1.1" height="12.0" fill="#2e2727" /><rect x="838.4" y="478.7" width="1.1" height="12.0" fill="#2e2727" /><rect x="841.0" y="478.7" width="1.1" height="12.0" fill="#2e2727" /><rect x="843.6" y="478.7" width="1.1" height="12.0" fill="#2e2727" /><rect x="846.2" y="478.7" width="1.1" height="12.0" fill="#2e2727" /><rect x="848.8" y="478.7" width="1.1" height="12.0" fill="#2e2727" /><rect x="851.4" y="478.7" width="1.1" height="12.0" fill="#2e2727" /><rect x="854.0" y="478.7" width="1.1" height="12.0" fill="#2e2727" /><rect x="856.6" y="478.7" width="1.1" height="12.0" fill="#2e2727" /><rect x="859.2" y="478.7" width="1.1" height="12.0" fill="#2e2727" /><rect x="861.8" y="478.7" width="1.1" height="12.0" fill="#2e2727" /><rect x="864.4" y="478.7" width="1.1" height="12.0" fill="#2e2727" /><rect x="867.0" y="478.7" width="1.1" height="12.0" fill="#2e2727" /><rect x="869.6" y="478.7" width="1.1" height="12.0" fill="#2e2727" /><rect x="872.2" y="478.7" width="1.1" height="12.0" fill="#2e2727" /><rect x="874.8" y="478.7" width="1.1" height="12.0" fill="#2e2727" /><rect x="877.4" y="478.7" width="1.1" height="12.0" fill="#2e2727" /><rect x="880.0" y="478.7" width="1.1" height="12.0" fill="#2e2727" /><rect x="882.6" y="478.7" width="1.1" height="12.0" fill="#2e2727" /><rect x="824.0" y="490.7" width="60.0" height="6.0" fill="#8c8484" /><polygon points="742.5,528.0 824.0,528.0 824.0,531.6 742.5,531.6" fill="#2e2727" /><rect x="884.0" y="528.0" width="89.0" height="3.6" fill="#2e2727" /><path d="M972.5,529.8 L979,529.0" stroke="#2e2727" stroke-width="1.7"/><rect x="756.0" y="504.3" width="22.0" height="16.5" fill="#27282a" /><rect x="757.2" y="505.5" width="19.6" height="14.1" fill="#9aa3a5" /><rect x="757.2" y="512.6" width="19.6" height="7.4" fill="#a89a8e" /><rect x="757.2" y="507.3" width="19.6" height="1.1" fill="#27282a" /><rect x="766.4" y="504.3" width="1.2" height="16.5" fill="#27282a" /><rect x="802.0" y="503.8" width="10.5" height="16.0" fill="#27282a" /><rect x="803.2" y="505.0" width="8.1" height="13.6" fill="#9aa3a5" /><rect x="803.2" y="511.8" width="8.1" height="7.2" fill="#a89a8e" /><rect x="803.2" y="506.8" width="8.1" height="1.1" fill="#27282a" /><rect x="899.0" y="503.3" width="11.0" height="17.0" fill="#27282a" /><rect x="900.2" y="504.5" width="8.6" height="14.6" fill="#9aa3a5" /><rect x="900.2" y="511.8" width="8.6" height="7.7" fill="#a89a8e" /><rect x="900.2" y="506.3" width="8.6" height="1.1" fill="#27282a" /><rect x="935.0" y="503.3" width="24.0" height="17.0" fill="#27282a" /><rect x="936.2" y="504.5" width="21.6" height="14.6" fill="#9aa3a5" /><rect x="936.2" y="511.8" width="21.6" height="7.7" fill="#a89a8e" /><rect x="936.2" y="506.3" width="21.6" height="1.1" fill="#27282a" /><rect x="946.4" y="503.3" width="1.2" height="17.0" fill="#27282a" /><rect x="829.0" y="501.8" width="13.0" height="18.0" fill="#2e2727" /><rect x="830.5" y="503.3" width="10.0" height="16.5" fill="#a69b92" /><rect x="871.0" y="501.8" width="12.0" height="18.0" fill="#2e2727" /><rect x="872.5" y="503.3" width="9.0" height="16.5" fill="#a69b92" /><rect x="847.0" y="504.8" width="1.2" height="12.0" fill="#2e2727" /><rect x="847.0" y="504.8" width="7.0" height="1.2" fill="#2e2727" /><rect x="847.0" y="509.8" width="7.0" height="1.2" fill="#2e2727" /><rect x="862.0" y="504.8" width="1.2" height="12.0" fill="#2e2727" /><rect x="862.0" y="504.8" width="7.0" height="1.2" fill="#2e2727" /><rect x="862.0" y="509.8" width="7.0" height="1.2" fill="#2e2727" /><rect x="828.0" y="513.8" width="56.0" height="1.6" fill="#2e2727" /><rect x="828.0" y="524.2" width="56.0" height="1.6" fill="#2e2727" /><rect x="828.0" y="513.8" width="1.1" height="12.0" fill="#2e2727" /><rect x="830.6" y="513.8" width="1.1" height="12.0" fill="#2e2727" /><rect x="833.2" y="513.8" width="1.1" height="12.0" fill="#2e2727" /><rect x="835.8" y="513.8" width="1.1" height="12.0" fill="#2e2727" /><rect x="838.4" y="513.8" width="1.1" height="12.0" fill="#2e2727" /><rect x="841.0" y="513.8" width="1.1" height="12.0" fill="#2e2727" /><rect x="843.6" y="513.8" width="1.1" height="12.0" fill="#2e2727" /><rect x="846.2" y="513.8" width="1.1" height="12.0" fill="#2e2727" /><rect x="848.8" y="513.8" width="1.1" height="12.0" fill="#2e2727" /><rect x="851.4" y="513.8" width="1.1" height="12.0" fill="#2e2727" /><rect x="854.0" y="513.8" width="1.1" height="12.0" fill="#2e2727" /><rect x="856.6" y="513.8" width="1.1" height="12.0" fill="#2e2727" /><rect x="859.2" y="513.8" width="1.1" height="12.0" fill="#2e2727" /><rect x="861.8" y="513.8" width="1.1" height="12.0" fill="#2e2727" /><rect x="864.4" y="513.8" width="1.1" height="12.0" fill="#2e2727" /><rect x="867.0" y="513.8" width="1.1" height="12.0" fill="#2e2727" /><rect x="869.6" y="513.8" width="1.1" height="12.0" fill="#2e2727" /><rect x="872.2" y="513.8" width="1.1" height="12.0" fill="#2e2727" /><rect x="874.8" y="513.8" width="1.1" height="12.0" fill="#2e2727" /><rect x="877.4" y="513.8" width="1.1" height="12.0" fill="#2e2727" /><rect x="880.0" y="513.8" width="1.1" height="12.0" fill="#2e2727" /><rect x="882.6" y="513.8" width="1.1" height="12.0" fill="#2e2727" /><rect x="824.0" y="525.8" width="60.0" height="6.0" fill="#8c8484" /><polygon points="742.9,563.1 824.0,563.1 824.0,566.7 742.9,566.7" fill="#2e2727" /><rect x="884.0" y="563.1" width="89.0" height="3.6" fill="#2e2727" /><path d="M972.5,564.9 L979,562.1" stroke="#2e2727" stroke-width="1.7"/><rect x="756.4" y="539.4" width="22.0" height="16.5" fill="#27282a" /><rect x="757.6" y="540.6" width="19.6" height="14.1" fill="#9aa3a5" /><rect x="757.6" y="547.6" width="19.6" height="7.4" fill="#a89a8e" /><rect x="757.6" y="542.4" width="19.6" height="1.1" fill="#27282a" /><rect x="766.8" y="539.4" width="1.2" height="16.5" fill="#27282a" /><rect x="802.2" y="538.9" width="10.5" height="16.0" fill="#27282a" /><rect x="803.4" y="540.1" width="8.1" height="13.6" fill="#9aa3a5" /><rect x="803.4" y="546.9" width="8.1" height="7.2" fill="#a89a8e" /><rect x="803.4" y="541.9" width="8.1" height="1.1" fill="#27282a" /><rect x="899.0" y="538.4" width="11.0" height="17.0" fill="#27282a" /><rect x="900.2" y="539.6" width="8.6" height="14.6" fill="#9aa3a5" /><rect x="900.2" y="546.9" width="8.6" height="7.7" fill="#a89a8e" /><rect x="900.2" y="541.4" width="8.6" height="1.1" fill="#27282a" /><rect x="935.0" y="538.4" width="24.0" height="17.0" fill="#27282a" /><rect x="936.2" y="539.6" width="21.6" height="14.6" fill="#9aa3a5" /><rect x="936.2" y="546.9" width="21.6" height="7.7" fill="#a89a8e" /><rect x="936.2" y="541.4" width="21.6" height="1.1" fill="#27282a" /><rect x="946.4" y="538.4" width="1.2" height="17.0" fill="#27282a" /><rect x="829.0" y="536.9" width="13.0" height="18.0" fill="#2e2727" /><rect x="830.5" y="538.4" width="10.0" height="16.5" fill="#a69b92" /><rect x="871.0" y="536.9" width="12.0" height="18.0" fill="#2e2727" /><rect x="872.5" y="538.4" width="9.0" height="16.5" fill="#a69b92" /><rect x="847.0" y="539.9" width="1.2" height="12.0" fill="#2e2727" /><rect x="847.0" y="539.9" width="7.0" height="1.2" fill="#2e2727" /><rect x="847.0" y="544.9" width="7.0" height="1.2" fill="#2e2727" /><rect x="862.0" y="539.9" width="1.2" height="12.0" fill="#2e2727" /><rect x="862.0" y="539.9" width="7.0" height="1.2" fill="#2e2727" /><rect x="862.0" y="544.9" width="7.0" height="1.2" fill="#2e2727" /><rect x="828.0" y="548.9" width="56.0" height="1.6" fill="#2e2727" /><rect x="828.0" y="559.3" width="56.0" height="1.6" fill="#2e2727" /><rect x="828.0" y="548.9" width="1.1" height="12.0" fill="#2e2727" /><rect x="830.6" y="548.9" width="1.1" height="12.0" fill="#2e2727" /><rect x="833.2" y="548.9" width="1.1" height="12.0" fill="#2e2727" /><rect x="835.8" y="548.9" width="1.1" height="12.0" fill="#2e2727" /><rect x="838.4" y="548.9" width="1.1" height="12.0" fill="#2e2727" /><rect x="841.0" y="548.9" width="1.1" height="12.0" fill="#2e2727" /><rect x="843.6" y="548.9" width="1.1" height="12.0" fill="#2e2727" /><rect x="846.2" y="548.9" width="1.1" height="12.0" fill="#2e2727" /><rect x="848.8" y="548.9" width="1.1" height="12.0" fill="#2e2727" /><rect x="851.4" y="548.9" width="1.1" height="12.0" fill="#2e2727" /><rect x="854.0" y="548.9" width="1.1" height="12.0" fill="#2e2727" /><rect x="856.6" y="548.9" width="1.1" height="12.0" fill="#2e2727" /><rect x="859.2" y="548.9" width="1.1" height="12.0" fill="#2e2727" /><rect x="861.8" y="548.9" width="1.1" height="12.0" fill="#2e2727" /><rect x="864.4" y="548.9" width="1.1" height="12.0" fill="#2e2727" /><rect x="867.0" y="548.9" width="1.1" height="12.0" fill="#2e2727" /><rect x="869.6" y="548.9" width="1.1" height="12.0" fill="#2e2727" /><rect x="872.2" y="548.9" width="1.1" height="12.0" fill="#2e2727" /><rect x="874.8" y="548.9" width="1.1" height="12.0" fill="#2e2727" /><rect x="877.4" y="548.9" width="1.1" height="12.0" fill="#2e2727" /><rect x="880.0" y="548.9" width="1.1" height="12.0" fill="#2e2727" /><rect x="882.6" y="548.9" width="1.1" height="12.0" fill="#2e2727" /><rect x="824.0" y="560.9" width="60.0" height="6.0" fill="#8c8484" /><polygon points="743.3,598.0 824.0,598.0 824.0,601.6 743.3,601.6" fill="#2e2727" /><rect x="884.0" y="598.0" width="89.0" height="3.6" fill="#2e2727" /><path d="M972.5,599.8 L979,595.0" stroke="#2e2727" stroke-width="1.7"/><rect x="756.8" y="574.3" width="22.0" height="16.5" fill="#27282a" /><rect x="758.0" y="575.5" width="19.6" height="14.1" fill="#9aa3a5" /><rect x="758.0" y="582.5" width="19.6" height="7.4" fill="#a89a8e" /><rect x="758.0" y="577.3" width="19.6" height="1.1" fill="#27282a" /><rect x="767.2" y="574.3" width="1.2" height="16.5" fill="#27282a" /><rect x="802.5" y="573.8" width="10.5" height="16.0" fill="#27282a" /><rect x="803.7" y="575.0" width="8.1" height="13.6" fill="#9aa3a5" /><rect x="803.7" y="581.8" width="8.1" height="7.2" fill="#a89a8e" /><rect x="803.7" y="576.8" width="8.1" height="1.1" fill="#27282a" /><rect x="899.0" y="573.3" width="11.0" height="17.0" fill="#27282a" /><rect x="900.2" y="574.5" width="8.6" height="14.6" fill="#9aa3a5" /><rect x="900.2" y="581.8" width="8.6" height="7.7" fill="#a89a8e" /><rect x="900.2" y="576.3" width="8.6" height="1.1" fill="#27282a" /><rect x="935.0" y="573.3" width="24.0" height="17.0" fill="#27282a" /><rect x="936.2" y="574.5" width="21.6" height="14.6" fill="#9aa3a5" /><rect x="936.2" y="581.8" width="21.6" height="7.7" fill="#a89a8e" /><rect x="936.2" y="576.3" width="21.6" height="1.1" fill="#27282a" /><rect x="946.4" y="573.3" width="1.2" height="17.0" fill="#27282a" /><rect x="829.0" y="571.8" width="13.0" height="18.0" fill="#2e2727" /><rect x="830.5" y="573.3" width="10.0" height="16.5" fill="#a69b92" /><rect x="871.0" y="571.8" width="12.0" height="18.0" fill="#2e2727" /><rect x="872.5" y="573.3" width="9.0" height="16.5" fill="#a69b92" /><rect x="847.0" y="574.8" width="1.2" height="12.0" fill="#2e2727" /><rect x="847.0" y="574.8" width="7.0" height="1.2" fill="#2e2727" /><rect x="847.0" y="579.8" width="7.0" height="1.2" fill="#2e2727" /><rect x="862.0" y="574.8" width="1.2" height="12.0" fill="#2e2727" /><rect x="862.0" y="574.8" width="7.0" height="1.2" fill="#2e2727" /><rect x="862.0" y="579.8" width="7.0" height="1.2" fill="#2e2727" /><rect x="828.0" y="583.8" width="56.0" height="1.6" fill="#2e2727" /><rect x="828.0" y="594.2" width="56.0" height="1.6" fill="#2e2727" /><rect x="828.0" y="583.8" width="1.1" height="12.0" fill="#2e2727" /><rect x="830.6" y="583.8" width="1.1" height="12.0" fill="#2e2727" /><rect x="833.2" y="583.8" width="1.1" height="12.0" fill="#2e2727" /><rect x="835.8" y="583.8" width="1.1" height="12.0" fill="#2e2727" /><rect x="838.4" y="583.8" width="1.1" height="12.0" fill="#2e2727" /><rect x="841.0" y="583.8" width="1.1" height="12.0" fill="#2e2727" /><rect x="843.6" y="583.8" width="1.1" height="12.0" fill="#2e2727" /><rect x="846.2" y="583.8" width="1.1" height="12.0" fill="#2e2727" /><rect x="848.8" y="583.8" width="1.1" height="12.0" fill="#2e2727" /><rect x="851.4" y="583.8" width="1.1" height="12.0" fill="#2e2727" /><rect x="854.0" y="583.8" width="1.1" height="12.0" fill="#2e2727" /><rect x="856.6" y="583.8" width="1.1" height="12.0" fill="#2e2727" /><rect x="859.2" y="583.8" width="1.1" height="12.0" fill="#2e2727" /><rect x="861.8" y="583.8" width="1.1" height="12.0" fill="#2e2727" /><rect x="864.4" y="583.8" width="1.1" height="12.0" fill="#2e2727" /><rect x="867.0" y="583.8" width="1.1" height="12.0" fill="#2e2727" /><rect x="869.6" y="583.8" width="1.1" height="12.0" fill="#2e2727" /><rect x="872.2" y="583.8" width="1.1" height="12.0" fill="#2e2727" /><rect x="874.8" y="583.8" width="1.1" height="12.0" fill="#2e2727" /><rect x="877.4" y="583.8" width="1.1" height="12.0" fill="#2e2727" /><rect x="880.0" y="583.8" width="1.1" height="12.0" fill="#2e2727" /><rect x="882.6" y="583.8" width="1.1" height="12.0" fill="#2e2727" /><rect x="824.0" y="595.8" width="60.0" height="6.0" fill="#8c8484" /><polygon points="743.6,632.7 824.0,632.7 824.0,636.3 743.6,636.3" fill="#2e2727" /><rect x="884.0" y="632.7" width="89.0" height="3.6" fill="#2e2727" /><path d="M972.5,634.5 L979,627.7" stroke="#2e2727" stroke-width="1.7"/><rect x="757.1" y="609.0" width="22.0" height="16.5" fill="#27282a" /><rect x="758.3" y="610.2" width="19.6" height="14.1" fill="#9aa3a5" /><rect x="758.3" y="617.3" width="19.6" height="7.4" fill="#a89a8e" /><rect x="758.3" y="612.0" width="19.6" height="1.1" fill="#27282a" /><rect x="767.5" y="609.0" width="1.2" height="16.5" fill="#27282a" /><rect x="802.7" y="608.5" width="10.5" height="16.0" fill="#27282a" /><rect x="803.9" y="609.7" width="8.1" height="13.6" fill="#9aa3a5" /><rect x="803.9" y="616.5" width="8.1" height="7.2" fill="#a89a8e" /><rect x="803.9" y="611.5" width="8.1" height="1.1" fill="#27282a" /><rect x="899.0" y="608.0" width="11.0" height="17.0" fill="#27282a" /><rect x="900.2" y="609.2" width="8.6" height="14.6" fill="#9aa3a5" /><rect x="900.2" y="616.5" width="8.6" height="7.7" fill="#a89a8e" /><rect x="900.2" y="611.0" width="8.6" height="1.1" fill="#27282a" /><rect x="935.0" y="608.0" width="24.0" height="17.0" fill="#27282a" /><rect x="936.2" y="609.2" width="21.6" height="14.6" fill="#9aa3a5" /><rect x="936.2" y="616.5" width="21.6" height="7.7" fill="#a89a8e" /><rect x="936.2" y="611.0" width="21.6" height="1.1" fill="#27282a" /><rect x="946.4" y="608.0" width="1.2" height="17.0" fill="#27282a" /><rect x="829.0" y="606.5" width="13.0" height="18.0" fill="#2e2727" /><rect x="830.5" y="608.0" width="10.0" height="16.5" fill="#a69b92" /><rect x="871.0" y="606.5" width="12.0" height="18.0" fill="#2e2727" /><rect x="872.5" y="608.0" width="9.0" height="16.5" fill="#a69b92" /><rect x="847.0" y="609.5" width="1.2" height="12.0" fill="#2e2727" /><rect x="847.0" y="609.5" width="7.0" height="1.2" fill="#2e2727" /><rect x="847.0" y="614.5" width="7.0" height="1.2" fill="#2e2727" /><rect x="862.0" y="609.5" width="1.2" height="12.0" fill="#2e2727" /><rect x="862.0" y="609.5" width="7.0" height="1.2" fill="#2e2727" /><rect x="862.0" y="614.5" width="7.0" height="1.2" fill="#2e2727" /><rect x="828.0" y="618.5" width="56.0" height="1.6" fill="#2e2727" /><rect x="828.0" y="628.9" width="56.0" height="1.6" fill="#2e2727" /><rect x="828.0" y="618.5" width="1.1" height="12.0" fill="#2e2727" /><rect x="830.6" y="618.5" width="1.1" height="12.0" fill="#2e2727" /><rect x="833.2" y="618.5" width="1.1" height="12.0" fill="#2e2727" /><rect x="835.8" y="618.5" width="1.1" height="12.0" fill="#2e2727" /><rect x="838.4" y="618.5" width="1.1" height="12.0" fill="#2e2727" /><rect x="841.0" y="618.5" width="1.1" height="12.0" fill="#2e2727" /><rect x="843.6" y="618.5" width="1.1" height="12.0" fill="#2e2727" /><rect x="846.2" y="618.5" width="1.1" height="12.0" fill="#2e2727" /><rect x="848.8" y="618.5" width="1.1" height="12.0" fill="#2e2727" /><rect x="851.4" y="618.5" width="1.1" height="12.0" fill="#2e2727" /><rect x="854.0" y="618.5" width="1.1" height="12.0" fill="#2e2727" /><rect x="856.6" y="618.5" width="1.1" height="12.0" fill="#2e2727" /><rect x="859.2" y="618.5" width="1.1" height="12.0" fill="#2e2727" /><rect x="861.8" y="618.5" width="1.1" height="12.0" fill="#2e2727" /><rect x="864.4" y="618.5" width="1.1" height="12.0" fill="#2e2727" /><rect x="867.0" y="618.5" width="1.1" height="12.0" fill="#2e2727" /><rect x="869.6" y="618.5" width="1.1" height="12.0" fill="#2e2727" /><rect x="872.2" y="618.5" width="1.1" height="12.0" fill="#2e2727" /><rect x="874.8" y="618.5" width="1.1" height="12.0" fill="#2e2727" /><rect x="877.4" y="618.5" width="1.1" height="12.0" fill="#2e2727" /><rect x="880.0" y="618.5" width="1.1" height="12.0" fill="#2e2727" /><rect x="882.6" y="618.5" width="1.1" height="12.0" fill="#2e2727" /><rect x="824.0" y="630.5" width="60.0" height="6.0" fill="#8c8484" /><polygon points="744.0,667.3 824.0,667.3 824.0,670.9 744.0,670.9" fill="#2e2727" /><rect x="884.0" y="667.3" width="89.0" height="3.6" fill="#2e2727" /><path d="M972.5,669.1 L979,660.4" stroke="#2e2727" stroke-width="1.7"/><rect x="757.5" y="643.6" width="22.0" height="16.5" fill="#27282a" /><rect x="758.7" y="644.8" width="19.6" height="14.1" fill="#9aa3a5" /><rect x="758.7" y="651.9" width="19.6" height="7.4" fill="#a89a8e" /><rect x="758.7" y="646.6" width="19.6" height="1.1" fill="#27282a" /><rect x="767.9" y="643.6" width="1.2" height="16.5" fill="#27282a" /><rect x="802.9" y="643.1" width="10.5" height="16.0" fill="#27282a" /><rect x="804.1" y="644.3" width="8.1" height="13.6" fill="#9aa3a5" /><rect x="804.1" y="651.1" width="8.1" height="7.2" fill="#a89a8e" /><rect x="804.1" y="646.1" width="8.1" height="1.1" fill="#27282a" /><rect x="899.0" y="642.6" width="11.0" height="17.0" fill="#27282a" /><rect x="900.2" y="643.8" width="8.6" height="14.6" fill="#9aa3a5" /><rect x="900.2" y="651.1" width="8.6" height="7.7" fill="#a89a8e" /><rect x="900.2" y="645.6" width="8.6" height="1.1" fill="#27282a" /><rect x="935.0" y="642.6" width="24.0" height="17.0" fill="#27282a" /><rect x="936.2" y="643.8" width="21.6" height="14.6" fill="#9aa3a5" /><rect x="936.2" y="651.1" width="21.6" height="7.7" fill="#a89a8e" /><rect x="936.2" y="645.6" width="21.6" height="1.1" fill="#27282a" /><rect x="946.4" y="642.6" width="1.2" height="17.0" fill="#27282a" /><rect x="829.0" y="641.1" width="13.0" height="18.0" fill="#2e2727" /><rect x="830.5" y="642.6" width="10.0" height="16.5" fill="#a69b92" /><rect x="871.0" y="641.1" width="12.0" height="18.0" fill="#2e2727" /><rect x="872.5" y="642.6" width="9.0" height="16.5" fill="#a69b92" /><rect x="847.0" y="644.1" width="1.2" height="12.0" fill="#2e2727" /><rect x="847.0" y="644.1" width="7.0" height="1.2" fill="#2e2727" /><rect x="847.0" y="649.1" width="7.0" height="1.2" fill="#2e2727" /><rect x="862.0" y="644.1" width="1.2" height="12.0" fill="#2e2727" /><rect x="862.0" y="644.1" width="7.0" height="1.2" fill="#2e2727" /><rect x="862.0" y="649.1" width="7.0" height="1.2" fill="#2e2727" /><rect x="828.0" y="653.1" width="56.0" height="1.6" fill="#2e2727" /><rect x="828.0" y="663.5" width="56.0" height="1.6" fill="#2e2727" /><rect x="828.0" y="653.1" width="1.1" height="12.0" fill="#2e2727" /><rect x="830.6" y="653.1" width="1.1" height="12.0" fill="#2e2727" /><rect x="833.2" y="653.1" width="1.1" height="12.0" fill="#2e2727" /><rect x="835.8" y="653.1" width="1.1" height="12.0" fill="#2e2727" /><rect x="838.4" y="653.1" width="1.1" height="12.0" fill="#2e2727" /><rect x="841.0" y="653.1" width="1.1" height="12.0" fill="#2e2727" /><rect x="843.6" y="653.1" width="1.1" height="12.0" fill="#2e2727" /><rect x="846.2" y="653.1" width="1.1" height="12.0" fill="#2e2727" /><rect x="848.8" y="653.1" width="1.1" height="12.0" fill="#2e2727" /><rect x="851.4" y="653.1" width="1.1" height="12.0" fill="#2e2727" /><rect x="854.0" y="653.1" width="1.1" height="12.0" fill="#2e2727" /><rect x="856.6" y="653.1" width="1.1" height="12.0" fill="#2e2727" /><rect x="859.2" y="653.1" width="1.1" height="12.0" fill="#2e2727" /><rect x="861.8" y="653.1" width="1.1" height="12.0" fill="#2e2727" /><rect x="864.4" y="653.1" width="1.1" height="12.0" fill="#2e2727" /><rect x="867.0" y="653.1" width="1.1" height="12.0" fill="#2e2727" /><rect x="869.6" y="653.1" width="1.1" height="12.0" fill="#2e2727" /><rect x="872.2" y="653.1" width="1.1" height="12.0" fill="#2e2727" /><rect x="874.8" y="653.1" width="1.1" height="12.0" fill="#2e2727" /><rect x="877.4" y="653.1" width="1.1" height="12.0" fill="#2e2727" /><rect x="880.0" y="653.1" width="1.1" height="12.0" fill="#2e2727" /><rect x="882.6" y="653.1" width="1.1" height="12.0" fill="#2e2727" /><rect x="824.0" y="665.1" width="60.0" height="6.0" fill="#8c8484" /><polygon points="744.3,701.8 824.0,701.8 824.0,705.4 744.3,705.4" fill="#2e2727" /><rect x="884.0" y="701.8" width="89.0" height="3.6" fill="#2e2727" /><path d="M972.5,703.6 L979,692.9" stroke="#2e2727" stroke-width="1.7"/><rect x="757.8" y="678.1" width="22.0" height="16.5" fill="#27282a" /><rect x="759.0" y="679.3" width="19.6" height="14.1" fill="#9aa3a5" /><rect x="759.0" y="686.4" width="19.6" height="7.4" fill="#a89a8e" /><rect x="759.0" y="681.1" width="19.6" height="1.1" fill="#27282a" /><rect x="768.2" y="678.1" width="1.2" height="16.5" fill="#27282a" /><rect x="803.1" y="677.6" width="10.5" height="16.0" fill="#27282a" /><rect x="804.3" y="678.8" width="8.1" height="13.6" fill="#9aa3a5" /><rect x="804.3" y="685.6" width="8.1" height="7.2" fill="#a89a8e" /><rect x="804.3" y="680.6" width="8.1" height="1.1" fill="#27282a" /><rect x="899.0" y="677.1" width="11.0" height="17.0" fill="#27282a" /><rect x="900.2" y="678.3" width="8.6" height="14.6" fill="#9aa3a5" /><rect x="900.2" y="685.6" width="8.6" height="7.7" fill="#a89a8e" /><rect x="900.2" y="680.1" width="8.6" height="1.1" fill="#27282a" /><rect x="935.0" y="677.1" width="24.0" height="17.0" fill="#27282a" /><rect x="936.2" y="678.3" width="21.6" height="14.6" fill="#9aa3a5" /><rect x="936.2" y="685.6" width="21.6" height="7.7" fill="#a89a8e" /><rect x="936.2" y="680.1" width="21.6" height="1.1" fill="#27282a" /><rect x="946.4" y="677.1" width="1.2" height="17.0" fill="#27282a" /><rect x="829.0" y="675.6" width="13.0" height="18.0" fill="#2e2727" /><rect x="830.5" y="677.1" width="10.0" height="16.5" fill="#a69b92" /><rect x="871.0" y="675.6" width="12.0" height="18.0" fill="#2e2727" /><rect x="872.5" y="677.1" width="9.0" height="16.5" fill="#a69b92" /><rect x="847.0" y="678.6" width="1.2" height="12.0" fill="#2e2727" /><rect x="847.0" y="678.6" width="7.0" height="1.2" fill="#2e2727" /><rect x="847.0" y="683.6" width="7.0" height="1.2" fill="#2e2727" /><rect x="862.0" y="678.6" width="1.2" height="12.0" fill="#2e2727" /><rect x="862.0" y="678.6" width="7.0" height="1.2" fill="#2e2727" /><rect x="862.0" y="683.6" width="7.0" height="1.2" fill="#2e2727" /><rect x="828.0" y="687.6" width="56.0" height="1.6" fill="#2e2727" /><rect x="828.0" y="698.0" width="56.0" height="1.6" fill="#2e2727" /><rect x="828.0" y="687.6" width="1.1" height="12.0" fill="#2e2727" /><rect x="830.6" y="687.6" width="1.1" height="12.0" fill="#2e2727" /><rect x="833.2" y="687.6" width="1.1" height="12.0" fill="#2e2727" /><rect x="835.8" y="687.6" width="1.1" height="12.0" fill="#2e2727" /><rect x="838.4" y="687.6" width="1.1" height="12.0" fill="#2e2727" /><rect x="841.0" y="687.6" width="1.1" height="12.0" fill="#2e2727" /><rect x="843.6" y="687.6" width="1.1" height="12.0" fill="#2e2727" /><rect x="846.2" y="687.6" width="1.1" height="12.0" fill="#2e2727" /><rect x="848.8" y="687.6" width="1.1" height="12.0" fill="#2e2727" /><rect x="851.4" y="687.6" width="1.1" height="12.0" fill="#2e2727" /><rect x="854.0" y="687.6" width="1.1" height="12.0" fill="#2e2727" /><rect x="856.6" y="687.6" width="1.1" height="12.0" fill="#2e2727" /><rect x="859.2" y="687.6" width="1.1" height="12.0" fill="#2e2727" /><rect x="861.8" y="687.6" width="1.1" height="12.0" fill="#2e2727" /><rect x="864.4" y="687.6" width="1.1" height="12.0" fill="#2e2727" /><rect x="867.0" y="687.6" width="1.1" height="12.0" fill="#2e2727" /><rect x="869.6" y="687.6" width="1.1" height="12.0" fill="#2e2727" /><rect x="872.2" y="687.6" width="1.1" height="12.0" fill="#2e2727" /><rect x="874.8" y="687.6" width="1.1" height="12.0" fill="#2e2727" /><rect x="877.4" y="687.6" width="1.1" height="12.0" fill="#2e2727" /><rect x="880.0" y="687.6" width="1.1" height="12.0" fill="#2e2727" /><rect x="882.6" y="687.6" width="1.1" height="12.0" fill="#2e2727" /><rect x="824.0" y="699.6" width="60.0" height="6.0" fill="#8c8484" /><polygon points="744.7,736.2 824.0,736.2 824.0,739.8 744.7,739.8" fill="#2e2727" /><rect x="884.0" y="736.2" width="89.0" height="3.6" fill="#2e2727" /><path d="M972.5,738.0 L979,725.2" stroke="#2e2727" stroke-width="1.7"/><rect x="758.2" y="712.5" width="22.0" height="16.5" fill="#27282a" /><rect x="759.4" y="713.7" width="19.6" height="14.1" fill="#9aa3a5" /><rect x="759.4" y="720.7" width="19.6" height="7.4" fill="#a89a8e" /><rect x="759.4" y="715.5" width="19.6" height="1.1" fill="#27282a" /><rect x="768.6" y="712.5" width="1.2" height="16.5" fill="#27282a" /><rect x="803.3" y="712.0" width="10.5" height="16.0" fill="#27282a" /><rect x="804.5" y="713.2" width="8.1" height="13.6" fill="#9aa3a5" /><rect x="804.5" y="720.0" width="8.1" height="7.2" fill="#a89a8e" /><rect x="804.5" y="715.0" width="8.1" height="1.1" fill="#27282a" /><rect x="899.0" y="711.5" width="11.0" height="17.0" fill="#27282a" /><rect x="900.2" y="712.7" width="8.6" height="14.6" fill="#9aa3a5" /><rect x="900.2" y="720.0" width="8.6" height="7.7" fill="#a89a8e" /><rect x="900.2" y="714.5" width="8.6" height="1.1" fill="#27282a" /><rect x="935.0" y="711.5" width="24.0" height="17.0" fill="#27282a" /><rect x="936.2" y="712.7" width="21.6" height="14.6" fill="#9aa3a5" /><rect x="936.2" y="720.0" width="21.6" height="7.7" fill="#a89a8e" /><rect x="936.2" y="714.5" width="21.6" height="1.1" fill="#27282a" /><rect x="946.4" y="711.5" width="1.2" height="17.0" fill="#27282a" /><rect x="829.0" y="710.0" width="13.0" height="18.0" fill="#2e2727" /><rect x="830.5" y="711.5" width="10.0" height="16.5" fill="#a69b92" /><rect x="871.0" y="710.0" width="12.0" height="18.0" fill="#2e2727" /><rect x="872.5" y="711.5" width="9.0" height="16.5" fill="#a69b92" /><rect x="847.0" y="713.0" width="1.2" height="12.0" fill="#2e2727" /><rect x="847.0" y="713.0" width="7.0" height="1.2" fill="#2e2727" /><rect x="847.0" y="718.0" width="7.0" height="1.2" fill="#2e2727" /><rect x="862.0" y="713.0" width="1.2" height="12.0" fill="#2e2727" /><rect x="862.0" y="713.0" width="7.0" height="1.2" fill="#2e2727" /><rect x="862.0" y="718.0" width="7.0" height="1.2" fill="#2e2727" /><rect x="828.0" y="722.0" width="56.0" height="1.6" fill="#2e2727" /><rect x="828.0" y="732.4" width="56.0" height="1.6" fill="#2e2727" /><rect x="828.0" y="722.0" width="1.1" height="12.0" fill="#2e2727" /><rect x="830.6" y="722.0" width="1.1" height="12.0" fill="#2e2727" /><rect x="833.2" y="722.0" width="1.1" height="12.0" fill="#2e2727" /><rect x="835.8" y="722.0" width="1.1" height="12.0" fill="#2e2727" /><rect x="838.4" y="722.0" width="1.1" height="12.0" fill="#2e2727" /><rect x="841.0" y="722.0" width="1.1" height="12.0" fill="#2e2727" /><rect x="843.6" y="722.0" width="1.1" height="12.0" fill="#2e2727" /><rect x="846.2" y="722.0" width="1.1" height="12.0" fill="#2e2727" /><rect x="848.8" y="722.0" width="1.1" height="12.0" fill="#2e2727" /><rect x="851.4" y="722.0" width="1.1" height="12.0" fill="#2e2727" /><rect x="854.0" y="722.0" width="1.1" height="12.0" fill="#2e2727" /><rect x="856.6" y="722.0" width="1.1" height="12.0" fill="#2e2727" /><rect x="859.2" y="722.0" width="1.1" height="12.0" fill="#2e2727" /><rect x="861.8" y="722.0" width="1.1" height="12.0" fill="#2e2727" /><rect x="864.4" y="722.0" width="1.1" height="12.0" fill="#2e2727" /><rect x="867.0" y="722.0" width="1.1" height="12.0" fill="#2e2727" /><rect x="869.6" y="722.0" width="1.1" height="12.0" fill="#2e2727" /><rect x="872.2" y="722.0" width="1.1" height="12.0" fill="#2e2727" /><rect x="874.8" y="722.0" width="1.1" height="12.0" fill="#2e2727" /><rect x="877.4" y="722.0" width="1.1" height="12.0" fill="#2e2727" /><rect x="880.0" y="722.0" width="1.1" height="12.0" fill="#2e2727" /><rect x="882.6" y="722.0" width="1.1" height="12.0" fill="#2e2727" /><rect x="824.0" y="734.0" width="60.0" height="6.0" fill="#8c8484" /><polygon points="745.0,770.4 824.0,770.4 824.0,774.0 745.0,774.0" fill="#2e2727" /><rect x="884.0" y="770.4" width="89.0" height="3.6" fill="#2e2727" /><path d="M972.5,772.2 L979,757.5" stroke="#2e2727" stroke-width="1.7"/><rect x="758.5" y="746.7" width="22.0" height="16.5" fill="#27282a" /><rect x="759.7" y="747.9" width="19.6" height="14.1" fill="#9aa3a5" /><rect x="759.7" y="754.9" width="19.6" height="7.4" fill="#a89a8e" /><rect x="759.7" y="749.7" width="19.6" height="1.1" fill="#27282a" /><rect x="768.9" y="746.7" width="1.2" height="16.5" fill="#27282a" /><rect x="803.5" y="746.2" width="10.5" height="16.0" fill="#27282a" /><rect x="804.7" y="747.4" width="8.1" height="13.6" fill="#9aa3a5" /><rect x="804.7" y="754.2" width="8.1" height="7.2" fill="#a89a8e" /><rect x="804.7" y="749.2" width="8.1" height="1.1" fill="#27282a" /><rect x="899.0" y="745.7" width="11.0" height="17.0" fill="#27282a" /><rect x="900.2" y="746.9" width="8.6" height="14.6" fill="#9aa3a5" /><rect x="900.2" y="754.2" width="8.6" height="7.7" fill="#a89a8e" /><rect x="900.2" y="748.7" width="8.6" height="1.1" fill="#27282a" /><rect x="935.0" y="745.7" width="24.0" height="17.0" fill="#27282a" /><rect x="936.2" y="746.9" width="21.6" height="14.6" fill="#9aa3a5" /><rect x="936.2" y="754.2" width="21.6" height="7.7" fill="#a89a8e" /><rect x="936.2" y="748.7" width="21.6" height="1.1" fill="#27282a" /><rect x="946.4" y="745.7" width="1.2" height="17.0" fill="#27282a" /><rect x="829.0" y="744.2" width="13.0" height="18.0" fill="#2e2727" /><rect x="830.5" y="745.7" width="10.0" height="16.5" fill="#a69b92" /><rect x="871.0" y="744.2" width="12.0" height="18.0" fill="#2e2727" /><rect x="872.5" y="745.7" width="9.0" height="16.5" fill="#a69b92" /><rect x="847.0" y="747.2" width="1.2" height="12.0" fill="#2e2727" /><rect x="847.0" y="747.2" width="7.0" height="1.2" fill="#2e2727" /><rect x="847.0" y="752.2" width="7.0" height="1.2" fill="#2e2727" /><rect x="862.0" y="747.2" width="1.2" height="12.0" fill="#2e2727" /><rect x="862.0" y="747.2" width="7.0" height="1.2" fill="#2e2727" /><rect x="862.0" y="752.2" width="7.0" height="1.2" fill="#2e2727" /><rect x="828.0" y="756.2" width="56.0" height="1.6" fill="#2e2727" /><rect x="828.0" y="766.6" width="56.0" height="1.6" fill="#2e2727" /><rect x="828.0" y="756.2" width="1.1" height="12.0" fill="#2e2727" /><rect x="830.6" y="756.2" width="1.1" height="12.0" fill="#2e2727" /><rect x="833.2" y="756.2" width="1.1" height="12.0" fill="#2e2727" /><rect x="835.8" y="756.2" width="1.1" height="12.0" fill="#2e2727" /><rect x="838.4" y="756.2" width="1.1" height="12.0" fill="#2e2727" /><rect x="841.0" y="756.2" width="1.1" height="12.0" fill="#2e2727" /><rect x="843.6" y="756.2" width="1.1" height="12.0" fill="#2e2727" /><rect x="846.2" y="756.2" width="1.1" height="12.0" fill="#2e2727" /><rect x="848.8" y="756.2" width="1.1" height="12.0" fill="#2e2727" /><rect x="851.4" y="756.2" width="1.1" height="12.0" fill="#2e2727" /><rect x="854.0" y="756.2" width="1.1" height="12.0" fill="#2e2727" /><rect x="856.6" y="756.2" width="1.1" height="12.0" fill="#2e2727" /><rect x="859.2" y="756.2" width="1.1" height="12.0" fill="#2e2727" /><rect x="861.8" y="756.2" width="1.1" height="12.0" fill="#2e2727" /><rect x="864.4" y="756.2" width="1.1" height="12.0" fill="#2e2727" /><rect x="867.0" y="756.2" width="1.1" height="12.0" fill="#2e2727" /><rect x="869.6" y="756.2" width="1.1" height="12.0" fill="#2e2727" /><rect x="872.2" y="756.2" width="1.1" height="12.0" fill="#2e2727" /><rect x="874.8" y="756.2" width="1.1" height="12.0" fill="#2e2727" /><rect x="877.4" y="756.2" width="1.1" height="12.0" fill="#2e2727" /><rect x="880.0" y="756.2" width="1.1" height="12.0" fill="#2e2727" /><rect x="882.6" y="756.2" width="1.1" height="12.0" fill="#2e2727" /><rect x="824.0" y="768.2" width="60.0" height="6.0" fill="#8c8484" /><rect x="716.5" y="281.0" width="22.0" height="11.5" fill="#2e2727" /><rect x="719.5" y="283.5" width="2.2" height="6.5" fill="#6e6868" /><rect x="724.0" y="283.5" width="2.2" height="6.5" fill="#6e6868" /><rect x="728.5" y="283.5" width="2.2" height="6.5" fill="#6e6868" /><rect x="733.0" y="283.5" width="2.2" height="6.5" fill="#6e6868" /><rect x="717.0" y="292.5" width="21.0" height="6.5" fill="#8c8484" /><rect x="738.5" y="265.0" width="2.0" height="27.0" fill="#2e2727" /><rect x="717.0" y="314.5" width="22.0" height="11.5" fill="#2e2727" /><rect x="720.0" y="317.0" width="2.2" height="6.5" fill="#6e6868" /><rect x="724.5" y="317.0" width="2.2" height="6.5" fill="#6e6868" /><rect x="729.0" y="317.0" width="2.2" height="6.5" fill="#6e6868" /><rect x="733.5" y="317.0" width="2.2" height="6.5" fill="#6e6868" /><rect x="717.5" y="326.0" width="21.0" height="6.5" fill="#8c8484" /><rect x="739.0" y="298.5" width="2.0" height="27.0" fill="#2e2727" /><rect x="717.4" y="347.9" width="22.0" height="11.5" fill="#2e2727" /><rect x="720.4" y="350.4" width="2.2" height="6.5" fill="#6e6868" /><rect x="724.9" y="350.4" width="2.2" height="6.5" fill="#6e6868" /><rect x="729.4" y="350.4" width="2.2" height="6.5" fill="#6e6868" /><rect x="733.9" y="350.4" width="2.2" height="6.5" fill="#6e6868" /><rect x="717.9" y="359.4" width="21.0" height="6.5" fill="#8c8484" /><rect x="739.4" y="331.9" width="2.0" height="27.0" fill="#2e2727" /><rect x="717.8" y="381.2" width="22.0" height="11.5" fill="#2e2727" /><rect x="720.8" y="383.7" width="2.2" height="6.5" fill="#6e6868" /><rect x="725.3" y="383.7" width="2.2" height="6.5" fill="#6e6868" /><rect x="729.8" y="383.7" width="2.2" height="6.5" fill="#6e6868" /><rect x="734.3" y="383.7" width="2.2" height="6.5" fill="#6e6868" /><rect x="718.3" y="392.7" width="21.0" height="6.5" fill="#8c8484" /><rect x="739.8" y="365.2" width="2.0" height="27.0" fill="#2e2727" /><rect x="718.3" y="414.4" width="22.0" height="11.5" fill="#2e2727" /><rect x="721.3" y="416.9" width="2.2" height="6.5" fill="#6e6868" /><rect x="725.8" y="416.9" width="2.2" height="6.5" fill="#6e6868" /><rect x="730.3" y="416.9" width="2.2" height="6.5" fill="#6e6868" /><rect x="734.8" y="416.9" width="2.2" height="6.5" fill="#6e6868" /><rect x="718.8" y="425.9" width="21.0" height="6.5" fill="#8c8484" /><rect x="740.3" y="398.4" width="2.0" height="27.0" fill="#2e2727" /><rect x="718.7" y="447.6" width="22.0" height="11.5" fill="#2e2727" /><rect x="721.7" y="450.1" width="2.2" height="6.5" fill="#6e6868" /><rect x="726.2" y="450.1" width="2.2" height="6.5" fill="#6e6868" /><rect x="730.7" y="450.1" width="2.2" height="6.5" fill="#6e6868" /><rect x="735.2" y="450.1" width="2.2" height="6.5" fill="#6e6868" /><rect x="719.2" y="459.1" width="21.0" height="6.5" fill="#8c8484" /><rect x="740.7" y="431.6" width="2.0" height="27.0" fill="#2e2727" /><rect x="719.2" y="480.7" width="22.0" height="11.5" fill="#2e2727" /><rect x="722.2" y="483.2" width="2.2" height="6.5" fill="#6e6868" /><rect x="726.7" y="483.2" width="2.2" height="6.5" fill="#6e6868" /><rect x="731.2" y="483.2" width="2.2" height="6.5" fill="#6e6868" /><rect x="735.7" y="483.2" width="2.2" height="6.5" fill="#6e6868" /><rect x="719.7" y="492.2" width="21.0" height="6.5" fill="#8c8484" /><rect x="741.2" y="464.7" width="2.0" height="27.0" fill="#2e2727" /><rect x="719.6" y="513.7" width="22.0" height="11.5" fill="#2e2727" /><rect x="722.6" y="516.2" width="2.2" height="6.5" fill="#6e6868" /><rect x="727.1" y="516.2" width="2.2" height="6.5" fill="#6e6868" /><rect x="731.6" y="516.2" width="2.2" height="6.5" fill="#6e6868" /><rect x="736.1" y="516.2" width="2.2" height="6.5" fill="#6e6868" /><rect x="720.1" y="525.2" width="21.0" height="6.5" fill="#8c8484" /><rect x="741.6" y="497.7" width="2.0" height="27.0" fill="#2e2727" /><rect x="720.0" y="546.7" width="22.0" height="11.5" fill="#2e2727" /><rect x="723.0" y="549.2" width="2.2" height="6.5" fill="#6e6868" /><rect x="727.5" y="549.2" width="2.2" height="6.5" fill="#6e6868" /><rect x="732.0" y="549.2" width="2.2" height="6.5" fill="#6e6868" /><rect x="736.5" y="549.2" width="2.2" height="6.5" fill="#6e6868" /><rect x="720.5" y="558.2" width="21.0" height="6.5" fill="#8c8484" /><rect x="742.0" y="530.7" width="2.0" height="27.0" fill="#2e2727" /><rect x="720.5" y="579.6" width="22.0" height="11.5" fill="#2e2727" /><rect x="723.5" y="582.1" width="2.2" height="6.5" fill="#6e6868" /><rect x="728.0" y="582.1" width="2.2" height="6.5" fill="#6e6868" /><rect x="732.5" y="582.1" width="2.2" height="6.5" fill="#6e6868" /><rect x="737.0" y="582.1" width="2.2" height="6.5" fill="#6e6868" /><rect x="721.0" y="591.1" width="21.0" height="6.5" fill="#8c8484" /><rect x="742.5" y="563.6" width="2.0" height="27.0" fill="#2e2727" /><rect x="720.9" y="612.4" width="22.0" height="11.5" fill="#2e2727" /><rect x="723.9" y="614.9" width="2.2" height="6.5" fill="#6e6868" /><rect x="728.4" y="614.9" width="2.2" height="6.5" fill="#6e6868" /><rect x="732.9" y="614.9" width="2.2" height="6.5" fill="#6e6868" /><rect x="737.4" y="614.9" width="2.2" height="6.5" fill="#6e6868" /><rect x="721.4" y="623.9" width="21.0" height="6.5" fill="#8c8484" /><rect x="742.9" y="596.4" width="2.0" height="27.0" fill="#2e2727" /><rect x="721.3" y="645.1" width="22.0" height="11.5" fill="#2e2727" /><rect x="724.3" y="647.6" width="2.2" height="6.5" fill="#6e6868" /><rect x="728.8" y="647.6" width="2.2" height="6.5" fill="#6e6868" /><rect x="733.3" y="647.6" width="2.2" height="6.5" fill="#6e6868" /><rect x="737.8" y="647.6" width="2.2" height="6.5" fill="#6e6868" /><rect x="721.8" y="656.6" width="21.0" height="6.5" fill="#8c8484" /><rect x="743.3" y="629.1" width="2.0" height="27.0" fill="#2e2727" /><rect x="721.8" y="677.8" width="22.0" height="11.5" fill="#2e2727" /><rect x="724.8" y="680.3" width="2.2" height="6.5" fill="#6e6868" /><rect x="729.3" y="680.3" width="2.2" height="6.5" fill="#6e6868" /><rect x="733.8" y="680.3" width="2.2" height="6.5" fill="#6e6868" /><rect x="738.3" y="680.3" width="2.2" height="6.5" fill="#6e6868" /><rect x="722.3" y="689.3" width="21.0" height="6.5" fill="#8c8484" /><rect x="743.8" y="661.8" width="2.0" height="27.0" fill="#2e2727" /><rect x="722.2" y="710.4" width="22.0" height="11.5" fill="#2e2727" /><rect x="725.2" y="712.9" width="2.2" height="6.5" fill="#6e6868" /><rect x="729.7" y="712.9" width="2.2" height="6.5" fill="#6e6868" /><rect x="734.2" y="712.9" width="2.2" height="6.5" fill="#6e6868" /><rect x="738.7" y="712.9" width="2.2" height="6.5" fill="#6e6868" /><rect x="722.7" y="721.9" width="21.0" height="6.5" fill="#8c8484" /><rect x="744.2" y="694.4" width="2.0" height="27.0" fill="#2e2727" /><rect x="722.6" y="742.9" width="22.0" height="11.5" fill="#2e2727" /><rect x="725.6" y="745.4" width="2.2" height="6.5" fill="#6e6868" /><rect x="730.1" y="745.4" width="2.2" height="6.5" fill="#6e6868" /><rect x="734.6" y="745.4" width="2.2" height="6.5" fill="#6e6868" /><rect x="739.1" y="745.4" width="2.2" height="6.5" fill="#6e6868" /><rect x="723.1" y="754.4" width="21.0" height="6.5" fill="#8c8484" /><rect x="744.6" y="726.9" width="2.0" height="27.0" fill="#2e2727" /><rect x="994.0" y="261.0" width="12.5" height="13.0" fill="#2e2727" /><rect x="995.5" y="262.5" width="9.5" height="11.5" fill="#a69b92" /><rect x="982.0" y="263.0" width="7.0" height="10.0" fill="#8d9496" /><rect x="979.0" y="273.0" width="44.0" height="1.6" fill="#2e2727" /><rect x="979.0" y="282.9" width="44.0" height="1.6" fill="#2e2727" /><rect x="979.0" y="273.0" width="1.1" height="11.5" fill="#2e2727" /><rect x="983.2" y="273.0" width="1.1" height="11.5" fill="#2e2727" /><rect x="987.4" y="273.0" width="1.1" height="11.5" fill="#2e2727" /><rect x="991.6" y="273.0" width="1.1" height="11.5" fill="#2e2727" /><rect x="995.8" y="273.0" width="1.1" height="11.5" fill="#2e2727" /><rect x="1000.0" y="273.0" width="1.1" height="11.5" fill="#2e2727" /><rect x="1004.2" y="273.0" width="1.1" height="11.5" fill="#2e2727" /><rect x="1008.4" y="273.0" width="1.1" height="11.5" fill="#2e2727" /><rect x="1012.6" y="273.0" width="1.1" height="11.5" fill="#2e2727" /><rect x="1016.8" y="273.0" width="1.1" height="11.5" fill="#2e2727" /><rect x="1021.0" y="273.0" width="1.1" height="11.5" fill="#2e2727" /><rect x="1010.0" y="273.0" width="13.0" height="11.5" fill="#2e2727" /><rect x="978.0" y="284.5" width="45.0" height="7.0" fill="#8c8484" /><rect x="994.0" y="295.8" width="12.5" height="13.0" fill="#2e2727" /><rect x="995.5" y="297.3" width="9.5" height="11.5" fill="#a69b92" /><rect x="982.0" y="297.8" width="7.0" height="10.0" fill="#8d9496" /><rect x="979.0" y="307.8" width="44.0" height="1.6" fill="#2e2727" /><rect x="979.0" y="317.7" width="44.0" height="1.6" fill="#2e2727" /><rect x="979.0" y="307.8" width="1.1" height="11.5" fill="#2e2727" /><rect x="983.2" y="307.8" width="1.1" height="11.5" fill="#2e2727" /><rect x="987.4" y="307.8" width="1.1" height="11.5" fill="#2e2727" /><rect x="991.6" y="307.8" width="1.1" height="11.5" fill="#2e2727" /><rect x="995.8" y="307.8" width="1.1" height="11.5" fill="#2e2727" /><rect x="1000.0" y="307.8" width="1.1" height="11.5" fill="#2e2727" /><rect x="1004.2" y="307.8" width="1.1" height="11.5" fill="#2e2727" /><rect x="1008.4" y="307.8" width="1.1" height="11.5" fill="#2e2727" /><rect x="1012.6" y="307.8" width="1.1" height="11.5" fill="#2e2727" /><rect x="1016.8" y="307.8" width="1.1" height="11.5" fill="#2e2727" /><rect x="1021.0" y="307.8" width="1.1" height="11.5" fill="#2e2727" /><rect x="1010.0" y="307.8" width="13.0" height="11.5" fill="#2e2727" /><rect x="978.0" y="319.3" width="45.0" height="7.0" fill="#8c8484" /><rect x="994.0" y="330.6" width="12.5" height="13.0" fill="#2e2727" /><rect x="995.5" y="332.1" width="9.5" height="11.5" fill="#a69b92" /><rect x="982.0" y="332.6" width="7.0" height="10.0" fill="#8d9496" /><rect x="979.0" y="342.6" width="44.0" height="1.6" fill="#2e2727" /><rect x="979.0" y="352.5" width="44.0" height="1.6" fill="#2e2727" /><rect x="979.0" y="342.6" width="1.1" height="11.5" fill="#2e2727" /><rect x="983.2" y="342.6" width="1.1" height="11.5" fill="#2e2727" /><rect x="987.4" y="342.6" width="1.1" height="11.5" fill="#2e2727" /><rect x="991.6" y="342.6" width="1.1" height="11.5" fill="#2e2727" /><rect x="995.8" y="342.6" width="1.1" height="11.5" fill="#2e2727" /><rect x="1000.0" y="342.6" width="1.1" height="11.5" fill="#2e2727" /><rect x="1004.2" y="342.6" width="1.1" height="11.5" fill="#2e2727" /><rect x="1008.4" y="342.6" width="1.1" height="11.5" fill="#2e2727" /><rect x="1012.6" y="342.6" width="1.1" height="11.5" fill="#2e2727" /><rect x="1016.8" y="342.6" width="1.1" height="11.5" fill="#2e2727" /><rect x="1021.0" y="342.6" width="1.1" height="11.5" fill="#2e2727" /><rect x="1010.0" y="342.6" width="13.0" height="11.5" fill="#2e2727" /><rect x="978.0" y="354.1" width="45.0" height="7.0" fill="#8c8484" /><rect x="994.0" y="365.2" width="12.5" height="13.0" fill="#2e2727" /><rect x="995.5" y="366.8" width="9.5" height="11.5" fill="#a69b92" /><rect x="982.0" y="367.2" width="7.0" height="10.0" fill="#8d9496" /><rect x="979.0" y="377.2" width="44.0" height="1.6" fill="#2e2727" /><rect x="979.0" y="387.1" width="44.0" height="1.6" fill="#2e2727" /><rect x="979.0" y="377.2" width="1.1" height="11.5" fill="#2e2727" /><rect x="983.2" y="377.2" width="1.1" height="11.5" fill="#2e2727" /><rect x="987.4" y="377.2" width="1.1" height="11.5" fill="#2e2727" /><rect x="991.6" y="377.2" width="1.1" height="11.5" fill="#2e2727" /><rect x="995.8" y="377.2" width="1.1" height="11.5" fill="#2e2727" /><rect x="1000.0" y="377.2" width="1.1" height="11.5" fill="#2e2727" /><rect x="1004.2" y="377.2" width="1.1" height="11.5" fill="#2e2727" /><rect x="1008.4" y="377.2" width="1.1" height="11.5" fill="#2e2727" /><rect x="1012.6" y="377.2" width="1.1" height="11.5" fill="#2e2727" /><rect x="1016.8" y="377.2" width="1.1" height="11.5" fill="#2e2727" /><rect x="1021.0" y="377.2" width="1.1" height="11.5" fill="#2e2727" /><rect x="1010.0" y="377.2" width="13.0" height="11.5" fill="#2e2727" /><rect x="978.0" y="388.8" width="45.0" height="7.0" fill="#8c8484" /><rect x="994.0" y="399.8" width="12.5" height="13.0" fill="#2e2727" /><rect x="995.5" y="401.3" width="9.5" height="11.5" fill="#a69b92" /><rect x="982.0" y="401.8" width="7.0" height="10.0" fill="#8d9496" /><rect x="979.0" y="411.8" width="44.0" height="1.6" fill="#2e2727" /><rect x="979.0" y="421.7" width="44.0" height="1.6" fill="#2e2727" /><rect x="979.0" y="411.8" width="1.1" height="11.5" fill="#2e2727" /><rect x="983.2" y="411.8" width="1.1" height="11.5" fill="#2e2727" /><rect x="987.4" y="411.8" width="1.1" height="11.5" fill="#2e2727" /><rect x="991.6" y="411.8" width="1.1" height="11.5" fill="#2e2727" /><rect x="995.8" y="411.8" width="1.1" height="11.5" fill="#2e2727" /><rect x="1000.0" y="411.8" width="1.1" height="11.5" fill="#2e2727" /><rect x="1004.2" y="411.8" width="1.1" height="11.5" fill="#2e2727" /><rect x="1008.4" y="411.8" width="1.1" height="11.5" fill="#2e2727" /><rect x="1012.6" y="411.8" width="1.1" height="11.5" fill="#2e2727" /><rect x="1016.8" y="411.8" width="1.1" height="11.5" fill="#2e2727" /><rect x="1021.0" y="411.8" width="1.1" height="11.5" fill="#2e2727" /><rect x="1010.0" y="411.8" width="13.0" height="11.5" fill="#2e2727" /><rect x="978.0" y="423.3" width="45.0" height="7.0" fill="#8c8484" /><rect x="994.0" y="434.2" width="12.5" height="13.0" fill="#2e2727" /><rect x="995.5" y="435.8" width="9.5" height="11.5" fill="#a69b92" /><rect x="982.0" y="436.2" width="7.0" height="10.0" fill="#8d9496" /><rect x="979.0" y="446.2" width="44.0" height="1.6" fill="#2e2727" /><rect x="979.0" y="456.1" width="44.0" height="1.6" fill="#2e2727" /><rect x="979.0" y="446.2" width="1.1" height="11.5" fill="#2e2727" /><rect x="983.2" y="446.2" width="1.1" height="11.5" fill="#2e2727" /><rect x="987.4" y="446.2" width="1.1" height="11.5" fill="#2e2727" /><rect x="991.6" y="446.2" width="1.1" height="11.5" fill="#2e2727" /><rect x="995.8" y="446.2" width="1.1" height="11.5" fill="#2e2727" /><rect x="1000.0" y="446.2" width="1.1" height="11.5" fill="#2e2727" /><rect x="1004.2" y="446.2" width="1.1" height="11.5" fill="#2e2727" /><rect x="1008.4" y="446.2" width="1.1" height="11.5" fill="#2e2727" /><rect x="1012.6" y="446.2" width="1.1" height="11.5" fill="#2e2727" /><rect x="1016.8" y="446.2" width="1.1" height="11.5" fill="#2e2727" /><rect x="1021.0" y="446.2" width="1.1" height="11.5" fill="#2e2727" /><rect x="1010.0" y="446.2" width="13.0" height="11.5" fill="#2e2727" /><rect x="978.0" y="457.8" width="45.0" height="7.0" fill="#8c8484" /><rect x="994.0" y="468.6" width="12.5" height="13.0" fill="#2e2727" /><rect x="995.5" y="470.1" width="9.5" height="11.5" fill="#a69b92" /><rect x="982.0" y="470.6" width="7.0" height="10.0" fill="#8d9496" /><rect x="979.0" y="480.6" width="44.0" height="1.6" fill="#2e2727" /><rect x="979.0" y="490.5" width="44.0" height="1.6" fill="#2e2727" /><rect x="979.0" y="480.6" width="1.1" height="11.5" fill="#2e2727" /><rect x="983.2" y="480.6" width="1.1" height="11.5" fill="#2e2727" /><rect x="987.4" y="480.6" width="1.1" height="11.5" fill="#2e2727" /><rect x="991.6" y="480.6" width="1.1" height="11.5" fill="#2e2727" /><rect x="995.8" y="480.6" width="1.1" height="11.5" fill="#2e2727" /><rect x="1000.0" y="480.6" width="1.1" height="11.5" fill="#2e2727" /><rect x="1004.2" y="480.6" width="1.1" height="11.5" fill="#2e2727" /><rect x="1008.4" y="480.6" width="1.1" height="11.5" fill="#2e2727" /><rect x="1012.6" y="480.6" width="1.1" height="11.5" fill="#2e2727" /><rect x="1016.8" y="480.6" width="1.1" height="11.5" fill="#2e2727" /><rect x="1021.0" y="480.6" width="1.1" height="11.5" fill="#2e2727" /><rect x="1010.0" y="480.6" width="13.0" height="11.5" fill="#2e2727" /><rect x="978.0" y="492.1" width="45.0" height="7.0" fill="#8c8484" /><rect x="994.0" y="502.8" width="12.5" height="13.0" fill="#2e2727" /><rect x="995.5" y="504.3" width="9.5" height="11.5" fill="#a69b92" /><rect x="982.0" y="504.8" width="7.0" height="10.0" fill="#8d9496" /><rect x="979.0" y="514.8" width="44.0" height="1.6" fill="#2e2727" /><rect x="979.0" y="524.7" width="44.0" height="1.6" fill="#2e2727" /><rect x="979.0" y="514.8" width="1.1" height="11.5" fill="#2e2727" /><rect x="983.2" y="514.8" width="1.1" height="11.5" fill="#2e2727" /><rect x="987.4" y="514.8" width="1.1" height="11.5" fill="#2e2727" /><rect x="991.6" y="514.8" width="1.1" height="11.5" fill="#2e2727" /><rect x="995.8" y="514.8" width="1.1" height="11.5" fill="#2e2727" /><rect x="1000.0" y="514.8" width="1.1" height="11.5" fill="#2e2727" /><rect x="1004.2" y="514.8" width="1.1" height="11.5" fill="#2e2727" /><rect x="1008.4" y="514.8" width="1.1" height="11.5" fill="#2e2727" /><rect x="1012.6" y="514.8" width="1.1" height="11.5" fill="#2e2727" /><rect x="1016.8" y="514.8" width="1.1" height="11.5" fill="#2e2727" /><rect x="1021.0" y="514.8" width="1.1" height="11.5" fill="#2e2727" /><rect x="1010.0" y="514.8" width="13.0" height="11.5" fill="#2e2727" /><rect x="978.0" y="526.3" width="45.0" height="7.0" fill="#8c8484" /><rect x="994.0" y="537.0" width="12.5" height="13.0" fill="#2e2727" /><rect x="995.5" y="538.5" width="9.5" height="11.5" fill="#a69b92" /><rect x="982.0" y="539.0" width="7.0" height="10.0" fill="#8d9496" /><rect x="979.0" y="549.0" width="44.0" height="1.6" fill="#2e2727" /><rect x="979.0" y="558.9" width="44.0" height="1.6" fill="#2e2727" /><rect x="979.0" y="549.0" width="1.1" height="11.5" fill="#2e2727" /><rect x="983.2" y="549.0" width="1.1" height="11.5" fill="#2e2727" /><rect x="987.4" y="549.0" width="1.1" height="11.5" fill="#2e2727" /><rect x="991.6" y="549.0" width="1.1" height="11.5" fill="#2e2727" /><rect x="995.8" y="549.0" width="1.1" height="11.5" fill="#2e2727" /><rect x="1000.0" y="549.0" width="1.1" height="11.5" fill="#2e2727" /><rect x="1004.2" y="549.0" width="1.1" height="11.5" fill="#2e2727" /><rect x="1008.4" y="549.0" width="1.1" height="11.5" fill="#2e2727" /><rect x="1012.6" y="549.0" width="1.1" height="11.5" fill="#2e2727" /><rect x="1016.8" y="549.0" width="1.1" height="11.5" fill="#2e2727" /><rect x="1021.0" y="549.0" width="1.1" height="11.5" fill="#2e2727" /><rect x="1010.0" y="549.0" width="13.0" height="11.5" fill="#2e2727" /><rect x="978.0" y="560.5" width="45.0" height="7.0" fill="#8c8484" /><rect x="994.0" y="571.0" width="12.5" height="13.0" fill="#2e2727" /><rect x="995.5" y="572.5" width="9.5" height="11.5" fill="#a69b92" /><rect x="982.0" y="573.0" width="7.0" height="10.0" fill="#8d9496" /><rect x="979.0" y="583.0" width="44.0" height="1.6" fill="#2e2727" /><rect x="979.0" y="592.9" width="44.0" height="1.6" fill="#2e2727" /><rect x="979.0" y="583.0" width="1.1" height="11.5" fill="#2e2727" /><rect x="983.2" y="583.0" width="1.1" height="11.5" fill="#2e2727" /><rect x="987.4" y="583.0" width="1.1" height="11.5" fill="#2e2727" /><rect x="991.6" y="583.0" width="1.1" height="11.5" fill="#2e2727" /><rect x="995.8" y="583.0" width="1.1" height="11.5" fill="#2e2727" /><rect x="1000.0" y="583.0" width="1.1" height="11.5" fill="#2e2727" /><rect x="1004.2" y="583.0" width="1.1" height="11.5" fill="#2e2727" /><rect x="1008.4" y="583.0" width="1.1" height="11.5" fill="#2e2727" /><rect x="1012.6" y="583.0" width="1.1" height="11.5" fill="#2e2727" /><rect x="1016.8" y="583.0" width="1.1" height="11.5" fill="#2e2727" /><rect x="1021.0" y="583.0" width="1.1" height="11.5" fill="#2e2727" /><rect x="1010.0" y="583.0" width="13.0" height="11.5" fill="#2e2727" /><rect x="978.0" y="594.5" width="45.0" height="7.0" fill="#8c8484" /><rect x="994.0" y="605.0" width="12.5" height="13.0" fill="#2e2727" /><rect x="995.5" y="606.5" width="9.5" height="11.5" fill="#a69b92" /><rect x="982.0" y="607.0" width="7.0" height="10.0" fill="#8d9496" /><rect x="979.0" y="617.0" width="44.0" height="1.6" fill="#2e2727" /><rect x="979.0" y="626.9" width="44.0" height="1.6" fill="#2e2727" /><rect x="979.0" y="617.0" width="1.1" height="11.5" fill="#2e2727" /><rect x="983.2" y="617.0" width="1.1" height="11.5" fill="#2e2727" /><rect x="987.4" y="617.0" width="1.1" height="11.5" fill="#2e2727" /><rect x="991.6" y="617.0" width="1.1" height="11.5" fill="#2e2727" /><rect x="995.8" y="617.0" width="1.1" height="11.5" fill="#2e2727" /><rect x="1000.0" y="617.0" width="1.1" height="11.5" fill="#2e2727" /><rect x="1004.2" y="617.0" width="1.1" height="11.5" fill="#2e2727" /><rect x="1008.4" y="617.0" width="1.1" height="11.5" fill="#2e2727" /><rect x="1012.6" y="617.0" width="1.1" height="11.5" fill="#2e2727" /><rect x="1016.8" y="617.0" width="1.1" height="11.5" fill="#2e2727" /><rect x="1021.0" y="617.0" width="1.1" height="11.5" fill="#2e2727" /><rect x="1010.0" y="617.0" width="13.0" height="11.5" fill="#2e2727" /><rect x="978.0" y="628.5" width="45.0" height="7.0" fill="#8c8484" /><rect x="994.0" y="638.9" width="12.5" height="13.0" fill="#2e2727" /><rect x="995.5" y="640.4" width="9.5" height="11.5" fill="#a69b92" /><rect x="982.0" y="640.9" width="7.0" height="10.0" fill="#8d9496" /><rect x="979.0" y="650.9" width="44.0" height="1.6" fill="#2e2727" /><rect x="979.0" y="660.8" width="44.0" height="1.6" fill="#2e2727" /><rect x="979.0" y="650.9" width="1.1" height="11.5" fill="#2e2727" /><rect x="983.2" y="650.9" width="1.1" height="11.5" fill="#2e2727" /><rect x="987.4" y="650.9" width="1.1" height="11.5" fill="#2e2727" /><rect x="991.6" y="650.9" width="1.1" height="11.5" fill="#2e2727" /><rect x="995.8" y="650.9" width="1.1" height="11.5" fill="#2e2727" /><rect x="1000.0" y="650.9" width="1.1" height="11.5" fill="#2e2727" /><rect x="1004.2" y="650.9" width="1.1" height="11.5" fill="#2e2727" /><rect x="1008.4" y="650.9" width="1.1" height="11.5" fill="#2e2727" /><rect x="1012.6" y="650.9" width="1.1" height="11.5" fill="#2e2727" /><rect x="1016.8" y="650.9" width="1.1" height="11.5" fill="#2e2727" /><rect x="1021.0" y="650.9" width="1.1" height="11.5" fill="#2e2727" /><rect x="1010.0" y="650.9" width="13.0" height="11.5" fill="#2e2727" /><rect x="978.0" y="662.4" width="45.0" height="7.0" fill="#8c8484" /><rect x="994.0" y="672.6" width="12.5" height="13.0" fill="#2e2727" /><rect x="995.5" y="674.1" width="9.5" height="11.5" fill="#a69b92" /><rect x="982.0" y="674.6" width="7.0" height="10.0" fill="#8d9496" /><rect x="979.0" y="684.6" width="44.0" height="1.6" fill="#2e2727" /><rect x="979.0" y="694.5" width="44.0" height="1.6" fill="#2e2727" /><rect x="979.0" y="684.6" width="1.1" height="11.5" fill="#2e2727" /><rect x="983.2" y="684.6" width="1.1" height="11.5" fill="#2e2727" /><rect x="987.4" y="684.6" width="1.1" height="11.5" fill="#2e2727" /><rect x="991.6" y="684.6" width="1.1" height="11.5" fill="#2e2727" /><rect x="995.8" y="684.6" width="1.1" height="11.5" fill="#2e2727" /><rect x="1000.0" y="684.6" width="1.1" height="11.5" fill="#2e2727" /><rect x="1004.2" y="684.6" width="1.1" height="11.5" fill="#2e2727" /><rect x="1008.4" y="684.6" width="1.1" height="11.5" fill="#2e2727" /><rect x="1012.6" y="684.6" width="1.1" height="11.5" fill="#2e2727" /><rect x="1016.8" y="684.6" width="1.1" height="11.5" fill="#2e2727" /><rect x="1021.0" y="684.6" width="1.1" height="11.5" fill="#2e2727" /><rect x="1010.0" y="684.6" width="13.0" height="11.5" fill="#2e2727" /><rect x="978.0" y="696.1" width="45.0" height="7.0" fill="#8c8484" /><rect x="994.0" y="706.2" width="12.5" height="13.0" fill="#2e2727" /><rect x="995.5" y="707.8" width="9.5" height="11.5" fill="#a69b92" /><rect x="982.0" y="708.2" width="7.0" height="10.0" fill="#8d9496" /><rect x="979.0" y="718.2" width="44.0" height="1.6" fill="#2e2727" /><rect x="979.0" y="728.1" width="44.0" height="1.6" fill="#2e2727" /><rect x="979.0" y="718.2" width="1.1" height="11.5" fill="#2e2727" /><rect x="983.2" y="718.2" width="1.1" height="11.5" fill="#2e2727" /><rect x="987.4" y="718.2" width="1.1" height="11.5" fill="#2e2727" /><rect x="991.6" y="718.2" width="1.1" height="11.5" fill="#2e2727" /><rect x="995.8" y="718.2" width="1.1" height="11.5" fill="#2e2727" /><rect x="1000.0" y="718.2" width="1.1" height="11.5" fill="#2e2727" /><rect x="1004.2" y="718.2" width="1.1" height="11.5" fill="#2e2727" /><rect x="1008.4" y="718.2" width="1.1" height="11.5" fill="#2e2727" /><rect x="1012.6" y="718.2" width="1.1" height="11.5" fill="#2e2727" /><rect x="1016.8" y="718.2" width="1.1" height="11.5" fill="#2e2727" /><rect x="1021.0" y="718.2" width="1.1" height="11.5" fill="#2e2727" /><rect x="1010.0" y="718.2" width="13.0" height="11.5" fill="#2e2727" /><rect x="978.0" y="729.8" width="45.0" height="7.0" fill="#8c8484" /><rect x="994.0" y="739.8" width="12.5" height="13.0" fill="#2e2727" /><rect x="995.5" y="741.3" width="9.5" height="11.5" fill="#a69b92" /><rect x="982.0" y="741.8" width="7.0" height="10.0" fill="#8d9496" /><rect x="979.0" y="751.8" width="44.0" height="1.6" fill="#2e2727" /><rect x="979.0" y="761.7" width="44.0" height="1.6" fill="#2e2727" /><rect x="979.0" y="751.8" width="1.1" height="11.5" fill="#2e2727" /><rect x="983.2" y="751.8" width="1.1" height="11.5" fill="#2e2727" /><rect x="987.4" y="751.8" width="1.1" height="11.5" fill="#2e2727" /><rect x="991.6" y="751.8" width="1.1" height="11.5" fill="#2e2727" /><rect x="995.8" y="751.8" width="1.1" height="11.5" fill="#2e2727" /><rect x="1000.0" y="751.8" width="1.1" height="11.5" fill="#2e2727" /><rect x="1004.2" y="751.8" width="1.1" height="11.5" fill="#2e2727" /><rect x="1008.4" y="751.8" width="1.1" height="11.5" fill="#2e2727" /><rect x="1012.6" y="751.8" width="1.1" height="11.5" fill="#2e2727" /><rect x="1016.8" y="751.8" width="1.1" height="11.5" fill="#2e2727" /><rect x="1021.0" y="751.8" width="1.1" height="11.5" fill="#2e2727" /><rect x="1010.0" y="751.8" width="13.0" height="11.5" fill="#2e2727" /><rect x="978.0" y="763.3" width="45.0" height="7.0" fill="#8c8484" /><rect x="1024.0" y="286.0" width="8.0" height="15.0" fill="#3a3636" /><rect x="1025.0" y="287.0" width="6.0" height="13.0" fill="#a49a90" /><rect x="1024.0" y="317.4" width="8.0" height="15.0" fill="#3a3636" /><rect x="1025.0" y="318.4" width="6.0" height="13.0" fill="#a49a90" /><rect x="1024.0" y="348.7" width="8.0" height="15.0" fill="#3a3636" /><rect x="1025.0" y="349.7" width="6.0" height="13.0" fill="#a49a90" /><rect x="1024.0" y="379.9" width="8.0" height="15.0" fill="#3a3636" /><rect x="1025.0" y="380.9" width="6.0" height="13.0" fill="#a49a90" /><rect x="1024.0" y="411.1" width="8.0" height="15.0" fill="#3a3636" /><rect x="1025.0" y="412.1" width="6.0" height="13.0" fill="#a49a90" /><rect x="1024.0" y="442.2" width="8.0" height="15.0" fill="#3a3636" /><rect x="1025.0" y="443.2" width="6.0" height="13.0" fill="#a49a90" /><rect x="1024.0" y="473.3" width="8.0" height="15.0" fill="#3a3636" /><rect x="1025.0" y="474.3" width="6.0" height="13.0" fill="#a49a90" /><rect x="1024.0" y="504.3" width="8.0" height="15.0" fill="#3a3636" /><rect x="1025.0" y="505.3" width="6.0" height="13.0" fill="#a49a90" /><rect x="1024.0" y="535.3" width="8.0" height="15.0" fill="#3a3636" /><rect x="1025.0" y="536.3" width="6.0" height="13.0" fill="#a49a90" /><rect x="1024.0" y="566.2" width="8.0" height="15.0" fill="#3a3636" /><rect x="1025.0" y="567.2" width="6.0" height="13.0" fill="#a49a90" /><rect x="1024.0" y="597.0" width="8.0" height="15.0" fill="#3a3636" /><rect x="1025.0" y="598.0" width="6.0" height="13.0" fill="#a49a90" /><rect x="1024.0" y="627.8" width="8.0" height="15.0" fill="#3a3636" /><rect x="1025.0" y="628.8" width="6.0" height="13.0" fill="#a49a90" /><rect x="1024.0" y="658.5" width="8.0" height="15.0" fill="#3a3636" /><rect x="1025.0" y="659.5" width="6.0" height="13.0" fill="#a49a90" /><rect x="1024.0" y="689.1" width="8.0" height="15.0" fill="#3a3636" /><rect x="1025.0" y="690.1" width="6.0" height="13.0" fill="#a49a90" /><rect x="1024.0" y="719.7" width="8.0" height="15.0" fill="#3a3636" /><rect x="1025.0" y="720.7" width="6.0" height="13.0" fill="#a49a90" /><rect x="1024.0" y="750.2" width="8.0" height="15.0" fill="#3a3636" /><rect x="1025.0" y="751.2" width="6.0" height="13.0" fill="#a49a90" /><rect x="744.0" y="801.0" width="78.0" height="6.0" fill="#2e2727" /><rect x="758.0" y="780.0" width="21.0" height="16.0" fill="#27282a" /><rect x="759.2" y="781.2" width="18.6" height="13.6" fill="#9aa3a5" /><rect x="759.2" y="788.0" width="18.6" height="7.2" fill="#a89a8e" /><rect x="759.2" y="783.0" width="18.6" height="1.1" fill="#27282a" /><rect x="767.9" y="780.0" width="1.2" height="16.0" fill="#27282a" /><rect x="823.0" y="768.0" width="61.0" height="14.0" fill="#9d9595" /><rect x="820.0" y="786.0" width="58.0" height="37.0" fill="#b3abab" /><rect x="818.0" y="785.0" width="62.0" height="4.0" fill="#c2bbbb" /><rect x="824.0" y="788.0" width="8.0" height="33.0" fill="#9d9595" /><rect x="866.0" y="788.0" width="8.0" height="33.0" fill="#9d9595" /><rect x="839.0" y="792.0" width="22.0" height="25.0" fill="#2d2d2d" /><rect x="841.0" y="794.0" width="18.0" height="23.0" fill="#98a2a6" /><rect x="849.0" y="798.0" width="2.0" height="15.0" fill="#d87a3a" /><rect x="824.0" y="815.0" width="10.0" height="6.0" fill="#2e2727" /><rect x="864.0" y="815.0" width="10.0" height="6.0" fill="#2e2727" /><polygon points="878.0,805.5 972.0,806.0 971.0,812.5 878.0,812.5" fill="#2e2727" /><rect x="936.0" y="786.0" width="23.0" height="16.0" fill="#27282a" /><rect x="937.2" y="787.2" width="20.6" height="13.6" fill="#9aa3a5" /><rect x="937.2" y="794.0" width="20.6" height="7.2" fill="#a89a8e" /><rect x="937.2" y="789.0" width="20.6" height="1.1" fill="#27282a" /><rect x="946.9" y="786.0" width="1.2" height="16.0" fill="#27282a" /><rect x="731.0" y="782.0" width="14.0" height="5.0" fill="#2e2727" /><rect x="938.0" y="558.0" width="1.0" height="40.0" fill="#000" /><rect x="919.0" y="578.0" width="40.0" height="1.0" fill="#000" /><path d="M747,772 V800 H775" stroke="#c8c8c8" stroke-width="1" fill="none"/><text x="746" y="763" font-size="9" fill="#222">z</text><text x="758" y="778" font-size="9" fill="#222">y</text><text x="777" y="786" font-size="9" fill="#fff">x</text><text x="775" y="806" font-size="9" fill="#eee">x</text><g transform="translate(742,844) scale(1)"><path d="M12,26 Q30,17 52,23 Q60,31 53,38.5 Q32,42 14,38.5 Q6,32 12,26 Z" fill="#545457"/><path d="M8,19 L11,12 L17.5,5 L41,5 L49,12 L48.8,24 L35,34 L9,34 L7,28 Z" fill="#aaa8a4"/><path d="M31,13 L41,5 L49,12 L48.8,24 L35,34 L34,19 Z" fill="#9d9b97"/><path d="M17.5,5 L41,5 L31,12.5 L12,12.5 Z" fill="#c4c3c1"/><path d="M19,6.5 L32,6.5 L29,11 L17,11 Z" fill="#7f8698"/><path d="M11,12.8 L30,12.8 L29.5,19.5 L9,19.5 Z" fill="#4a5268"/><path d="M32,12.5 L40,7 L41,13.5 L34,19.5 Z" fill="#3b404d"/><ellipse cx="7.8" cy="25.5" rx="2.2" ry="3" fill="#c9683f"/><ellipse cx="27" cy="26.5" rx="3.3" ry="3.8" fill="#c9683f"/><rect x="31.5" y="25" width="3.2" height="9" fill="#161616"/><rect x="45" y="10" width="2.5" height="8" fill="#161616"/></g><g transform="translate(792.5,846.5) scale(0.97)"><path d="M12,26 Q30,17 52,23 Q60,31 53,38.5 Q32,42 14,38.5 Q6,32 12,26 Z" fill="#545457"/><path d="M8,19 L11,12 L17.5,5 L41,5 L49,12 L48.8,24 L35,34 L9,34 L7,28 Z" fill="#aaa8a4"/><path d="M31,13 L41,5 L49,12 L48.8,24 L35,34 L34,19 Z" fill="#9d9b97"/><path d="M17.5,5 L41,5 L31,12.5 L12,12.5 Z" fill="#c4c3c1"/><path d="M19,6.5 L32,6.5 L29,11 L17,11 Z" fill="#7f8698"/><path d="M11,12.8 L30,12.8 L29.5,19.5 L9,19.5 Z" fill="#4a5268"/><path d="M32,12.5 L40,7 L41,13.5 L34,19.5 Z" fill="#3b404d"/><ellipse cx="7.8" cy="25.5" rx="2.2" ry="3" fill="#c9683f"/><ellipse cx="27" cy="26.5" rx="3.3" ry="3.8" fill="#c9683f"/><rect x="31.5" y="25" width="3.2" height="9" fill="#161616"/><rect x="45" y="10" width="2.5" height="8" fill="#161616"/></g></svg><div class="a" style="left:1739px;top:205px;width:1px;height:747px;background:#d6d6d6"></div><div class="a" style="left:140px;top:952px;width:1600px;height:20px;background:#f0f0f0"></div><div class="a" style="left:140px;top:972px;width:1600px;height:1px;background:#d8d8d8"></div><svg style="left:143px;top:954px" width="16" height="16" viewBox="0 0 16 16" fill="none" stroke="#2b2b2b" stroke-width="1.2"><path d="M3,8 A5,5 0 1 1 8,13 M1,5 L3,8 L6,6 M5,13 L1,16" stroke="#333"/></svg><svg style="left:166px;top:954px" width="16" height="16" viewBox="0 0 16 16" fill="none" stroke="#2b2b2b" stroke-width="1.2"><path d="M13,8 A5,5 0 1 0 8,13 M15,5 L13,8 L10,6 M11,13 L15,16" stroke="#bbb"/></svg><svg style="left:189px;top:953px" width="17" height="17" viewBox="0 0 17 17" fill="none" stroke="#2b2b2b" stroke-width="1.2"><circle cx="7" cy="7" r="5.5" stroke="#333"/><path d="M7,4 V10 M4,7 H10 M11,11 L16,16" stroke="#333" stroke-width="1.3"/></svg><div class="a" style="left:211px;top:954px;width:1px;height:17px;background:#bbb"></div><div class="a" style="left:214px;top:953px;width:23px;height:18px;background:#cce4f7;border-radius:2px"></div><svg style="left:217px;top:955px" width="18" height="14" viewBox="0 0 18 14" fill="none" stroke="#2b2b2b" stroke-width="1.2"><path d="M3,9 C0,5 5,2 10,3 C16,4 16,9 11,10 M4,10 L6,12 L8,9" stroke="#1f5fbf" stroke-width="1.3"/></svg><svg style="left:243px;top:954px" width="12" height="16" viewBox="0 0 12 16" fill="none" stroke="#2b2b2b" stroke-width="1.2"><circle cx="6" cy="2.5" r="1.6" fill="#333" stroke="none"/><path d="M6,5 V10 M2,8 L6,5 L10,8 M6,10 L3,15 M6,10 L9,15" stroke="#333"/></svg><div class="a" style="left:262px;top:954px;width:1px;height:17px;background:#bbb"></div><svg style="left:268px;top:953px" width="18" height="18" viewBox="0 0 18 18" fill="none" stroke="#2b2b2b" stroke-width="1.2"><circle cx="7.5" cy="7.5" r="6" stroke="#333"/><path d="M12,12 L17,17" stroke="#333" stroke-width="1.5"/><circle cx="7.5" cy="7.5" r="2" stroke="#333"/></svg><div class="t" style="left:334px;top:956.4px;font-size:11px;color:#777;line-height:13.2px;">Н/Д</div><svg style="left:398px;top:958.5px" width="3.5" height="7"><path d="M0,0 L3.5,3.5 L0,7 Z" fill="#888"/></svg><div class="a" style="left:410px;top:954px;width:1px;height:17px;background:#bbb"></div><svg style="left:418px;top:954px" width="16" height="16" viewBox="0 0 16 16" fill="none" stroke="#2b2b2b" stroke-width="1.2"><path d="M2,7 L7,2 L12,7 L7,12 Z M10,10 L14,14 M12,14 h2 v-2" stroke="#bbb"/></svg><div class="t" style="left:482px;top:956.4px;font-size:11px;color:#777;line-height:13.2px;">Н/Д</div><svg style="left:546px;top:958.5px" width="3.5" height="7"><path d="M0,0 L3.5,3.5 L0,7 Z" fill="#888"/></svg><div class="a" style="left:558px;top:954px;width:1px;height:17px;background:#bbb"></div><svg style="left:564px;top:956px" width="17" height="11" viewBox="0 0 17 11" fill="none" stroke="#2b2b2b" stroke-width="1.2"><rect x="0.5" y="2.5" width="15" height="6" stroke="#333"/><path d="M3,3 v2 M6,3 v2 M9,3 v2 M12,3 v2" stroke="#333"/></svg><div class="t" style="left:626px;top:956.4px;font-size:11px;color:#000;line-height:13.2px;">1:100</div><svg style="left:695px;top:958.5px" width="3.5" height="7"><path d="M0,0 L3.5,3.5 L0,7 Z" fill="#222"/></svg><div class="a" style="left:707px;top:954px;width:1px;height:17px;background:#bbb"></div><svg style="left:713px;top:954px" width="16" height="15" viewBox="0 0 16 15" fill="none" stroke="#2b2b2b" stroke-width="1.2"><path d="M1,4 L8,1 L15,4 L8,7 Z M1,8 L8,11 L15,8 M1,12 L8,15 L15,12" stroke="#333"/></svg><div class="t" style="left:761px;top:956.4px;font-size:11px;color:#000;line-height:13.2px;">02 Чертеж</div><svg style="left:843px;top:958.5px" width="3.5" height="7"><path d="M0,0 L3.5,3.5 L0,7 Z" fill="#222"/></svg><div class="a" style="left:855px;top:954px;width:1px;height:17px;background:#bbb"></div><svg style="left:862px;top:955px" width="16" height="13" viewBox="0 0 16 13" fill="none" stroke="#2b2b2b" stroke-width="1.2"><rect x="0.5" y="0.5" width="14" height="11" stroke="#333"/><path d="M3,3 L12,3 M2,9 L6,3 M6,9 L10,3 M10,9 L13,5" stroke="#333"/></svg><div class="t" style="left:906px;top:956.4px;font-size:11px;color:#000;line-height:13.2px;">Вся Модель</div><svg style="left:991px;top:958.5px" width="3.5" height="7"><path d="M0,0 L3.5,3.5 L0,7 Z" fill="#222"/></svg><div class="a" style="left:1002px;top:954px;width:1px;height:17px;background:#bbb"></div><svg style="left:1012px;top:954px" width="10" height="16" viewBox="0 0 10 16" fill="none" stroke="#2b2b2b" stroke-width="1.2"><path d="M1,1 V9 L5,15 L9,9 V1 M5,8 V13" stroke="#333"/></svg><div class="t" style="left:1033px;top:956.4px;font-size:11px;color:#000;line-height:13.2px;">01 Архитектурны...</div><svg style="left:1138px;top:958.5px" width="3.5" height="7"><path d="M0,0 L3.5,3.5 L0,7 Z" fill="#222"/></svg><div class="a" style="left:1150px;top:954px;width:1px;height:17px;background:#bbb"></div><svg style="left:1158px;top:955px" width="16" height="13" viewBox="0 0 16 13" fill="none" stroke="#2b2b2b" stroke-width="1.2"><rect x="0.5" y="0.5" width="14" height="11" stroke="#333"/><rect x="3.5" y="3.5" width="8" height="5" stroke="#333"/></svg><div class="t" style="left:1183px;top:956.4px;font-size:11px;color:#000;line-height:13.2px;">04 Проект - Планы</div><svg style="left:1287px;top:958.5px" width="3.5" height="7"><path d="M0,0 L3.5,3.5 L0,7 Z" fill="#222"/></svg><div class="a" style="left:1296px;top:954px;width:1px;height:17px;background:#bbb"></div><svg style="left:1305px;top:954px" width="16" height="16" viewBox="0 0 16 16" fill="none" stroke="#2b2b2b" stroke-width="1.2"><path d="M1,4 H8 V14 H1 Z M5,1 H12 M12,1 V6 M10,8 h5 v6 h-5 z" stroke="#333"/></svg><div class="t" style="left:1350px;top:956.4px;font-size:11px;color:#000;line-height:13.2px;">Без Замены</div><svg style="left:1435px;top:958.5px" width="3.5" height="7"><path d="M0,0 L3.5,3.5 L0,7 Z" fill="#222"/></svg><div class="a" style="left:1446px;top:954px;width:1px;height:17px;background:#bbb"></div><svg style="left:1454px;top:954px" width="16" height="16" viewBox="0 0 16 16" fill="none" stroke="#2b2b2b" stroke-width="1.2"><path d="M1,15 L7,2 L14,8 V15 Z M7,2 V15 M9,10 h3 v5" stroke="#333"/></svg><div class="t" style="left:1477px;top:956.4px;font-size:11px;color:#000;line-height:13.2px;">00 Показать Все Э...</div><svg style="left:1582px;top:958.5px" width="3.5" height="7"><path d="M0,0 L3.5,3.5 L0,7 Z" fill="#222"/></svg><div class="a" style="left:1594px;top:954px;width:1px;height:17px;background:#bbb"></div><svg style="left:1602px;top:954px" width="15" height="15" viewBox="0 0 15 15" fill="none" stroke="#2b2b2b" stroke-width="1.2"><path d="M1,5 L5,1 H13 V9 L9,13 H1 Z M1,5 H9 V13 M9,5 L13,1" stroke="#333"/></svg><div class="t" style="left:1625px;top:956.4px;font-size:11px;color:#000;line-height:13.2px;">Упрощенная Окр...</div><svg style="left:1731px;top:958.5px" width="3.5" height="7"><path d="M0,0 L3.5,3.5 L0,7 Z" fill="#222"/></svg><div class="a" style="left:1740px;top:183px;width:180px;height:790px;background:#f0f0f0"></div><div class="a" style="left:1796px;top:188px;width:68px;height:1px;background:#777"></div><div class="a" style="left:1742px;top:193px;width:30px;height:28px;background:#cce4f7;border:1px solid #b5d8f5;border-radius:3px"></div><svg style="left:1740px;top:185px" width="40" height="40" viewBox="0 0 40 40" fill="none" stroke="#2b2b2b" stroke-width="1.2"><path d="M8,29.5 V23 L13.6,17.3 L18.7,23 V29.5 Z M13.6,17.3 L22,19.7 L25.8,23.4 V29.5 H18.7 M18.7,23 L25.8,23.4" stroke="#1d2b3a" stroke-width="1.2" stroke-linejoin="round"/></svg><div class="a" style="left:1777px;top:199px;width:1px;height:18px;background:#aaa"></div><svg style="left:1785px;top:185px" width="30" height="40" viewBox="0 0 30 40" fill="none" stroke="#2b2b2b" stroke-width="1.2"><rect x="5.5" y="16.5" width="17" height="13" rx="1" stroke="#222" stroke-width="1.2"/><path d="M7.5,27.5 V23 L11.5,19 L15.5,23 V27.5 Z M11.5,19 L17.5,21 L20.5,24 V27.5 H15.5 M15.5,23 L20.5,24" stroke="#222" stroke-width="1"/></svg><svg style="left:1815px;top:185px" width="30" height="40" viewBox="0 0 30 40" fill="none" stroke="#2b2b2b" stroke-width="1.2"><path d="M5,29.5 V19.5 L10,15 V18.5 H23 V29.5 Z M10,18.5 L5.5,28 M16.5,26 H23" stroke="#222" stroke-width="1.2" stroke-linejoin="round"/></svg><svg style="left:1845px;top:185px" width="30" height="40" viewBox="0 0 30 40" fill="none" stroke="#2b2b2b" stroke-width="1.2"><rect x="6.5" y="15.5" width="11" height="12" rx="2" stroke="#222" stroke-width="1.2"/><path d="M19.5,19 V29 Q19.5,30.5 18,30.5 H9 M21.5,21 V30.5 Q21.5,32 20,32 H11" stroke="#222" stroke-width="1.2"/><path d="M6.5,19 H12.5 V21 H6.5" stroke="#222" stroke-width="1.2"/></svg><div class="a" style="left:1884.5px;top:197.5px;width:31px;height:20px;background:#fcfcfc;border:1px solid #d6d6d6;border-radius:4px"></div><svg style="left:1890px;top:200px" width="14" height="12" viewBox="0 0 14 12" fill="none" stroke="#2b2b2b" stroke-width="1.2"><path d="M1,3.5 H13 M1,7.5 H13 M1,11.5 H13" stroke="#222" stroke-width="1.1"/></svg><svg style="left:1909px;top:204.3px" width="3.2" height="6.4"><path d="M0,0 L3.2,3.2 L0,6.4 Z" fill="#222"/></svg><div class="a" style="left:1742px;top:229px;width:176px;height:22px;background:#ffffff;border-bottom:1px solid #777"></div><div class="t" style="left:1746px;top:234.4px;font-size:11px;color:#555;line-height:13.2px;letter-spacing:0.3px">Поиск по Карте Проекта</div><div class="a" style="left:1740px;top:252px;width:163px;height:646px;background:#ffffff"></div><svg style="left:1782px;top:256px" width="17" height="17" viewBox="0 0 17 17" fill="none" stroke="#2b2b2b" stroke-width="1.2"><path d="M0.5,0.5 H6.5 V6.5 H15.5 V15.5 H0.5 Z M2.5,4 L4,1" stroke="#222" stroke-width="1"/></svg><div class="t" style="left:1804px;top:258.4px;font-size:11px;color:#000;line-height:13.2px;">16. Этаж</div><svg style="left:1782px;top:278px" width="17" height="17" viewBox="0 0 17 17" fill="none" stroke="#2b2b2b" stroke-width="1.2"><path d="M0.5,0.5 H6.5 V6.5 H15.5 V15.5 H0.5 Z M2.5,4 L4,1" stroke="#222" stroke-width="1"/></svg><div class="t" style="left:1804px;top:280.4px;font-size:11px;color:#000;line-height:13.2px;">15. Этаж</div><svg style="left:1782px;top:300px" width="17" height="17" viewBox="0 0 17 17" fill="none" stroke="#2b2b2b" stroke-width="1.2"><path d="M0.5,0.5 H6.5 V6.5 H15.5 V15.5 H0.5 Z M2.5,4 L4,1" stroke="#222" stroke-width="1"/></svg><div class="t" style="left:1804px;top:302.4px;font-size:11px;color:#000;line-height:13.2px;">14. Этаж</div><svg style="left:1782px;top:322px" width="17" height="17" viewBox="0 0 17 17" fill="none" stroke="#2b2b2b" stroke-width="1.2"><path d="M0.5,0.5 H6.5 V6.5 H15.5 V15.5 H0.5 Z M2.5,4 L4,1" stroke="#222" stroke-width="1"/></svg><div class="t" style="left:1804px;top:324.4px;font-size:11px;color:#000;line-height:13.2px;">13. Этаж</div><svg style="left:1782px;top:344px" width="17" height="17" viewBox="0 0 17 17" fill="none" stroke="#2b2b2b" stroke-width="1.2"><path d="M0.5,0.5 H6.5 V6.5 H15.5 V15.5 H0.5 Z M2.5,4 L4,1" stroke="#222" stroke-width="1"/></svg><div class="t" style="left:1804px;top:346.4px;font-size:11px;color:#000;line-height:13.2px;">12. Этаж</div><svg style="left:1782px;top:366px" width="17" height="17" viewBox="0 0 17 17" fill="none" stroke="#2b2b2b" stroke-width="1.2"><path d="M0.5,0.5 H6.5 V6.5 H15.5 V15.5 H0.5 Z M2.5,4 L4,1" stroke="#222" stroke-width="1"/></svg><div class="t" style="left:1804px;top:368.4px;font-size:11px;color:#000;line-height:13.2px;">11. Этаж</div><svg style="left:1782px;top:388px" width="17" height="17" viewBox="0 0 17 17" fill="none" stroke="#2b2b2b" stroke-width="1.2"><path d="M0.5,0.5 H6.5 V6.5 H15.5 V15.5 H0.5 Z M2.5,4 L4,1" stroke="#222" stroke-width="1"/></svg><div class="t" style="left:1804px;top:390.4px;font-size:11px;color:#000;line-height:13.2px;">10. Этаж</div><svg style="left:1782px;top:410px" width="17" height="17" viewBox="0 0 17 17" fill="none" stroke="#2b2b2b" stroke-width="1.2"><path d="M0.5,0.5 H6.5 V6.5 H15.5 V15.5 H0.5 Z M2.5,4 L4,1" stroke="#222" stroke-width="1"/></svg><div class="t" style="left:1804px;top:412.4px;font-size:11px;color:#000;line-height:13.2px;">9. Этаж</div><svg style="left:1782px;top:432px" width="17" height="17" viewBox="0 0 17 17" fill="none" stroke="#2b2b2b" stroke-width="1.2"><path d="M0.5,0.5 H6.5 V6.5 H15.5 V15.5 H0.5 Z M2.5,4 L4,1" stroke="#222" stroke-width="1"/></svg><div class="t" style="left:1804px;top:434.4px;font-size:11px;color:#000;line-height:13.2px;">8. Этаж</div><svg style="left:1782px;top:454px" width="17" height="17" viewBox="0 0 17 17" fill="none" stroke="#2b2b2b" stroke-width="1.2"><path d="M0.5,0.5 H6.5 V6.5 H15.5 V15.5 H0.5 Z M2.5,4 L4,1" stroke="#222" stroke-width="1"/></svg><div class="t" style="left:1804px;top:456.4px;font-size:11px;color:#000;line-height:13.2px;">7. Этаж</div><svg style="left:1782px;top:476px" width="17" height="17" viewBox="0 0 17 17" fill="none" stroke="#2b2b2b" stroke-width="1.2"><path d="M0.5,0.5 H6.5 V6.5 H15.5 V15.5 H0.5 Z M2.5,4 L4,1" stroke="#222" stroke-width="1"/></svg><div class="t" style="left:1804px;top:478.4px;font-size:11px;color:#000;line-height:13.2px;">6. Этаж</div><svg style="left:1782px;top:498px" width="17" height="17" viewBox="0 0 17 17" fill="none" stroke="#2b2b2b" stroke-width="1.2"><path d="M0.5,0.5 H6.5 V6.5 H15.5 V15.5 H0.5 Z M2.5,4 L4,1" stroke="#222" stroke-width="1"/></svg><div class="t" style="left:1804px;top:500.4px;font-size:11px;color:#000;line-height:13.2px;">5. Этаж</div><svg style="left:1782px;top:520px" width="17" height="17" viewBox="0 0 17 17" fill="none" stroke="#2b2b2b" stroke-width="1.2"><path d="M0.5,0.5 H6.5 V6.5 H15.5 V15.5 H0.5 Z M2.5,4 L4,1" stroke="#222" stroke-width="1"/></svg><div class="t" style="left:1804px;top:522.4px;font-size:11px;color:#000;line-height:13.2px;">4. Этаж</div><svg style="left:1782px;top:542px" width="17" height="17" viewBox="0 0 17 17" fill="none" stroke="#2b2b2b" stroke-width="1.2"><path d="M0.5,0.5 H6.5 V6.5 H15.5 V15.5 H0.5 Z M2.5,4 L4,1" stroke="#222" stroke-width="1"/></svg><div class="t" style="left:1804px;top:544.4px;font-size:11px;color:#000;line-height:13.2px;">3. 3-й этаж</div><svg style="left:1782px;top:564px" width="17" height="17" viewBox="0 0 17 17" fill="none" stroke="#2b2b2b" stroke-width="1.2"><path d="M0.5,0.5 H6.5 V6.5 H15.5 V15.5 H0.5 Z M2.5,4 L4,1" stroke="#222" stroke-width="1"/></svg><div class="t" style="left:1804px;top:566.4px;font-size:11px;color:#000;line-height:13.2px;">2. 2-й этаж</div><svg style="left:1782px;top:586px" width="17" height="17" viewBox="0 0 17 17" fill="none" stroke="#2b2b2b" stroke-width="1.2"><path d="M0.5,0.5 H6.5 V6.5 H15.5 V15.5 H0.5 Z M2.5,4 L4,1" stroke="#222" stroke-width="1"/></svg><div class="t" style="left:1804px;top:588.4px;font-size:11px;color:#000;line-height:13.2px;">1. 1-й этаж</div><svg style="left:1757px;top:613px" width="10" height="6" viewBox="0 0 10 6" fill="none" stroke="#2b2b2b" stroke-width="1.2"><path d="M1,1 L5,5 L9,1" stroke="#222" stroke-width="1.4"/></svg><svg style="left:1772px;top:608px" width="17" height="16" viewBox="0 0 17 16" fill="none" stroke="#2b2b2b" stroke-width="1.2"><path d="M1,14 V6 L8,1 L15,6 V14 Z" stroke="#222" stroke-width="1" fill="#d6d6d6"/><path d="M1,8 H15" stroke="#222" stroke-width="1"/></svg><div class="t" style="left:1794px;top:610.4px;font-size:11px;color:#000;line-height:13.2px;">Разрезы</div><svg style="left:1782px;top:630px" width="17" height="16" viewBox="0 0 17 16" fill="none" stroke="#2b2b2b" stroke-width="1.2"><path d="M1,14 V6 L8,1 L15,6 V14 Z M1,8 H15" stroke="#222" stroke-width="1"/></svg><div class="t" style="left:1804px;top:632.4px;font-size:11px;color:#000;line-height:13.2px;">1 Разрез (Автомати</div><svg style="left:1757px;top:657px" width="10" height="6" viewBox="0 0 10 6" fill="none" stroke="#2b2b2b" stroke-width="1.2"><path d="M1,1 L5,5 L9,1" stroke="#222" stroke-width="1.4"/></svg><svg style="left:1772px;top:652px" width="17" height="16" viewBox="0 0 17 16" fill="none" stroke="#2b2b2b" stroke-width="1.2"><path d="M1,14 V6 L8,1 L15,6 V14 Z" stroke="#222" stroke-width="1" fill="#d6d6d6"/></svg><div class="t" style="left:1794px;top:654.4px;font-size:11px;color:#000;line-height:13.2px;">Фасады</div><svg style="left:1782px;top:674px" width="17" height="16" viewBox="0 0 17 16" fill="none" stroke="#2b2b2b" stroke-width="1.2"><path d="M1,14 V6 L8,1 L15,6 V14 Z" stroke="#222" stroke-width="1"/></svg><div class="t" style="left:1804px;top:676.4px;font-size:11px;color:#000;line-height:13.2px;">Восточный Фасад (</div><svg style="left:1782px;top:696px" width="17" height="16" viewBox="0 0 17 16" fill="none" stroke="#2b2b2b" stroke-width="1.2"><path d="M1,14 V6 L8,1 L15,6 V14 Z" stroke="#222" stroke-width="1"/></svg><div class="t" style="left:1804px;top:698.4px;font-size:11px;color:#000;line-height:13.2px;">Западный Фасад (А</div><svg style="left:1782px;top:718px" width="17" height="16" viewBox="0 0 17 16" fill="none" stroke="#2b2b2b" stroke-width="1.2"><path d="M1,14 V6 L8,1 L15,6 V14 Z" stroke="#222" stroke-width="1"/></svg><div class="t" style="left:1804px;top:720.4px;font-size:11px;color:#000;line-height:13.2px;">Северный Фасад (А</div><svg style="left:1782px;top:740px" width="17" height="16" viewBox="0 0 17 16" fill="none" stroke="#2b2b2b" stroke-width="1.2"><path d="M1,14 V6 L8,1 L15,6 V14 Z" stroke="#222" stroke-width="1"/></svg><div class="t" style="left:1804px;top:742.4px;font-size:11px;color:#000;line-height:13.2px;">Южный Фасад (Авт</div><svg style="left:1771px;top:762px" width="18" height="16" viewBox="0 0 18 16" fill="none" stroke="#2b2b2b" stroke-width="1.2"><rect x="0.5" y="0.5" width="16" height="14" stroke="#222"/><path d="M4,14 V4 H8 V14 M10,4 H14 V8 H10 Z" stroke="#222"/></svg><div class="t" style="left:1794px;top:764.4px;font-size:11px;color:#000;line-height:13.2px;">Развертки</div><svg style="left:1771px;top:784px" width="18" height="16" viewBox="0 0 18 16" fill="none" stroke="#2b2b2b" stroke-width="1.2"><path d="M0.5,0.5 H16.5 V14.5 H0.5 Z M4,12 L12,4 L14,6 L6,13 Z" stroke="#222"/></svg><div class="t" style="left:1794px;top:786.4px;font-size:11px;color:#000;line-height:13.2px;">Рабочие Листы</div><svg style="left:1771px;top:806px" width="18" height="17" viewBox="0 0 18 17" fill="none" stroke="#2b2b2b" stroke-width="1.2"><circle cx="8.5" cy="8.5" r="7.5" stroke="#222"/><path d="M6,2 V15 M6,8 H15 M10,8 V14" stroke="#222"/></svg><div class="t" style="left:1794px;top:808.4px;font-size:11px;color:#000;line-height:13.2px;">Детали</div><svg style="left:1771px;top:828px" width="18" height="16" viewBox="0 0 18 16" fill="none" stroke="#2b2b2b" stroke-width="1.2"><path d="M0.5,0.5 H16.5 V14.5 H0.5 Z" stroke="#222"/><rect x="4.5" y="5.5" width="7" height="6" stroke="#222"/><path d="M6,5 L8,3 H13 V9 L11.5,11" stroke="#222"/></svg><div class="t" style="left:1794px;top:830.4px;font-size:11px;color:#000;line-height:13.2px;">3D-документы</div><svg style="left:1757px;top:855px" width="10" height="6" viewBox="0 0 10 6" fill="none" stroke="#2b2b2b" stroke-width="1.2"><path d="M1,1 L5,5 L9,1" stroke="#222" stroke-width="1.4"/></svg><svg style="left:1772px;top:850px" width="16" height="17" viewBox="0 0 16 17" fill="none" stroke="#2b2b2b" stroke-width="1.2"><path d="M1,3 L12.5,1 L15.5,3.5 V14.5 L12.5,17 L1,14.5 Z M12.5,1 V17" stroke="#222" stroke-width="1"/></svg><div class="t" style="left:1794px;top:852.4px;font-size:11px;color:#000;line-height:13.2px;">3D</div><div class="a" style="left:1740px;top:869px;width:163px;height:22px;background:#dcdcdc;border:1px solid #9c9c9c"></div><svg style="left:1782px;top:872px" width="16" height="17" viewBox="0 0 16 17" fill="none" stroke="#2b2b2b" stroke-width="1.2"><path d="M1,3 L12.5,1 L15.5,3.5 V14.5 L12.5,17 L1,14.5 Z M12.5,1 V17" stroke="#222" stroke-width="1"/></svg><div class="t" style="left:1804px;top:874.4px;font-size:11px;color:#111;line-height:13.2px;font-weight:bold">Общая Перспектив</div><div class="a" style="left:1903px;top:252px;width:15px;height:646px;background:#f0f0f0"></div><div class="a" style="left:1911px;top:303px;width:2px;height:328px;background:#6d6d6d"></div><svg style="left:1782px;top:894px" width="16" height="5" viewBox="0 0 16 5" fill="none" stroke="#2b2b2b" stroke-width="1.2"><path d="M1,4 L8,0.5 L15,4" stroke="#222" stroke-width="1"/></svg><div class="a" style="left:1757px;top:906px;width:53px;height:1px;background:#777"></div><svg style="left:1750px;top:923px" width="15" height="15" viewBox="0 0 15 15" fill="none" stroke="#2b2b2b" stroke-width="1.2"><circle cx="7" cy="7" r="6" stroke="#a9c3e8"/><path d="M7,3 V11 M3,7 H11" stroke="#a9c3e8"/></svg><svg style="left:1780px;top:924px" width="15" height="13" viewBox="0 0 15 13" fill="none" stroke="#2b2b2b" stroke-width="1.2"><rect x="0.5" y="0.5" width="13" height="11" stroke="#2f6fd0"/><path d="M3,4 h1 M3,8 h1 M6,4 H11 M6,8 H11" stroke="#2f6fd0"/></svg><svg style="left:1810px;top:924px" width="14" height="14" viewBox="0 0 14 14" fill="none" stroke="#2b2b2b" stroke-width="1.2"><path d="M1,1 L13,13 M13,1 L1,13" stroke="#ec8f80" stroke-width="1.5"/></svg><div class="a" style="left:1742px;top:948px;width:176px;height:22px;background:#dadada;border-radius:3px"></div><svg style="left:1751px;top:955.5px" width="3.5" height="7"><path d="M0,0 L3.5,3.5 L0,7 Z" fill="#222"/></svg><div class="t" style="left:1767px;top:953.4px;font-size:11px;color:#000;line-height:13.2px;">Свойства</div><div class="a" style="left:0px;top:973px;width:1920px;height:35px;background:#f0f0f0"></div><div class="a" style="left:0px;top:1009px;width:1920px;height:1px;background:#dadada"></div><div class="a" style="left:145px;top:985px;width:1px;height:16px;background:#888"></div><svg style="left:154px;top:977px" width="22" height="24" viewBox="0 0 22 24" fill="none" stroke="#2b2b2b" stroke-width="1.2"><path d="M2,8 Q9,1 16,8 Q9,14 2,8 Z" stroke="#333" stroke-width="1.1"/><circle cx="9" cy="8" r="2" fill="#333" stroke="none"/><path d="M2,20 Q9,13 16,20 M3,22 L15,15 M16,5 Q20,7 18,11 M18,17 Q20,15 19,13" stroke="#333" stroke-width="1.1"/></svg><svg style="left:184px;top:977px" width="22" height="24" viewBox="0 0 22 24" fill="none" stroke="#2b2b2b" stroke-width="1.2"><rect x="1.5" y="13.5" width="8" height="7" rx="1" stroke="#333"/><path d="M3,13 V10 Q5.5,6 8,10 V13" stroke="#333"/><rect x="11.5" y="6.5" width="7" height="7" rx="1" stroke="#333"/><path d="M12.5,6 V3 Q15,0 17.5,3 V6" stroke="#333"/><path d="M13,18 Q16,21 19,17" stroke="#333"/></svg><div class="a" style="left:212px;top:977px;width:1px;height:27px;background:#888"></div><div class="t" style="left:215px;top:978.4px;font-size:11px;color:#000;line-height:13.2px;width:90px;overflow:hidden">Слои Выбр.Эл-ов</div><svg style="left:222px;top:991px" width="17" height="14" viewBox="0 0 17 14" fill="none" stroke="#2b2b2b" stroke-width="1.2"><path d="M1,7 Q8,0 15,7 Q8,13 1,7 Z M2,12 L14,2" stroke="#bbb"/></svg><svg style="left:256px;top:991px" width="8" height="10" viewBox="0 0 8 10" fill="none" stroke="#2b2b2b" stroke-width="1.2"><rect x="0.5" y="4.5" width="7" height="5" stroke="#aaa"/><path d="M2,4 V2 Q4,0 6,2 V4" stroke="#aaa"/></svg><svg style="left:284px;top:991px" width="11" height="11" viewBox="0 0 11 11" fill="none" stroke="#2b2b2b" stroke-width="1.2"><rect x="0.5" y="4.5" width="7" height="5" stroke="#bbb"/><path d="M4,4 V2 Q6,0 9,2" stroke="#bbb"/></svg><div class="a" style="left:307px;top:977px;width:1px;height:27px;background:#888"></div><div class="t" style="left:310px;top:978.4px;font-size:11px;color:#000;line-height:13.2px;">Всех Слоев:</div><svg style="left:316px;top:991px" width="17" height="14" viewBox="0 0 17 14" fill="none" stroke="#2b2b2b" stroke-width="1.2"><path d="M1,7 Q8,0 15,7 Q8,13 1,7 Z M2,12 L14,2" stroke="#333"/></svg><svg style="left:351px;top:991px" width="8" height="10" viewBox="0 0 8 10" fill="none" stroke="#2b2b2b" stroke-width="1.2"><rect x="0.5" y="4.5" width="7" height="5" stroke="#333"/><path d="M2,4 V2 Q4,0 6,2 V4" stroke="#333"/></svg><div class="a" style="left:402px;top:977px;width:1px;height:27px;background:#888"></div><svg style="left:414px;top:978px" width="14" height="12" viewBox="0 0 14 12" fill="none" stroke="#2b2b2b" stroke-width="1.2"><path d="M2,8 Q4,2 11,4 M9,1 L12,4 L9,7" stroke="#bbb"/></svg><svg style="left:414px;top:992px" width="14" height="12" viewBox="0 0 14 12" fill="none" stroke="#2b2b2b" stroke-width="1.2"><path d="M12,4 Q10,10 3,8 M5,5 L2,8 L5,11" stroke="#bbb"/></svg><div class="a" style="left:475px;top:977px;width:1px;height:27px;background:#888"></div><div class="a" style="left:478px;top:974px;width:79px;height:30px;background:#cce4f7;border:1px solid #a5cff0;border-radius:3px"></div><svg style="left:482px;top:980px" width="19" height="19" viewBox="0 0 19 19" fill="none" stroke="#2b2b2b" stroke-width="1.2"><rect x="0.5" y="0.5" width="17" height="17" stroke="#222"/><path d="M0.5,4 H17.5" stroke="#222"/><path d="M4,9 L7,6 H14 V12 L11,15 H4 Z M4,9 H11 V15 M11,9 L14,6" stroke="#222"/></svg><div class="t" style="left:504px;top:983.7px;font-size:13px;color:#000;line-height:15.6px;">3D-окно</div><div class="a" style="left:560px;top:977px;width:1px;height:27px;background:#888"></div><div class="a" style="left:566px;top:974px;width:27px;height:30px;background:#cce4f7;border:1px solid #a5cff0;border-radius:3px"></div><svg style="left:570px;top:980px" width="19" height="19" viewBox="0 0 19 19" fill="none" stroke="#2b2b2b" stroke-width="1.2"><path d="M2,3.5 L13.5,1 L17,3.5 V15.5 L13.5,18 L2,15.5 Z M13.5,1 V18" stroke="#222" stroke-width="1.2"/></svg><svg style="left:598px;top:980px" width="19" height="19" viewBox="0 0 19 19" fill="none" stroke="#2b2b2b" stroke-width="1.2"><path d="M2,5 L9,1 L17,4 V14 L10,18 L2,15 Z M2,5 L10,8 L17,4 M10,8 V18" stroke="#222" stroke-width="1.2"/></svg><svg style="left:630px;top:979px" width="20" height="21" viewBox="0 0 20 21" fill="none" stroke="#2b2b2b" stroke-width="1.2"><path d="M9,1 V13 L2,18 M9,13 L18,16 M6,4 L9,1 L12,4" stroke="#222" stroke-width="1.2"/><path d="M6,9 L12,7 L14,11 L8,13 Z" stroke="#222"/></svg><svg style="left:661px;top:988px" width="8" height="4"><path d="M0,0 L8,0 L4,4 Z" fill="#222"/></svg><div class="a" style="left:676px;top:977px;width:1px;height:27px;background:#888"></div><svg style="left:686px;top:979px" width="13" height="20" viewBox="0 0 13 20" fill="none" stroke="#2b2b2b" stroke-width="1.2"><circle cx="7" cy="2.5" r="1.8" fill="#222" stroke="none"/><path d="M7,5 V12 L3,19 M7,12 L11,19 M3,9 L7,5 L11,9" stroke="#222" stroke-width="1.2"/></svg><div class="a" style="left:710px;top:974px;width:28px;height:30px;background:#cce4f7;border:1px solid #a5cff0;border-radius:3px"></div><svg style="left:713px;top:979px" width="22" height="20" viewBox="0 0 22 20" fill="none" stroke="#2b2b2b" stroke-width="1.2"><path d="M4,7 L10,3 L18,6 L18,11 L11,14 L4,11 Z M4,7 L11,10 L18,6 M11,10 V14" stroke="#1f5fbf" stroke-width="1.1"/><path d="M2,11 C1,16 8,18 14,16 M12,14 L15,16 L12,18" stroke="#1f5fbf" stroke-width="1.1"/></svg><div class="a" style="left:741px;top:977px;width:1px;height:27px;background:#888"></div><svg style="left:749px;top:980px" width="20" height="20" viewBox="0 0 20 20" fill="none" stroke="#2b2b2b" stroke-width="1.2"><circle cx="10" cy="10.5" r="6.5" stroke="#222" stroke-width="1.1"/><path d="M6.5,1.5 V19.5 M13.5,1.5 V19.5 M1,7 H19 M1,14 H19" stroke="#222" stroke-width="1.1"/><circle cx="10" cy="10.5" r="2" fill="#f0f0f0" stroke="#222"/></svg><svg style="left:778px;top:979px" width="20" height="20" viewBox="0 0 20 20" fill="none" stroke="#2b2b2b" stroke-width="1.2"><path d="M1,5 V1 H5 M15,1 H19 V5 M19,15 V19 H15 M5,19 H1 V15 M5,16 V9 L10,4 L15,9 V16 Z M8,16 V11 H12 V16" stroke="#222"/></svg><svg style="left:807px;top:979px" width="20" height="20" viewBox="0 0 20 20" fill="none" stroke="#2b2b2b" stroke-width="1.2"><circle cx="10" cy="7" r="4" stroke="#222"/><circle cx="10" cy="7" r="1.5" fill="#222" stroke="none"/><path d="M1,7 H5 M15,7 H19 M10,11 V14 M5,19 L10,14 L15,19 M7,14 H13" stroke="#222"/></svg><svg style="left:837px;top:979px" width="20" height="20" viewBox="0 0 20 20" fill="none" stroke="#2b2b2b" stroke-width="1.2"><path d="M4,12 L10,8 L16,12 V17 L10,19 L4,17 Z" stroke="#222"/><path d="M3,7 Q10,1 17,7 M10,1 V6 M7,4 L10,6 L13,4" stroke="#2f6fd0"/></svg><svg style="left:866px;top:979px" width="20" height="20" viewBox="0 0 20 20" fill="none" stroke="#2b2b2b" stroke-width="1.2"><path d="M5,6 L10,4 L15,6 V14 L10,16 L5,14 Z M10,4 V16" stroke="#aaa"/><path d="M1,10 H5 M15,10 H19" stroke="#aaa"/></svg><div class="a" style="left:894px;top:977px;width:1px;height:27px;background:#888"></div><svg style="left:906px;top:979px" width="20" height="21" viewBox="0 0 20 21" fill="none" stroke="#2b2b2b" stroke-width="1.2"><path d="M2,7 L8,3 L14,6 V14 L8,17 L2,14 Z M2,7 L8,10 L14,6 M8,10 V17" stroke="#222"/><rect x="10" y="11" width="9" height="8" fill="#f0f0f0" stroke="#2f6fd0"/><path d="M12,14 h5 M12,16.5 h5" stroke="#2f6fd0"/></svg><svg style="left:938px;top:988px" width="8" height="4"><path d="M0,0 L8,0 L4,4 Z" fill="#222"/></svg><div class="a" style="left:952px;top:977px;width:1px;height:27px;background:#888"></div><svg style="left:964px;top:979px" width="20" height="20" viewBox="0 0 20 20" fill="none" stroke="#2b2b2b" stroke-width="1.2"><path d="M1,3 L7,1 L13,3 V9 L7,11 L1,9 Z" stroke="#bbb"/><rect x="4.5" y="6.5" width="12" height="11" stroke="#222" stroke-width="1.2"/><rect x="3" y="5" width="3" height="3" fill="#222" stroke="none"/><rect x="15" y="5" width="3" height="3" fill="#222" stroke="none"/><rect x="3" y="16" width="3" height="3" fill="#222" stroke="none"/><rect x="15" y="16" width="3" height="3" fill="#222" stroke="none"/></svg><svg style="left:996px;top:988px" width="8" height="4"><path d="M0,0 L8,0 L4,4 Z" fill="#222"/></svg><svg style="left:1010px;top:979px" width="20" height="21" viewBox="0 0 20 21" fill="none" stroke="#2b2b2b" stroke-width="1.2"><path d="M2,10 L8,2 L14,6 V15 L8,17 L2,15 Z M8,2 V17" stroke="#222" stroke-width="1.1"/><path d="M11,12 H19 L16,16 V20 L14,19 V16 Z" stroke="#2f6fd0" fill="#dbe8f8"/></svg><svg style="left:1043px;top:979px" width="22" height="20" viewBox="0 0 22 20" fill="none" stroke="#2b2b2b" stroke-width="1.2"><path d="M2,10 L11,3 L20,8 L11,17 Z" stroke="#222" stroke-width="1.1"/><path d="M5,8 L12,4 L18,9 L11,15 Z" stroke="#2f6fd0" stroke-width="1.5"/></svg><svg style="left:1075px;top:988px" width="8" height="4"><path d="M0,0 L8,0 L4,4 Z" fill="#222"/></svg><div class="a" style="left:1090px;top:977px;width:1px;height:27px;background:#888"></div><svg style="left:1098px;top:978px" width="16" height="21" viewBox="0 0 16 21" fill="none" stroke="#2b2b2b" stroke-width="1.2"><path d="M6,1 V8 H10 V1 Z M3,10 H13 V12 H3 Z M2,13 H14 L14,19 H2 Z M4,19 L6,14 M8,19 L10,14" stroke="#222"/></svg><svg style="left:1126px;top:978px" width="18" height="21" viewBox="0 0 18 21" fill="none" stroke="#2b2b2b" stroke-width="1.2"><path d="M3,6 Q1,9 3,10 Q5,9 3,6 Z" stroke="#222"/><path d="M10,1 V8 H14 V1 Z M7,10 H17 V12 H7 Z M6,13 H18 V19 H6 Z M1,19 H6 M8,19 L10,14 M12,19 L14,14" stroke="#222"/></svg><div class="a" style="left:1155px;top:977px;width:1px;height:27px;background:#888"></div><svg style="left:1167px;top:980px" width="20" height="17" viewBox="0 0 20 17" fill="none" stroke="#2b2b2b" stroke-width="1.2"><path d="M1,4 H6 L8,1 H12 L14,4 H19 V16 H1 Z" stroke="#222" stroke-width="1.1"/><circle cx="10" cy="10" r="3.8" stroke="#222" stroke-width="1.1"/></svg><svg style="left:1199px;top:988px" width="8" height="4"><path d="M0,0 L8,0 L4,4 Z" fill="#222"/></svg><svg style="left:1213px;top:979px" width="21" height="21" viewBox="0 0 21 21" fill="none" stroke="#2b2b2b" stroke-width="1.2"><path d="M1,4 H5 L7,1 H11 L13,4 H16 V14 H1 Z" stroke="#222"/><circle cx="8.5" cy="9" r="3.3" stroke="#222"/><rect x="11" y="11" width="9" height="9" fill="#f0f0f0" stroke="#2f6fd0"/><path d="M13,14 h5 M13,17 h5" stroke="#2f6fd0"/></svg><svg style="left:1242px;top:979px" width="19" height="20" viewBox="0 0 19 20" fill="none" stroke="#2b2b2b" stroke-width="1.2"><path d="M3,18 V9 L9,3 L15,9 V18 Z M7,18 V13 H11 V18" stroke="#222"/><path d="M1,5 V17 M17,5 V17" stroke="#2f6fd0" stroke-dasharray="2 1.5"/></svg><div class="a" style="left:1271px;top:977px;width:1px;height:27px;background:#888"></div><svg style="left:1280px;top:980px" width="18" height="17" viewBox="0 0 18 17" fill="none" stroke="#2b2b2b" stroke-width="1.2"><path d="M1,6 L10,3 V14 L1,11 Z M10,6 L16,3 V14 L10,11 M12,10 L15,8" stroke="#222" stroke-width="1.1"/><path d="M2,16 Q6,18 10,15" stroke="#2f6fd0"/></svg><svg style="left:1309px;top:978px" width="19" height="21" viewBox="0 0 19 21" fill="none" stroke="#2b2b2b" stroke-width="1.2"><path d="M1,3 L6,8 M6,3 L1,8 M3.5,1 V10 M0,5.5 H7" stroke="#222"/><path d="M7,12 L12,7 L18,11 V17 L12,20 L7,17 Z M12,7 V20" stroke="#222" fill="#ccc"/></svg><div class="a" style="left:0px;top:1008px;width:1920px;height:24px;background:#f0f0f0"></div><div class="t" style="left:3px;top:1015.3px;font-size:12px;color:#000;line-height:14.4px;letter-spacing:-0.045px">Щелкните на элементе или начертите область выбора. Нажмите и не отпускайте Ctrl+Shift для переключения выбора элемента/подэлемента.</div><svg style="left:1745px;top:1013px" width="17" height="16" viewBox="0 0 17 16" fill="none" stroke="#2b2b2b" stroke-width="1.2"><rect x="0.5" y="3.5" width="11" height="9" stroke="#222"/><path d="M3,1.5 H14.5 V10" stroke="#222"/><path d="M9,9 Q12,5 15,9 M15,7 V9 H13 M16,12 Q13,16 10,12" stroke="#2f6fd0"/></svg><div class="a" style="left:1766px;top:1010px;width:1px;height:20px;background:#cfcfcf"></div><div class="t" style="left:1783px;top:1014.7px;font-size:13px;color:#9a9a9a;line-height:15.6px;letter-spacing:-0.3px">GRAPHISOFT ID</div><div class="a" style="left:1896px;top:1010px;width:1px;height:20px;background:#cfcfcf"></div></body></html>
